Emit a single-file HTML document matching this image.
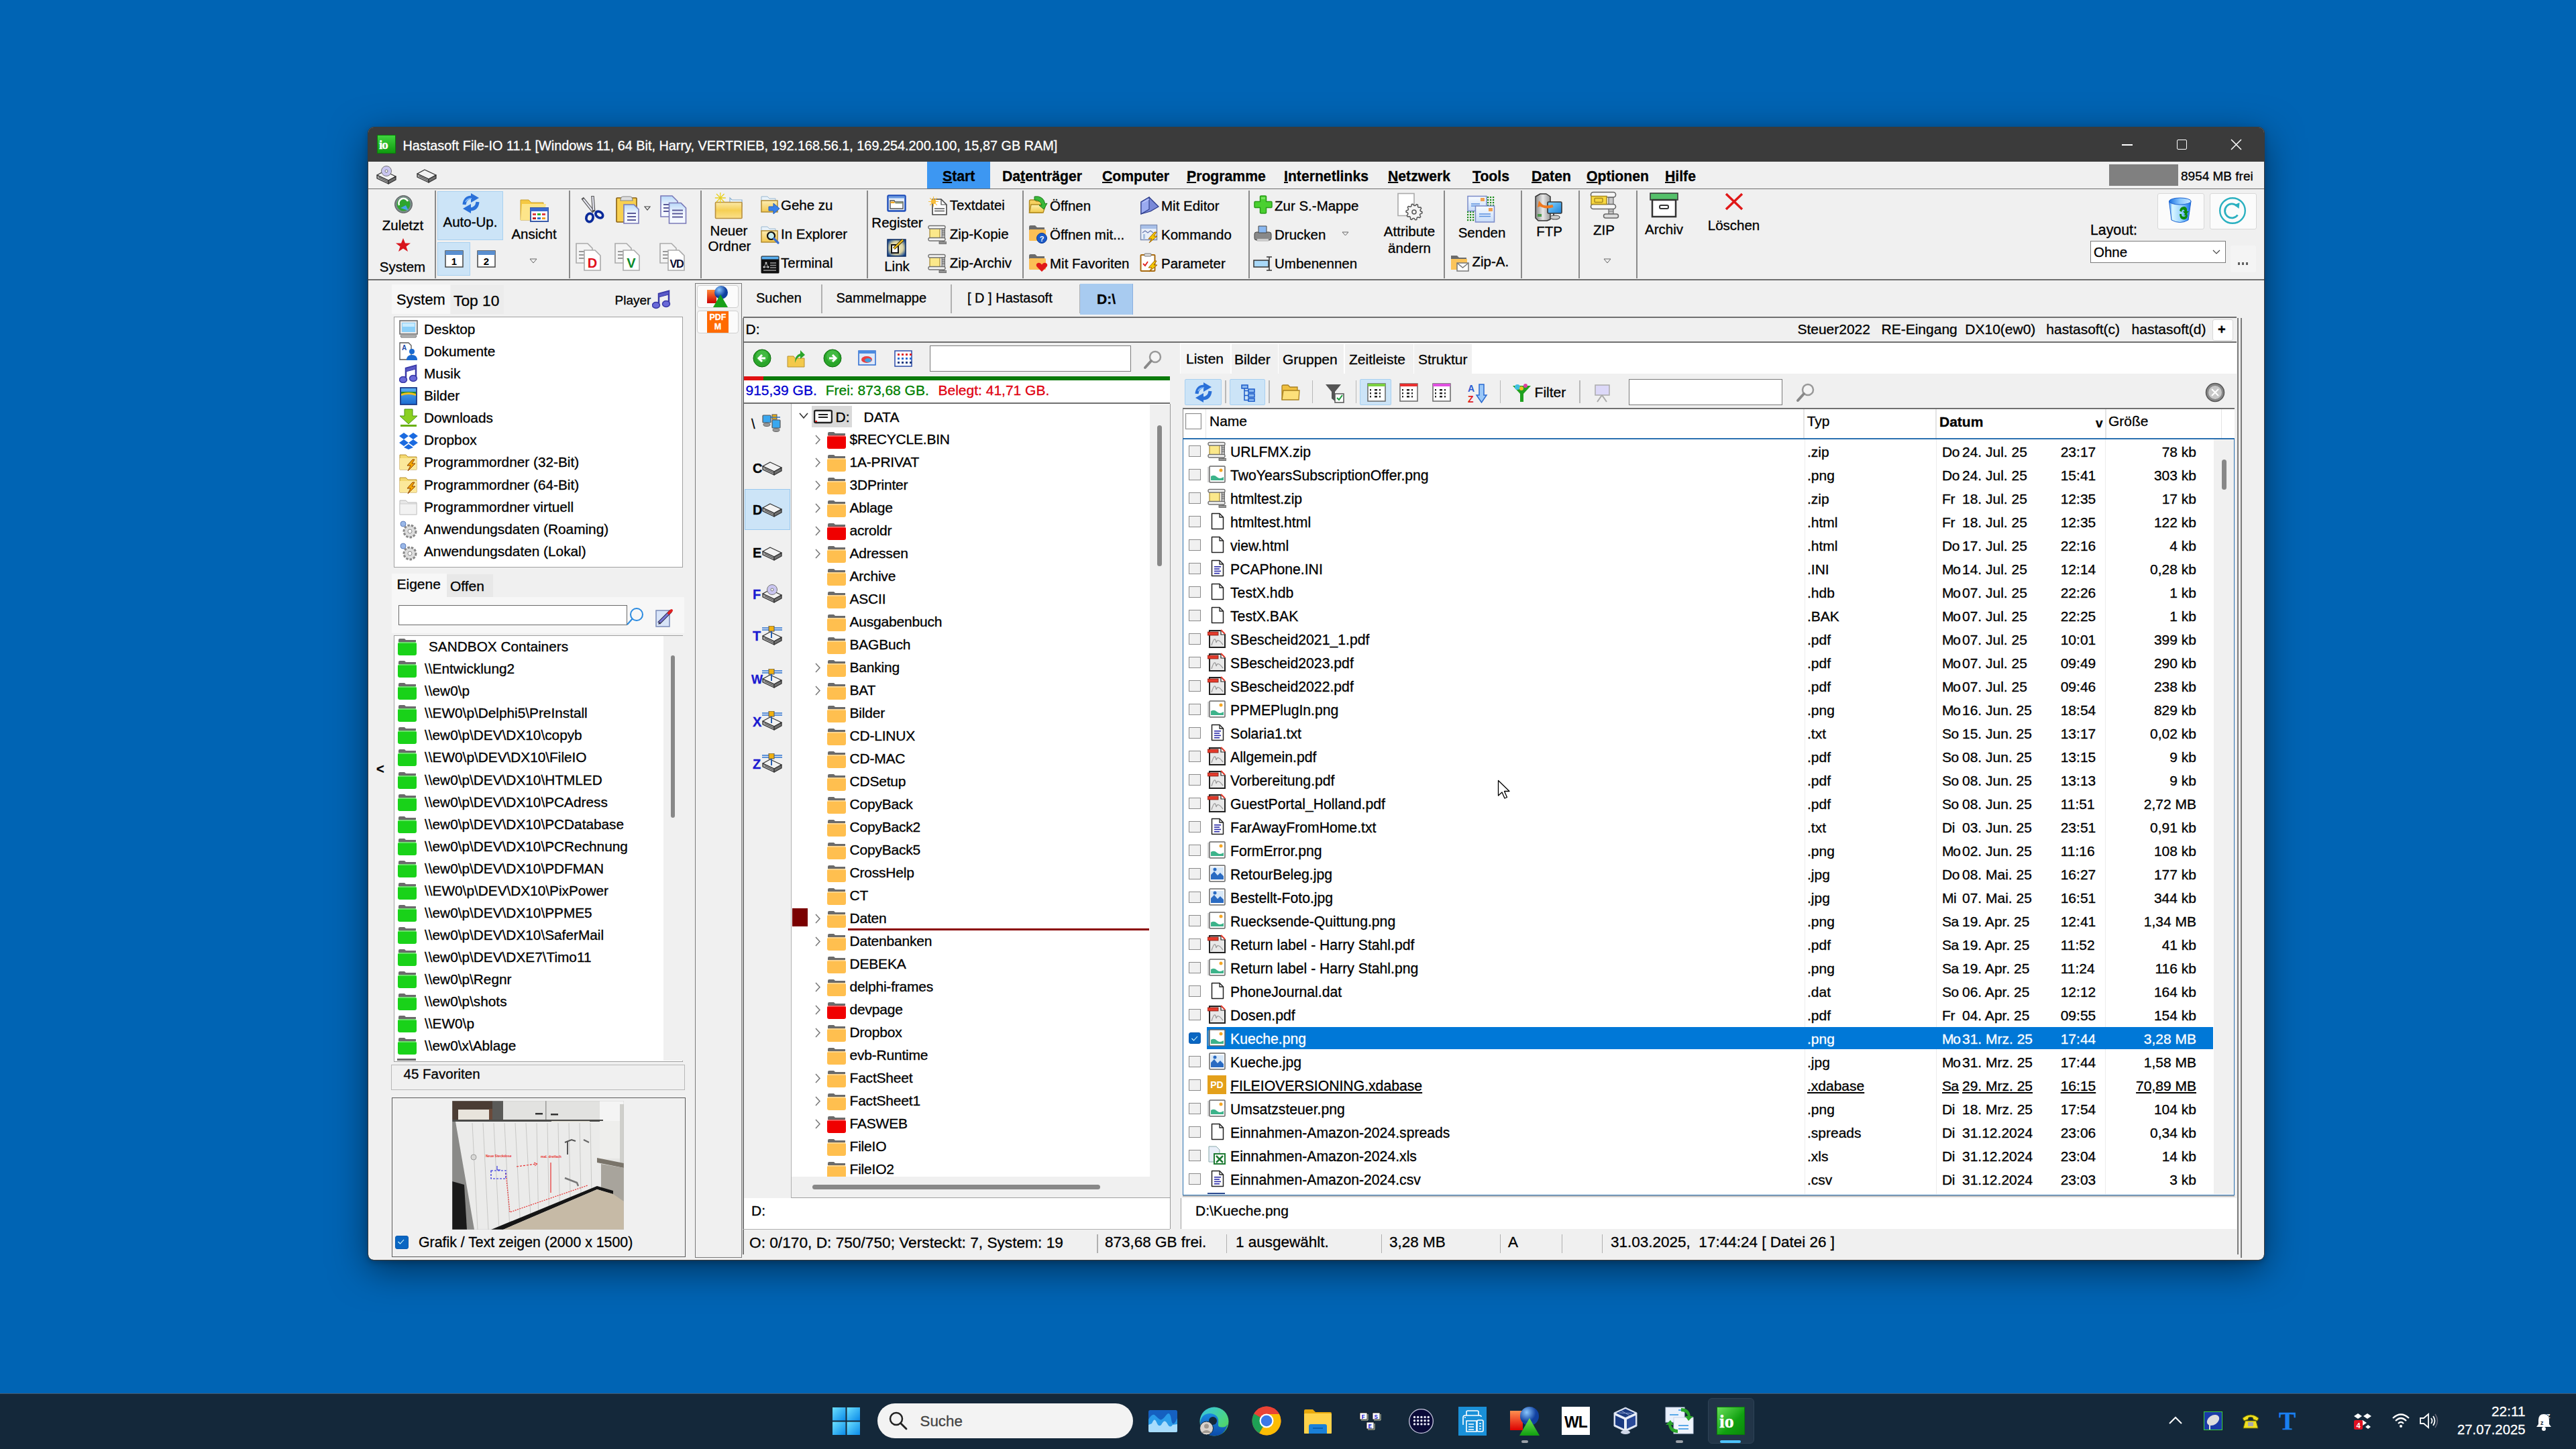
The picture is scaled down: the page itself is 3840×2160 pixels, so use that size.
<!DOCTYPE html><html><head><meta charset="utf-8"><style>
html,body{margin:0;padding:0;width:3840px;height:2160px;overflow:hidden;background:#0064b4}
body div,body svg{position:absolute}
.t{white-space:nowrap;font-family:"Liberation Sans",sans-serif;-webkit-text-stroke:0.3px currentColor}
</style></head><body><div style="left:0.0px;top:0.0px;width:3840.0px;height:2160.0px;background:#0064b4"></div>
<div style="left:549.0px;top:190.0px;width:2826.0px;height:1688.0px;background:#f0f0f0;border-radius:8px;box-shadow:0 14px 55px rgba(0,0,0,.5),0 3px 10px rgba(0,0,0,.25);outline:1px solid #3a3a3a"></div>
<div style="left:549.0px;top:190.0px;width:2826.0px;height:51.0px;background:#3b3b3b;border-radius:8px 8px 0 0"></div>
<div style="left:562.0px;top:201.0px;width:28.0px;height:28.0px;background:linear-gradient(#3fd43f,#0f9a0f);border:1px solid #0a7a0a;box-sizing:border-box"></div>
<div class="t" style="left:565.0px;top:204.0px;line-height:24px;font-size:19px;font-weight:700;color:#fff;font-family:'Liberation Serif';letter-spacing:-1px">io</div>
<div class="t" style="left:600.5px;top:204.5px;line-height:25px;font-size:19.85px;font-weight:400;color:#fff;">Hastasoft File-IO 11.1 [Windows 11, 64 Bit, Harry, VERTRIEB, 192.168.56.1, 169.254.200.100, 15,87 GB RAM]</div>
<div style="left:3163.0px;top:215.0px;width:16.0px;height:1.5px;background:#fff"></div>
<div style="left:3245.0px;top:208.0px;width:15.0px;height:15.0px;border:1.5px solid #fff;border-radius:2px;box-sizing:border-box"></div>
<svg style="left:3325.0px;top:207.0px" width="17.0" height="17.0" viewBox="0 0 17 17"><path d="M1 1 L16 16 M16 1 L1 16" stroke="#fff" stroke-width="1.5"/></svg>
<div style="left:549.0px;top:241.0px;width:2826.0px;height:40.0px;background:#f0f0f0"></div>
<svg style="left:561.0px;top:246.0px" width="30.0" height="30.0" viewBox="0 0 30 30"><g transform="translate(0,6)"><path d="M1 9 L12 3 L29 11 L18 17Z" fill="#f2f2f2" stroke="#333" stroke-width="1.3" stroke-linejoin="round"/><path d="M1 9 V14 L18 22 V17Z" fill="#a8a8a8" stroke="#333" stroke-width="1.3" stroke-linejoin="round"/><path d="M18 17 V22 L29 16 V11Z" fill="#707070" stroke="#333" stroke-width="1.3" stroke-linejoin="round"/><path d="M4 12.5 L17 19" stroke="#555" stroke-width="1.2"/></g><circle cx="15" cy="9" r="7.5" fill="#c9c5f0" stroke="#777" stroke-width="1"/><circle cx="15" cy="9" r="2" fill="#fff" stroke="#777"/></svg>
<svg style="left:621.0px;top:250.0px" width="30.0" height="24.0" viewBox="0 0 30 24"><path d="M1 9 L12 3 L29 11 L18 17Z" fill="#f2f2f2" stroke="#333" stroke-width="1.3" stroke-linejoin="round"/><path d="M1 9 V14 L18 22 V17Z" fill="#a8a8a8" stroke="#333" stroke-width="1.3" stroke-linejoin="round"/><path d="M18 17 V22 L29 16 V11Z" fill="#707070" stroke="#333" stroke-width="1.3" stroke-linejoin="round"/><path d="M4 12.5 L17 19" stroke="#555" stroke-width="1.2"/></svg>
<div style="left:1382.0px;top:241.0px;width:93.5px;height:40.0px;background:#3d97f2"></div>
<div class="t" style="left:1405.0px;top:250.0px;line-height:26px;font-size:21.2px;font-weight:700;color:#000;text-underline-offset:1px;text-decoration-thickness:1.5px"><u>S</u>tart</div>
<div class="t" style="left:1494.0px;top:250.0px;line-height:26px;font-size:21.2px;font-weight:700;color:#000;text-underline-offset:1px;text-decoration-thickness:1.5px">Da<u>t</u>enträger</div>
<div class="t" style="left:1643.0px;top:250.0px;line-height:26px;font-size:21.2px;font-weight:700;color:#000;text-underline-offset:1px;text-decoration-thickness:1.5px"><u>C</u>omputer</div>
<div class="t" style="left:1769.0px;top:250.0px;line-height:26px;font-size:21.2px;font-weight:700;color:#000;text-underline-offset:1px;text-decoration-thickness:1.5px"><u>P</u>rogramme</div>
<div class="t" style="left:1914.0px;top:250.0px;line-height:26px;font-size:21.2px;font-weight:700;color:#000;text-underline-offset:1px;text-decoration-thickness:1.5px"><u>I</u>nternetlinks</div>
<div class="t" style="left:2069.0px;top:250.0px;line-height:26px;font-size:21.2px;font-weight:700;color:#000;text-underline-offset:1px;text-decoration-thickness:1.5px"><u>N</u>etzwerk</div>
<div class="t" style="left:2195.0px;top:250.0px;line-height:26px;font-size:21.2px;font-weight:700;color:#000;text-underline-offset:1px;text-decoration-thickness:1.5px"><u>T</u>ools</div>
<div class="t" style="left:2283.0px;top:250.0px;line-height:26px;font-size:21.2px;font-weight:700;color:#000;text-underline-offset:1px;text-decoration-thickness:1.5px"><u>D</u>aten</div>
<div class="t" style="left:2365.0px;top:250.0px;line-height:26px;font-size:21.2px;font-weight:700;color:#000;text-underline-offset:1px;text-decoration-thickness:1.5px"><u>O</u>ptionen</div>
<div class="t" style="left:2482.0px;top:250.0px;line-height:26px;font-size:21.2px;font-weight:700;color:#000;text-underline-offset:1px;text-decoration-thickness:1.5px"><u>H</u>ilfe</div>
<div style="left:3144.0px;top:245.0px;width:103.0px;height:31.5px;background:#808080"></div>
<div class="t" style="left:3251.0px;top:251.0px;line-height:24px;font-size:19.0px;font-weight:400;color:#000;">8954 MB frei</div>
<div style="left:549.0px;top:280.5px;width:2826.0px;height:1.3px;background:#6e6e6e"></div>
<div style="left:549.0px;top:282.5px;width:2826.0px;height:134.0px;background:#f0f0f0"></div>
<div style="left:549.0px;top:416.0px;width:2826.0px;height:2.0px;background:#6e6e6e"></div>
<div style="left:648.0px;top:284.0px;width:2.0px;height:131.0px;background:#8a8a8a"></div>
<div style="left:848.0px;top:284.0px;width:2.0px;height:131.0px;background:#8a8a8a"></div>
<div style="left:1044.0px;top:284.0px;width:2.0px;height:131.0px;background:#8a8a8a"></div>
<div style="left:1292.0px;top:284.0px;width:2.0px;height:131.0px;background:#8a8a8a"></div>
<div style="left:1524.0px;top:284.0px;width:2.0px;height:131.0px;background:#8a8a8a"></div>
<div style="left:1861.0px;top:284.0px;width:2.0px;height:131.0px;background:#8a8a8a"></div>
<div style="left:2152.0px;top:284.0px;width:2.0px;height:131.0px;background:#8a8a8a"></div>
<div style="left:2267.0px;top:284.0px;width:2.0px;height:131.0px;background:#8a8a8a"></div>
<div style="left:2353.0px;top:284.0px;width:2.0px;height:131.0px;background:#8a8a8a"></div>
<div style="left:2439.0px;top:284.0px;width:2.0px;height:131.0px;background:#8a8a8a"></div>
<svg style="left:587.0px;top:290.0px" width="29.0" height="29.0" viewBox="0 0 29 29"><circle cx="14.5" cy="14.5" r="13" fill="#7a8a8a" stroke="#555" stroke-width="1"/><circle cx="14.5" cy="14.5" r="10" fill="#2ea52e"/><path d="M8 16 A7 7 0 0 1 21 10" stroke="#fff" stroke-width="2.5" fill="none"/><path d="M10 20 L22 24 L18 16Z" fill="#4aa3e8"/></svg>
<div class="t" style="left:500.5px;width:200px;text-align:center;top:323.0px;line-height:26px;font-size:20.5px;font-weight:400;color:#000;">Zuletzt</div>
<svg style="left:589.0px;top:354.0px" width="24.0" height="22.0" viewBox="0 0 24 22"><path d="M12 1 L15 8.5 L23 8.5 L16.5 13.5 L19 21 L12 16.5 L5 21 L7.5 13.5 L1 8.5 L9 8.5Z" fill="#d8141c"/></svg>
<div class="t" style="left:500.0px;width:200px;text-align:center;top:384.5px;line-height:26px;font-size:20.5px;font-weight:400;color:#000;">System</div>
<div style="left:651.5px;top:284.5px;width:98.0px;height:73.0px;background:#cce4f7;border:1px solid #a8d0f0;box-sizing:border-box"></div>
<div style="left:651.5px;top:361.0px;width:49.0px;height:50.0px;background:#cce4f7;border:1px solid #a8d0f0;box-sizing:border-box"></div>
<svg style="left:687.0px;top:288.0px" width="30.0" height="30.0" viewBox="0 0 30 30"><path d="M5 17 Q6 6 17 6" stroke="#2a70d8" stroke-width="5" fill="none"/><path d="M15 0 L27 7 L15 14Z" fill="#2a70d8"/><path d="M25 13 Q24 24 13 24" stroke="#2a70d8" stroke-width="5" fill="none"/><path d="M15 30 L3 23 L15 16Z" fill="#2a70d8"/><path d="M7 13 Q9 8 16 8" stroke="#8ac0ff" stroke-width="1.5" fill="none"/></svg>
<div class="t" style="left:601.0px;width:200px;text-align:center;top:317.5px;line-height:26px;font-size:20.5px;font-weight:400;color:#000;">Auto-Up.</div>
<svg style="left:663.0px;top:373.0px" width="28.0" height="26.0" viewBox="0 0 28 26"><rect x="1" y="1" width="26" height="24" fill="#fff" stroke="#444" stroke-width="1.5"/><rect x="1" y="1" width="26" height="6" fill="#5a8fd0"/><text x="14" y="22" font-family="Liberation Sans" font-size="15" font-weight="700" text-anchor="middle">1</text></svg>
<svg style="left:711.0px;top:373.0px" width="28.0" height="26.0" viewBox="0 0 28 26"><rect x="1" y="1" width="26" height="24" fill="#fff" stroke="#444" stroke-width="1.5"/><rect x="1" y="1" width="26" height="6" fill="#5a8fd0"/><text x="14" y="22" font-family="Liberation Sans" font-size="15" font-weight="700" text-anchor="middle">2</text></svg>
<svg style="left:774.0px;top:290.0px" width="44.0" height="43.0" viewBox="0 0 44 43"><path d="M2 8 H14 L18 12 H36 V38 H2Z" fill="#f5c842" stroke="#c8a030" stroke-width="1"/><path d="M4 14 H40 L36 38 H2Z" fill="#fde58a"/><rect x="17" y="20" width="26" height="20" fill="#fff" stroke="#3a5aa8" stroke-width="2"/><rect x="17" y="20" width="26" height="5" fill="#3a6ad0"/><g fill="#e04040"><rect x="20" y="28" width="5" height="3"/><rect x="20" y="34" width="5" height="3" fill="#c02020"/></g><rect x="27" y="28" width="5" height="3" fill="#2db52d"/><rect x="34" y="28" width="5" height="3" fill="#e04040"/><rect x="27" y="34" width="5" height="3" fill="#2a70d0"/><rect x="34" y="34" width="5" height="3" fill="#f0a020"/></svg>
<div class="t" style="left:696.0px;width:200px;text-align:center;top:336.0px;line-height:26px;font-size:20.5px;font-weight:400;color:#000;">Ansicht</div>
<svg style="left:789.0px;top:385.0px" width="12.0" height="8.0" viewBox="0 0 12 8"><path d="M1 1 H11 L6 7Z" fill="none" stroke="#666" stroke-width="1"/></svg>
<svg style="left:866.0px;top:292.0px" width="36.0" height="42.0" viewBox="0 0 36 42"><path d="M3.6 4.9 L17.5 22.3" stroke="#555" stroke-width="4.5" stroke-linecap="square"/><path d="M3.6 4.9 L17.5 22.3" stroke="#e8e8f4" stroke-width="2.2"/><path d="M17.5 1 L19 21" stroke="#555" stroke-width="4.5" stroke-linecap="square"/><path d="M17.5 1 L19 21" stroke="#e8e8f4" stroke-width="2.2"/><ellipse cx="13" cy="32.5" rx="5" ry="6.2" fill="none" stroke="#0a2a9a" stroke-width="3.8" transform="rotate(15 13 32.5)"/><ellipse cx="27.3" cy="28" rx="5.8" ry="4.2" fill="none" stroke="#0a2a9a" stroke-width="3.8" transform="rotate(35 27.3 28)"/></svg>
<svg style="left:917.0px;top:292.0px" width="40.0" height="43.0" viewBox="0 0 40 43"><defs><linearGradient id="pg" x1="0" y1="0" x2="0" y2="1"><stop offset="0" stop-color="#b8d8f8"/><stop offset=".5" stop-color="#f4f8ff"/></linearGradient></defs><rect x="2" y="3" width="30" height="36" rx="1" fill="#f8d050" stroke="#8a6010" stroke-width="1.6"/><path d="M8 7 Q8 1 12 1 H22 Q26 1 26 7Z" fill="#ddd" stroke="#888" stroke-width="1.2"/><path d="M13 13 H28 L35 20 V41 H13Z" fill="url(#pg)" stroke="#7a7ab8" stroke-width="1.6"/><path d="M18 26 H31 M18 31 H31 M18 36 H31" stroke="#5a5a98" stroke-width="2"/></svg>
<svg style="left:960.0px;top:307.0px" width="10.0" height="7.0" viewBox="0 0 10 7"><path d="M1 1 H9 L5 6Z" fill="none" stroke="#444" stroke-width="1.1"/></svg>
<svg style="left:984.0px;top:291.0px" width="40.0" height="43.0" viewBox="0 0 40 43"><defs><linearGradient id="pg2" x1="0" y1="0" x2="0" y2="1"><stop offset="0" stop-color="#b8d8f8"/><stop offset=".5" stop-color="#f4f8ff"/></linearGradient></defs><path d="M1 1 H18 L26 9 V32 H1Z" fill="url(#pg2)" stroke="#7a7ab8" stroke-width="1.6"/><path d="M5 14 H16 M5 19 H16 M5 24 H16" stroke="#5a5a98" stroke-width="2"/><path d="M13.5 11.5 H31 L38.5 19 V42 H13.5Z" fill="url(#pg2)" stroke="#7a7ab8" stroke-width="1.6"/><path d="M18 22.5 H34 M18 27.5 H34 M18 32.5 H34" stroke="#5a5a98" stroke-width="2"/></svg>
<svg style="left:858.0px;top:362.0px" width="40.0" height="43.0" viewBox="0 0 40 43"><path d="M1 1 H18 L25 8 V30 H1Z" fill="#f4f4f4" stroke="#aaa" stroke-width="1.6"/><path d="M5 13 H16 M5 18 H16 M5 23 H16" stroke="#999" stroke-width="1.8"/><path d="M13 11 H29 L37 19 V41 H13Z" fill="#fff" stroke="#aaa" stroke-width="1.6"/><text x="25" y="36.5" font-family="Liberation Sans" font-size="20" font-weight="700" fill="#e0101a" text-anchor="middle" >D</text></svg>
<svg style="left:916.0px;top:362.0px" width="40.0" height="43.0" viewBox="0 0 40 43"><path d="M1 1 H18 L25 8 V30 H1Z" fill="#f4f4f4" stroke="#aaa" stroke-width="1.6"/><path d="M5 13 H16 M5 18 H16 M5 23 H16" stroke="#999" stroke-width="1.8"/><path d="M13 11 H29 L37 19 V41 H13Z" fill="#fff" stroke="#aaa" stroke-width="1.6"/><text x="25" y="36.5" font-family="Liberation Sans" font-size="20" font-weight="700" fill="#0a8a2a" text-anchor="middle" >V</text></svg>
<svg style="left:983.0px;top:362.0px" width="40.0" height="43.0" viewBox="0 0 40 43"><path d="M1 1 H18 L25 8 V30 H1Z" fill="#f4f4f4" stroke="#aaa" stroke-width="1.6"/><path d="M5 13 H16 M5 18 H16 M5 23 H16" stroke="#999" stroke-width="1.8"/><path d="M13 11 H29 L37 19 V41 H13Z" fill="#fff" stroke="#aaa" stroke-width="1.6"/><text x="25.5" y="36.5" font-family="Liberation Sans" font-size="16" font-weight="700" fill="#0a0a30" text-anchor="middle" letter-spacing='-1'>VD</text></svg>
<svg style="left:1064.0px;top:286.0px" width="44.0" height="41.0" viewBox="0 0 44 41"><defs><linearGradient id="fy" x1="0" y1="0" x2="0" y2="1"><stop offset="0" stop-color="#fbe9a8"/><stop offset=".5" stop-color="#f5cf55"/><stop offset="1" stop-color="#fbe08a"/></linearGradient></defs><path d="M24 9 L27 12 H42 V22 H24Z" fill="#eef6fc" stroke="#8ab0d0" stroke-width="1.2"/><rect x="2.5" y="15.5" width="39.5" height="24" rx="1" fill="url(#fy)" stroke="#b89040" stroke-width="1.6"/><g stroke="#e8d020" stroke-width="1.3"><path d="M9.8 1 V17 M1.8 9 H17.8 M4 3 L15.6 15 M15.6 3 L4 15"/></g></svg>
<div class="t" style="left:986.5px;width:200px;text-align:center;top:330.5px;line-height:26px;font-size:20.5px;font-weight:400;color:#000;">Neuer</div>
<div class="t" style="left:987.5px;width:200px;text-align:center;top:354.0px;line-height:26px;font-size:20.5px;font-weight:400;color:#000;">Ordner</div>
<svg style="left:1134.0px;top:292.0px" width="30.0" height="28.0" viewBox="0 0 30 28"><defs><linearGradient id="fy2" x1="0" y1="0" x2="0" y2="1"><stop offset="0" stop-color="#fcecb0"/><stop offset="1" stop-color="#f2c850"/></linearGradient></defs><path d="M1 1 H10 L13 4 H22 V9 H1Z" fill="#e8f2fa" stroke="#9ab8d0" stroke-width="1"/><rect x="1" y="7" width="24" height="17" fill="url(#fy2)" stroke="#b08a30" stroke-width="1.5"/><path d="M12 16 H19 V11 L28 19 L19 27 V22 H12Z" fill="#3a80e8" stroke="#2060c0" stroke-width="1"/></svg>
<div class="t" style="left:1164.0px;top:292.5px;line-height:26px;font-size:20.5px;font-weight:400;color:#000;">Gehe zu</div>
<svg style="left:1134.0px;top:336.5px" width="30.0" height="28.0" viewBox="0 0 30 28"><defs><linearGradient id="fy2" x1="0" y1="0" x2="0" y2="1"><stop offset="0" stop-color="#fcecb0"/><stop offset="1" stop-color="#f2c850"/></linearGradient></defs><path d="M1 1 H10 L13 4 H22 V9 H1Z" fill="#e8f2fa" stroke="#9ab8d0" stroke-width="1"/><rect x="1" y="7" width="24" height="17" fill="url(#fy2)" stroke="#b08a30" stroke-width="1.5"/><circle cx="15.5" cy="14.5" r="5.5" fill="#c8eef0" stroke="#111" stroke-width="2.2"/><path d="M19.5 18.5 L26 25" stroke="#3a70d0" stroke-width="3.2" stroke-linecap="round"/></svg>
<div class="t" style="left:1164.0px;top:336.0px;line-height:26px;font-size:20.5px;font-weight:400;color:#000;">In Explorer</div>
<svg style="left:1134.0px;top:380.5px" width="28.0" height="27.0" viewBox="0 0 28 27"><rect x="0.5" y="0.5" width="27" height="26" rx="1.5" fill="#101010"/><rect x="1.5" y="1.5" width="25" height="4" fill="#5ab0f0"/><circle cx="8" cy="11" r="1.5" fill="#ddd"/><circle cx="5" cy="17" r="1.5" fill="#ddd"/><circle cx="11" cy="17" r="1.5" fill="#ddd"/><path d="M8 11 L5 17 H11Z" stroke="#aaa" fill="none"/><path d="M14 11 H23 M14 14.5 H23 M14 18 H23 M4 22 H23" stroke="#999" stroke-width="1.3"/></svg>
<div class="t" style="left:1164.0px;top:379.0px;line-height:26px;font-size:20.5px;font-weight:400;color:#000;">Terminal</div>
<svg style="left:1322.0px;top:290.0px" width="30.0" height="27.0" viewBox="0 0 30 27"><rect x="1.5" y="1.5" width="26" height="23" rx="1.5" fill="#e4eefa" stroke="#1a4ab8" stroke-width="2.4"/><rect x="2.5" y="2.5" width="24" height="3" fill="#6a9ae0"/><path d="M5 9 H11 L12 11 H24 V21 H5Z" fill="#fff" stroke="#555" stroke-width="1.4"/><rect x="5.5" y="10.5" width="6" height="2.5" fill="#f0a820"/><rect x="12.5" y="11.5" width="11" height="2" fill="#8a9a7a"/></svg>
<div class="t" style="left:1237.5px;width:200px;text-align:center;top:319.0px;line-height:26px;font-size:20.5px;font-weight:400;color:#000;">Register</div>
<svg style="left:1322.0px;top:356.0px" width="30.0" height="27.0" viewBox="0 0 30 27"><defs><radialGradient id="lkg" cx=".5" cy=".5" r=".6"><stop offset="0" stop-color="#f8f4d8"/><stop offset=".6" stop-color="#d8d0a0"/><stop offset="1" stop-color="#1a4a90"/></radialGradient></defs><rect x="1" y="1" width="27" height="25" fill="url(#lkg)" stroke="#0a2a60" stroke-width="1.5"/><rect x="7" y="9" width="10" height="12" fill="#fff" stroke="#111" stroke-width="2"/><path d="M10.5 14.5 L24 1.5" stroke="#3a2a00" stroke-width="4"/><path d="M10.5 14.5 L24 1.5" stroke="#f0c020" stroke-width="2.4"/></svg>
<div class="t" style="left:1237.0px;width:200px;text-align:center;top:384.0px;line-height:26px;font-size:20.5px;font-weight:400;color:#000;">Link</div>
<svg style="left:1383.0px;top:291.5px" width="30.0" height="29.0" viewBox="0 0 30 29"><path d="M7 5 H20 L28 13 V28 H7Z" fill="#fff" stroke="#444" stroke-width="1.6" stroke-linejoin="round"/><path d="M20 5 V13 H28" fill="none" stroke="#444" stroke-width="1.2"/><path d="M10 19 H25 M10 22.5 H25" stroke="#555" stroke-width="1.3"/><circle cx="8.5" cy="8.5" r="3.5" fill="#f7b020"/><g stroke="#f7c040" stroke-width="1.2"><path d="M8.5 1 V16 M1 8.5 H16 M3.2 3.2 L13.8 13.8 M13.8 3.2 L3.2 13.8"/></g></svg>
<div class="t" style="left:1415.8px;top:292.5px;line-height:26px;font-size:20.5px;font-weight:400;color:#000;">Textdatei</div>
<svg style="left:1383.0px;top:335.0px" width="28.0" height="29.0" viewBox="0 0 28 29"><rect x="3" y="4" width="15" height="17" fill="#fbe88a" stroke="#a88a30" stroke-width="1.2"/><rect x="1" y="1.5" width="25" height="4.5" rx="2" fill="#f4f4f4" stroke="#707070" stroke-width="1.4"/><rect x="1" y="19.5" width="25" height="4.5" rx="2" fill="#f4f4f4" stroke="#707070" stroke-width="1.4"/><rect x="21" y="6" width="4.5" height="13.5" fill="#b8b8b8" stroke="#666" stroke-width="1"/><path d="M21 9 H25.5 M21 12 H25.5 M21 15 H25.5" stroke="#555" stroke-width="0.8"/><rect x="21.5" y="24" width="3.5" height="2" fill="#888"/><rect x="17" y="25.5" width="11" height="3" fill="#999" stroke="#555" stroke-width="0.8"/></svg>
<div class="t" style="left:1415.8px;top:336.0px;line-height:26px;font-size:20.5px;font-weight:400;color:#000;">Zip-Kopie</div>
<svg style="left:1383.0px;top:378.0px" width="28.0" height="29.0" viewBox="0 0 28 29"><rect x="3" y="4" width="15" height="17" fill="#fbe88a" stroke="#a88a30" stroke-width="1.2"/><rect x="1" y="1.5" width="25" height="4.5" rx="2" fill="#f4f4f4" stroke="#707070" stroke-width="1.4"/><rect x="1" y="19.5" width="25" height="4.5" rx="2" fill="#f4f4f4" stroke="#707070" stroke-width="1.4"/><rect x="21" y="6" width="4.5" height="13.5" fill="#b8b8b8" stroke="#666" stroke-width="1"/><path d="M21 9 H25.5 M21 12 H25.5 M21 15 H25.5" stroke="#555" stroke-width="0.8"/><rect x="21.5" y="24" width="3.5" height="2" fill="#888"/><rect x="17" y="25.5" width="11" height="3" fill="#999" stroke="#555" stroke-width="0.8"/></svg>
<div class="t" style="left:1415.8px;top:379.0px;line-height:26px;font-size:20.5px;font-weight:400;color:#000;">Zip-Archiv</div>
<svg style="left:1533.0px;top:290.5px" width="30.0" height="28.0" viewBox="0 0 30 28"><defs><linearGradient id="of" x1="0" y1="0" x2="0" y2="1"><stop offset="0" stop-color="#fdf0b0"/><stop offset="1" stop-color="#f0c848"/></linearGradient></defs><path d="M1.5 9 Q1.5 7 3.5 7 H10 L12 9 H20 V26 H1.5Z" fill="#f5d060" stroke="#b08a20" stroke-width="1.4"/><path d="M4 14 H26 L22 26 H1.5Z" fill="url(#of)" stroke="#b08a20" stroke-width="1.4"/><path d="M9 2 Q22 0 25 13 L28 12 L23 21 L16 15 L20 15 Q18 7 9 7Z" fill="#3ab83a" stroke="#1a7a1a" stroke-width="1"/></svg>
<div class="t" style="left:1565.0px;top:293.5px;line-height:26px;font-size:20.5px;font-weight:400;color:#000;">Öffnen</div>
<svg style="left:1533.0px;top:333.5px" width="29.0" height="29.0" viewBox="0 0 29 29"><path d="M1 4 Q1 2 3 2 H10 L13 5 H24 V9 H1Z" fill="#6b6b6b"/><rect x="1" y="8" width="25" height="17" rx="1.5" fill="#fbbf55"/><circle cx="20" cy="21" r="7.5" fill="#1a5ac8" stroke="#0a3a98" stroke-width="1"/><text x="20" y="25.5" font-size="11" font-family="Liberation Sans" font-weight="700" fill="#fff" text-anchor="middle">?</text></svg>
<div class="t" style="left:1565.0px;top:336.5px;line-height:26px;font-size:20.5px;font-weight:400;color:#000;">Öffnen mit...</div>
<svg style="left:1533.0px;top:376.5px" width="29.0" height="29.0" viewBox="0 0 29 29"><path d="M1 4 Q1 2 3 2 H10 L13 5 H24 V9 H1Z" fill="#6b6b6b"/><rect x="1" y="8" width="25" height="17" rx="1.5" fill="#fbbf55"/><path d="M20 28 L13 21 Q10 17 14 15 Q18 14 20 17.5 Q22 14 26 15 Q30 17 27 21Z" fill="#e01818"/></svg>
<div class="t" style="left:1565.0px;top:379.5px;line-height:26px;font-size:20.5px;font-weight:400;color:#000;">Mit Favoriten</div>
<svg style="left:1699.0px;top:291.5px" width="30.0" height="28.0" viewBox="0 0 30 28"><path d="M2 9 L14 2 L28 16 L16 23 L2 27Z" fill="#7a8ad8" stroke="#2a3a88" stroke-width="1.3" stroke-linejoin="round"/><path d="M2 9 L14 2 L14 20 L2 27Z" fill="#9aaaf0" stroke="#2a3a88" stroke-width="1.1"/><path d="M5 10 L14 5" stroke="#c8d0ff" stroke-width="1"/></svg>
<div class="t" style="left:1731.0px;top:293.5px;line-height:26px;font-size:20.5px;font-weight:400;color:#000;">Mit Editor</div>
<svg style="left:1699.0px;top:333.5px" width="30.0" height="29.0" viewBox="0 0 30 29"><rect x="1.5" y="1.5" width="24" height="22" fill="#e8eef8" stroke="#7a8ab0" stroke-width="1.5"/><rect x="2" y="2" width="23" height="5" fill="#a8c0e8"/><path d="M4 13 L8 10 L12 13 L16 10 L20 13" stroke="#6a7ab0" fill="none" stroke-width="1.2"/><rect x="5" y="15" width="3" height="7" fill="#a8c0e0"/><path d="M22 12 L13 22 H18 L14 28 L26 18 H21 L25 12Z" fill="#f5c800" stroke="#a06000" stroke-width="1"/></svg>
<div class="t" style="left:1731.0px;top:336.5px;line-height:26px;font-size:20.5px;font-weight:400;color:#000;">Kommando</div>
<svg style="left:1699.0px;top:376.5px" width="30.0" height="29.0" viewBox="0 0 30 29"><rect x="1.5" y="3" width="21" height="24" rx="1" fill="#fff" stroke="#a86a10" stroke-width="2"/><rect x="7" y="1" width="10" height="4" rx="1" fill="#ddd" stroke="#777"/><path d="M5 16 L8 19 L12 13" stroke="#e02020" stroke-width="1.8" fill="none"/><path d="M22 12 L13 22 H18 L14 28 L26 18 H21 L25 12Z" fill="#f5c800" stroke="#a06000" stroke-width="1"/></svg>
<div class="t" style="left:1731.0px;top:379.5px;line-height:26px;font-size:20.5px;font-weight:400;color:#000;">Parameter</div>
<svg style="left:1869.0px;top:291.0px" width="28.0" height="28.0" viewBox="0 0 28 28"><path d="M9.5 2 Q9.5 1 11 1 H17 Q18.5 1 18.5 2 V9.5 H26 Q27 9.5 27 11 V17 Q27 18.5 26 18.5 H18.5 V26 Q18.5 27 17 27 H11 Q9.5 27 9.5 26 V18.5 H2 Q1 18.5 1 17 V11 Q1 9.5 2 9.5 H9.5Z" fill="#4ad030" stroke="#2a9a1a" stroke-width="1.5"/><path d="M11 3 H17 V6 H11Z" fill="#9af080" opacity=".6"/></svg>
<div class="t" style="left:1900.0px;top:293.5px;line-height:26px;font-size:20.5px;font-weight:400;color:#000;">Zur S.-Mappe</div>
<svg style="left:1868.0px;top:334.0px" width="28.0" height="28.0" viewBox="0 0 28 28"><rect x="2" y="12" width="25" height="12" rx="3" fill="#888" stroke="#444"/><path d="M8 3 H20 V13 H8Z" fill="#8ab8f0" stroke="#444"/><rect x="6" y="22" width="17" height="4" fill="#ccc"/></svg>
<div class="t" style="left:1900.0px;top:336.5px;line-height:26px;font-size:20.5px;font-weight:400;color:#000;">Drucken</div>
<svg style="left:2000.0px;top:345.0px" width="11.0" height="8.0" viewBox="0 0 11 8"><path d="M1 1 H10 L5.5 6Z" fill="none" stroke="#666" stroke-width="1"/></svg>
<svg style="left:1868.0px;top:381.0px" width="30.0" height="24.0" viewBox="0 0 30 24"><rect x="1" y="7" width="22" height="10" fill="#a8d8f8" stroke="#333" stroke-width="1.5"/><path d="M24 2 V22 M20 2 H28 M20 22 H28" stroke="#333" stroke-width="1.5"/></svg>
<div class="t" style="left:1900.0px;top:380.0px;line-height:26px;font-size:20.5px;font-weight:400;color:#000;">Umbenennen</div>
<svg style="left:2083.0px;top:287.0px" width="42.0" height="42.0" viewBox="0 0 42 42"><rect x="1" y="1.5" width="24" height="33" fill="#fff" stroke="#aaa" stroke-width="1.6"/><path d="M37.00 29.00 L36.85 30.88 L34.04 31.94 L33.46 33.31 L34.71 36.05 L33.49 37.49 L30.58 36.69 L29.31 37.46 L28.71 40.41 L26.88 40.85 L25.00 38.50 L23.51 38.38 L21.29 40.41 L19.55 39.69 L19.42 36.69 L18.28 35.72 L15.29 36.05 L14.31 34.45 L15.96 31.94 L15.62 30.49 L13.00 29.00 L13.15 27.12 L15.96 26.06 L16.54 24.69 L15.29 21.95 L16.51 20.51 L19.42 21.31 L20.69 20.54 L21.29 17.59 L23.12 17.15 L25.00 19.50 L26.49 19.62 L28.71 17.59 L30.45 18.31 L30.58 21.31 L31.72 22.28 L34.71 21.95 L35.69 23.55 L34.04 26.06 L34.38 27.51Z" fill="#f4f4f4" stroke="#555" stroke-width="1.5" stroke-linejoin="round"/><circle cx="25" cy="29" r="3" fill="none" stroke="#555" stroke-width="1.5"/></svg>
<div class="t" style="left:2001.0px;width:200px;text-align:center;top:332.0px;line-height:26px;font-size:20.5px;font-weight:400;color:#000;">Attribute</div>
<div class="t" style="left:2001.0px;width:200px;text-align:center;top:357.0px;line-height:26px;font-size:20.5px;font-weight:400;color:#000;">ändern</div>
<svg style="left:2186.0px;top:291.0px" width="44.0" height="41.0" viewBox="0 0 44 41"><defs><linearGradient id="env" x1="0" y1="0" x2="0" y2="1"><stop offset="0" stop-color="#f8fbff"/><stop offset="1" stop-color="#c8dcf8"/></linearGradient></defs><rect x="31" y="2" width="2.2" height="2.2" fill="#1a8a1a"/><rect x="35" y="2" width="2.2" height="2.2" fill="#1a8a1a"/><rect x="39" y="2" width="2.2" height="2.2" fill="#1a8a1a"/><rect x="31" y="6" width="2.2" height="2.2" fill="#1a8a1a"/><rect x="35" y="6" width="2.2" height="2.2" fill="#1a8a1a"/><rect x="39" y="6" width="2.2" height="2.2" fill="#1a8a1a"/><rect x="31" y="10" width="2.2" height="2.2" fill="#1a8a1a"/><rect x="35" y="10" width="2.2" height="2.2" fill="#1a8a1a"/><rect x="39" y="10" width="2.2" height="2.2" fill="#1a8a1a"/><rect x="31" y="14" width="2.2" height="2.2" fill="#1a8a1a"/><rect x="35" y="14" width="2.2" height="2.2" fill="#1a8a1a"/><rect x="39" y="14" width="2.2" height="2.2" fill="#1a8a1a"/><rect x="1" y="24" width="2.2" height="2.2" fill="#1a8a1a"/><rect x="5" y="24" width="2.2" height="2.2" fill="#1a8a1a"/><rect x="9" y="24" width="2.2" height="2.2" fill="#1a8a1a"/><rect x="1" y="28" width="2.2" height="2.2" fill="#1a8a1a"/><rect x="5" y="28" width="2.2" height="2.2" fill="#1a8a1a"/><rect x="9" y="28" width="2.2" height="2.2" fill="#1a8a1a"/><rect x="1" y="32" width="2.2" height="2.2" fill="#1a8a1a"/><rect x="5" y="32" width="2.2" height="2.2" fill="#1a8a1a"/><rect x="9" y="32" width="2.2" height="2.2" fill="#1a8a1a"/><rect x="1" y="36" width="2.2" height="2.2" fill="#1a8a1a"/><rect x="5" y="36" width="2.2" height="2.2" fill="#1a8a1a"/><rect x="9" y="36" width="2.2" height="2.2" fill="#1a8a1a"/><rect x="2" y="1.5" width="28" height="22" fill="url(#env)" stroke="#7a8ac8" stroke-width="1.5"/><rect x="21" y="4" width="6" height="5" fill="#f0a050"/><path d="M7 13 H20 M7 16 H20" stroke="#5a90e0" stroke-width="1.6"/><rect x="13.5" y="16" width="28" height="24" fill="url(#env)" stroke="#7a8ac8" stroke-width="1.5"/><rect x="33" y="19" width="6" height="5" fill="#f0a050"/><path d="M19 28 H36 M19 31.5 H36" stroke="#5a90e0" stroke-width="1.6"/></svg>
<div class="t" style="left:2109.0px;width:200px;text-align:center;top:334.0px;line-height:26px;font-size:20.5px;font-weight:400;color:#000;">Senden</div>
<svg style="left:2162.0px;top:379.0px" width="28.0" height="26.0" viewBox="0 0 28 26"><path d="M1 2 H10 L13 5 H24 V22 H1Z" fill="#6b6b6b"/><rect x="1" y="7" width="24" height="16" fill="#fbc45a"/><rect x="10" y="13" width="17" height="12" fill="#fff" stroke="#777" stroke-width="1.5"/><path d="M10 13 L18.5 20 L27 13" stroke="#777" stroke-width="1.5" fill="none"/></svg>
<div class="t" style="left:2194.5px;top:377.0px;line-height:26px;font-size:20.5px;font-weight:400;color:#000;">Zip-A.</div>
<svg style="left:2287.0px;top:287.0px" width="44.0" height="43.0" viewBox="0 0 44 43"><defs><linearGradient id="srv" x1="0" y1="0" x2="1" y2="0"><stop offset="0" stop-color="#888"/><stop offset=".5" stop-color="#e8e8e8"/><stop offset="1" stop-color="#999"/></linearGradient><linearGradient id="mon" x1="0" y1="0" x2="1" y2="1"><stop offset="0" stop-color="#8ad8ff"/><stop offset="1" stop-color="#1a80d8"/></linearGradient></defs><path d="M2 6 L9 2 H18 L24 6 V40 L19 42 H6 L2 38Z" fill="url(#srv)" stroke="#333" stroke-width="1.5" stroke-linejoin="round"/><rect x="5" y="32" width="6" height="4" fill="#4a9a4a"/><rect x="20" y="14" width="21" height="17" rx="1.5" fill="url(#mon)" stroke="#333" stroke-width="1.6"/><ellipse cx="31" cy="37" rx="7" ry="3" fill="#ccc" stroke="#444" stroke-width="1.2"/><path d="M29 31 V34" stroke="#444" stroke-width="2"/><path d="M8 17 Q14 24 28 20" stroke="#f07a20" stroke-width="4" fill="none"/><path d="M7 12 L5 22 L13 19Z" fill="#f07a20"/></svg>
<div class="t" style="left:2209.5px;width:200px;text-align:center;top:332.0px;line-height:26px;font-size:20.5px;font-weight:400;color:#000;">FTP</div>
<svg style="left:2370.0px;top:285.0px" width="45.0" height="41.0" viewBox="0 0 45 41"><rect x="28" y="9" width="7" height="28" fill="#c8c8c8" stroke="#666" stroke-width="1.2"/><path d="M28 30 H35" stroke="#777" stroke-width="1"/><rect x="1.5" y="1.5" width="37" height="7.5" rx="3.5" fill="#f6f6f6" stroke="#666" stroke-width="1.6"/><rect x="1.5" y="19.5" width="37" height="7" rx="3.5" fill="#f6f6f6" stroke="#666" stroke-width="1.6"/><rect x="2" y="7.5" width="23" height="12" fill="#f8d840" stroke="#a88a20" stroke-width="1.5"/><rect x="7" y="10.5" width="12" height="6" rx="1" fill="none" stroke="#a88a20" stroke-width="1.5"/><rect x="20.5" y="34" width="22" height="6" rx="3" fill="#ddd" stroke="#666" stroke-width="1.5"/></svg>
<div class="t" style="left:2291.0px;width:200px;text-align:center;top:330.0px;line-height:26px;font-size:20.5px;font-weight:400;color:#000;">ZIP</div>
<svg style="left:2390.0px;top:385.0px" width="12.0" height="8.0" viewBox="0 0 12 8"><path d="M1 1 H11 L6 7Z" fill="none" stroke="#666" stroke-width="1"/></svg>
<svg style="left:2459.0px;top:287.0px" width="43.0" height="38.0" viewBox="0 0 43 38"><rect x="1" y="1" width="41" height="10" fill="#55c06a" stroke="#333" stroke-width="1.5"/><rect x="4" y="11" width="35" height="25" fill="#fff" stroke="#333" stroke-width="2.5"/><rect x="15" y="19" width="13" height="5" rx="2" fill="none" stroke="#333" stroke-width="2"/></svg>
<div class="t" style="left:2380.5px;width:200px;text-align:center;top:328.5px;line-height:26px;font-size:20.5px;font-weight:400;color:#000;">Archiv</div>
<svg style="left:2571.0px;top:287.0px" width="28.0" height="27.0" viewBox="0 0 28 27"><path d="M2 2 L26 25 M26 2 L2 25" stroke="#e01818" stroke-width="3.5"/></svg>
<div class="t" style="left:2484.5px;width:200px;text-align:center;top:323.0px;line-height:26px;font-size:20.5px;font-weight:400;color:#000;">Löschen</div>
<div style="left:3215.5px;top:287.5px;width:70.0px;height:54.0px;background:#fbfbfb;border:1px solid #d8d8d8;border-radius:3px;box-sizing:border-box"></div>
<div style="left:3294.0px;top:287.5px;width:69.5px;height:54.0px;background:#fbfbfb;border:1px solid #d8d8d8;border-radius:3px;box-sizing:border-box"></div>
<svg style="left:3232.0px;top:293.0px" width="36.0" height="42.0" viewBox="0 0 36 42"><defs><linearGradient id="rb" x1="0" y1="0" x2="1" y2="0"><stop offset="0" stop-color="#3a90f0"/><stop offset=".15" stop-color="#d8f6ff"/><stop offset=".55" stop-color="#9ad4ff"/><stop offset="1" stop-color="#1070e8"/></linearGradient><linearGradient id="rt" x1="0" y1="0" x2="1" y2="0"><stop offset="0" stop-color="#1a70e0"/><stop offset=".5" stop-color="#8ac8ff"/><stop offset="1" stop-color="#c8e8ff"/></linearGradient></defs><path d="M1.5 7 L5 35 Q18 42 30 35 L34 7Z" fill="url(#rb)" stroke="#1a60d0" stroke-width="1"/><ellipse cx="17.8" cy="7" rx="16.3" ry="5" fill="url(#rt)" stroke="#1a60d0" stroke-width="1"/><path d="M17 21 Q18 15 24 15 Q29 16 28 22 L31 22 L26 27 L22 22 L24.5 22 Q24.5 19 22 19.5 Q20 20 20 23Z" fill="#0a8a0a"/><path d="M17 26 L20 26 Q20 30 23 30 Q26 30 26 28 L23 28 L28 24 L29 29 Q28 35 22 34 Q17 33 17 26Z" fill="#0a8a0a"/></svg>
<svg style="left:3307.0px;top:294.0px" width="42.0" height="42.0" viewBox="0 0 42 42"><circle cx="21" cy="20" r="18.8" fill="none" stroke="#2ab0c0" stroke-width="2.4"/><path d="M28.6 26.5 A10.5 10.5 0 1 1 27.5 13" fill="none" stroke="#2ab0c0" stroke-width="2.8"/><path d="M23.5 11.5 L31.5 8 L30.5 17Z" fill="#2ab0c0"/></svg>
<div class="t" style="left:3116.0px;top:329.5px;line-height:27px;font-size:21.3px;font-weight:400;color:#000;">Layout:</div>
<div style="left:3116.0px;top:359.0px;width:202.0px;height:33.0px;background:#fff;border:1px solid #7a7a7a;box-sizing:border-box"></div>
<div class="t" style="left:3121.0px;top:362.5px;line-height:26px;font-size:20.5px;font-weight:400;color:#000;">Ohne</div>
<svg style="left:3298.0px;top:372.0px" width="12.0" height="8.0" viewBox="0 0 12 8"><path d="M1 1 L6 6 L11 1" stroke="#444" stroke-width="1.2" fill="none"/></svg>
<div style="left:3325.0px;top:366.0px;width:38.0px;height:40.0px;background:#f4f4f4;border-radius:3px"></div>
<div style="left:3335.5px;top:391.0px;width:3.5px;height:3.5px;background:#606060"></div>
<div style="left:3341.5px;top:391.0px;width:3.5px;height:3.5px;background:#606060"></div>
<div style="left:3347.5px;top:391.0px;width:3.5px;height:3.5px;background:#606060"></div>
<div style="left:584.0px;top:424.0px;width:87.0px;height:44.0px;background:#f7f7f7"></div>
<div style="left:671.5px;top:425.0px;width:79.0px;height:43.0px;background:#ececec"></div>
<div class="t" style="left:591.0px;top:433.0px;line-height:27px;font-size:21.8px;font-weight:400;color:#000;">System</div>
<div class="t" style="left:676.0px;top:434.0px;line-height:28px;font-size:22.8px;font-weight:400;color:#000;">Top 10</div>
<div class="t" style="left:916.5px;top:436.0px;line-height:24px;font-size:19px;font-weight:400;color:#000;">Player</div>
<svg style="left:972.0px;top:432.0px" width="28.0" height="30.0" viewBox="0 0 28 30"><path d="M10 23 V6 L25 2 V20" stroke="#3a3aa8" stroke-width="2.5" fill="none"/><path d="M10 6 L25 2 V7 L10 11Z" fill="#5a5ac8" stroke="#3a3aa8" stroke-width="1"/><ellipse cx="6" cy="23" rx="5.5" ry="4.5" fill="#6a6ad8" stroke="#3a3aa8" stroke-width="1.5"/><ellipse cx="21" cy="21" rx="5.5" ry="4.5" fill="#6a6ad8" stroke="#3a3aa8" stroke-width="1.5"/></svg>
<div style="left:587.0px;top:472.0px;width:431.0px;height:374.0px;background:#fff;border:1px solid #a0a0a0;box-sizing:border-box"></div>
<svg style="left:595.0px;top:476.8px" width="28.0" height="28.0" viewBox="0 0 28 28"><rect x="1" y="1" width="26" height="20" fill="#e8e8e8" stroke="#666" stroke-width="1.5"/><rect x="4" y="4" width="20" height="14" fill="#8acff8"/><rect x="5" y="5" width="18" height="5" fill="#c8ecff"/><path d="M2 23 H26 L25 26 H3Z" fill="#bbb" stroke="#777" stroke-width="1"/></svg>
<div class="t" style="left:632.0px;top:477.8px;line-height:26px;font-size:20.8px;font-weight:400;color:#000;font-family:'Liberation Sans'">Desktop</div>
<svg style="left:595.0px;top:509.9px" width="28.0" height="28.0" viewBox="0 0 28 28"><path d="M1 1 H14 L18 5 V26 H1Z" fill="#fff" stroke="#555" stroke-width="1.3"/><text x="4" y="12" font-size="10" font-family="Liberation Sans" font-weight="700" fill="#1a4aa8">A</text><circle cx="19" cy="14" r="4" fill="#1a6ad0"/><path d="M11 27 Q11 19 19 19 Q27 19 27 27Z" fill="#1a6ad0"/></svg>
<div class="t" style="left:632.0px;top:510.9px;line-height:26px;font-size:20.8px;font-weight:400;color:#000;font-family:'Liberation Sans'">Dokumente</div>
<svg style="left:595.0px;top:543.0px" width="28.0" height="28.0" viewBox="0 0 28 28"><path d="M10 23 V6 L25 2 V20" stroke="#3a3aa8" stroke-width="2.5" fill="none"/><path d="M10 6 L25 2 V7 L10 11Z" fill="#5a5ac8" stroke="#3a3aa8" stroke-width="1"/><ellipse cx="6" cy="23" rx="5.5" ry="4.5" fill="#6a6ad8" stroke="#3a3aa8" stroke-width="1.5"/><ellipse cx="21" cy="21" rx="5.5" ry="4.5" fill="#6a6ad8" stroke="#3a3aa8" stroke-width="1.5"/></svg>
<div class="t" style="left:632.0px;top:544.0px;line-height:26px;font-size:20.8px;font-weight:400;color:#000;font-family:'Liberation Sans'">Musik</div>
<svg style="left:595.0px;top:576.1px" width="28.0" height="28.0" viewBox="0 0 28 28"><defs><linearGradient id="bl" x1="0" y1="0" x2="0" y2="1"><stop offset="0" stop-color="#5ab0f0"/><stop offset="1" stop-color="#1a6ad0"/></linearGradient></defs><rect x="2" y="2" width="24" height="25" fill="url(#bl)" stroke="#1a3a88" stroke-width="1.8"/><path d="M3 8 H25 V13 Q14 9 3 13Z" fill="#2a8a2a"/><path d="M3 11 Q14 7 25 11 V14 Q14 10 3 14Z" fill="#f0c020"/></svg>
<div class="t" style="left:632.0px;top:577.1px;line-height:26px;font-size:20.8px;font-weight:400;color:#000;font-family:'Liberation Sans'">Bilder</div>
<svg style="left:595.0px;top:609.2px" width="28.0" height="28.0" viewBox="0 0 28 28"><path d="M8 1 H20 V11 H27 L14 23 L1 11 H8Z" fill="#8ad020" stroke="#4a9010" stroke-width="1"/><rect x="2" y="24" width="24" height="3" fill="#6ab010"/></svg>
<div class="t" style="left:632.0px;top:610.2px;line-height:26px;font-size:20.8px;font-weight:400;color:#000;font-family:'Liberation Sans'">Downloads</div>
<svg style="left:595.0px;top:642.3px" width="28.0" height="28.0" viewBox="0 0 28 28"><path d="M7 3 L14 8 L7 13 L0 8Z M21 3 L28 8 L21 13 L14 8Z M7 13 L14 18 L7 23 L0 18Z M21 13 L28 18 L21 23 L14 18Z M14 20 L21 25 L14 28 L7 25Z" fill="#1a6ae0"/></svg>
<div class="t" style="left:632.0px;top:643.3px;line-height:26px;font-size:20.8px;font-weight:400;color:#000;font-family:'Liberation Sans'">Dropbox</div>
<svg style="left:595.0px;top:675.4px" width="28.0" height="28.0" viewBox="0 0 28 28"><path d="M1 3 H10 L13 6 H26 V25 H1Z" fill="#f3d870" stroke="#b89030" stroke-width="1"/><rect x="1" y="8" width="25" height="17" fill="#fbe89a"/><path d="M20 10 L12 19 H17 L13 27 L24 16 H19 L23 10Z" fill="#f5a800" stroke="#904000" stroke-width="1"/></svg>
<div class="t" style="left:632.0px;top:676.4px;line-height:26px;font-size:20.8px;font-weight:400;color:#000;font-family:'Liberation Sans'">Programmordner (32-Bit)</div>
<svg style="left:595.0px;top:708.5px" width="28.0" height="28.0" viewBox="0 0 28 28"><path d="M1 3 H10 L13 6 H26 V25 H1Z" fill="#f3d870" stroke="#b89030" stroke-width="1"/><rect x="1" y="8" width="25" height="17" fill="#fbe89a"/><path d="M20 10 L12 19 H17 L13 27 L24 16 H19 L23 10Z" fill="#f5a800" stroke="#904000" stroke-width="1"/></svg>
<div class="t" style="left:632.0px;top:709.5px;line-height:26px;font-size:20.8px;font-weight:400;color:#000;font-family:'Liberation Sans'">Programmordner (64-Bit)</div>
<svg style="left:595.0px;top:741.6px" width="28.0" height="28.0" viewBox="0 0 28 28"><path d="M1 4 H10 L13 7 H26 V25 H1Z" fill="#e8e8e8" stroke="#bbb" stroke-width="1"/><rect x="1" y="9" width="25" height="16" fill="#f2f2f2" stroke="#ccc"/></svg>
<div class="t" style="left:632.0px;top:742.6px;line-height:26px;font-size:20.8px;font-weight:400;color:#000;font-family:'Liberation Sans'">Programmordner virtuell</div>
<svg style="left:595.0px;top:774.7px" width="28.0" height="28.0" viewBox="0 0 28 28"><circle cx="16" cy="17" r="9" fill="#ddd" stroke="#888" stroke-width="3" stroke-dasharray="3.5 2"/><circle cx="16" cy="17" r="3" fill="#fff" stroke="#888"/><circle cx="6" cy="6" r="4" fill="#9ab8e8" stroke="#5a7ab8"/></svg>
<div class="t" style="left:632.0px;top:775.7px;line-height:26px;font-size:20.8px;font-weight:400;color:#000;font-family:'Liberation Sans'">Anwendungsdaten (Roaming)</div>
<svg style="left:595.0px;top:807.8px" width="28.0" height="28.0" viewBox="0 0 28 28"><circle cx="16" cy="17" r="9" fill="#ddd" stroke="#888" stroke-width="3" stroke-dasharray="3.5 2"/><circle cx="16" cy="17" r="3" fill="#fff" stroke="#888"/><circle cx="6" cy="6" r="4" fill="#9ab8e8" stroke="#5a7ab8"/></svg>
<div class="t" style="left:632.0px;top:808.8px;line-height:26px;font-size:20.8px;font-weight:400;color:#000;font-family:'Liberation Sans'">Anwendungsdaten (Lokal)</div>
<div style="left:584.0px;top:852.0px;width:436.0px;height:4.0px;background:#f0f0f0"></div>
<div style="left:584.0px;top:855.0px;width:82.0px;height:35.0px;background:#f7f7f7"></div>
<div style="left:666.0px;top:856.0px;width:68.5px;height:34.0px;background:#e8e8e8"></div>
<div class="t" style="left:591.5px;top:858.0px;line-height:26px;font-size:21px;font-weight:400;color:#000;">Eigene</div>
<div class="t" style="left:671.0px;top:860.5px;line-height:26px;font-size:21px;font-weight:400;color:#000;">Offen</div>
<div style="left:584.0px;top:890.0px;width:436.0px;height:54.0px;background:#f7f7f7"></div>
<div style="left:594.0px;top:902.0px;width:341.0px;height:29.5px;background:#fff;border:1px solid #6a6a6a;box-sizing:border-box"></div>
<svg style="left:932.0px;top:904.0px" width="30.0" height="30.0" viewBox="0 0 30 30"><circle cx="17" cy="12" r="9" fill="none" stroke="#2a8ae0" stroke-width="2"/><path d="M11 18 L3 27" stroke="#2a8ae0" stroke-width="2"/></svg>
<svg style="left:977.0px;top:906.0px" width="30.0" height="29.0" viewBox="0 0 30 29"><rect x="1" y="4" width="20" height="24" fill="#d8e4f8" stroke="#7a8ab8" stroke-width="1.5"/><path d="M5 23 L23 5" stroke="#2a2a4a" stroke-width="5"/><path d="M5 23 L23 5" stroke="#7a7ad8" stroke-width="3"/><path d="M20 8 L24 4" stroke="#e02020" stroke-width="4" stroke-linecap="round"/><path d="M4 25 L6 21 L8 23Z" fill="#333"/></svg>
<div style="left:587.0px;top:946.5px;width:431.0px;height:636.0px;background:#fff;border:1px solid #a0a0a0;box-sizing:border-box"></div>
<div style="left:988.5px;top:948.0px;width:29.0px;height:633.0px;background:#f0f0f0"></div>
<div style="left:999.5px;top:976.7px;width:6.5px;height:242.0px;background:#888;border-radius:3px"></div>
<svg style="left:592.5px;top:952.0px" width="28.0" height="25.0" viewBox="0 0 28 25"><path d="M1 2 Q1 0 3 0 H10 L12 2 H27 V5 H1Z" fill="#6b6b6b"/><rect x="0" y="5" width="28" height="20" rx="3" fill="#19d219"/><rect x="0" y="5" width="28" height="2" fill="#fff" opacity=".35"/></svg>
<div class="t" style="left:639.0px;top:951.0px;line-height:26px;font-size:20.8px;font-weight:400;color:#000;">SANDBOX Containers</div>
<svg style="left:592.5px;top:985.1px" width="28.0" height="25.0" viewBox="0 0 28 25"><path d="M1 2 Q1 0 3 0 H10 L12 2 H27 V5 H1Z" fill="#6b6b6b"/><rect x="0" y="5" width="28" height="20" rx="3" fill="#19d219"/><rect x="0" y="5" width="28" height="2" fill="#fff" opacity=".35"/></svg>
<div class="t" style="left:633.0px;top:984.1px;line-height:26px;font-size:20.8px;font-weight:400;color:#000;">\\Entwicklung2</div>
<svg style="left:592.5px;top:1018.2px" width="28.0" height="25.0" viewBox="0 0 28 25"><path d="M1 2 Q1 0 3 0 H10 L12 2 H27 V5 H1Z" fill="#6b6b6b"/><rect x="0" y="5" width="28" height="20" rx="3" fill="#19d219"/><rect x="0" y="5" width="28" height="2" fill="#fff" opacity=".35"/></svg>
<div class="t" style="left:633.0px;top:1017.2px;line-height:26px;font-size:20.8px;font-weight:400;color:#000;">\\ew0\p</div>
<svg style="left:592.5px;top:1051.2px" width="28.0" height="25.0" viewBox="0 0 28 25"><path d="M1 2 Q1 0 3 0 H10 L12 2 H27 V5 H1Z" fill="#6b6b6b"/><rect x="0" y="5" width="28" height="20" rx="3" fill="#19d219"/><rect x="0" y="5" width="28" height="2" fill="#fff" opacity=".35"/></svg>
<div class="t" style="left:633.0px;top:1050.2px;line-height:26px;font-size:20.8px;font-weight:400;color:#000;">\\EW0\p\Delphi5\PreInstall</div>
<svg style="left:592.5px;top:1084.3px" width="28.0" height="25.0" viewBox="0 0 28 25"><path d="M1 2 Q1 0 3 0 H10 L12 2 H27 V5 H1Z" fill="#6b6b6b"/><rect x="0" y="5" width="28" height="20" rx="3" fill="#19d219"/><rect x="0" y="5" width="28" height="2" fill="#fff" opacity=".35"/></svg>
<div class="t" style="left:633.0px;top:1083.3px;line-height:26px;font-size:20.8px;font-weight:400;color:#000;">\\ew0\p\DEV\DX10\copyb</div>
<svg style="left:592.5px;top:1117.4px" width="28.0" height="25.0" viewBox="0 0 28 25"><path d="M1 2 Q1 0 3 0 H10 L12 2 H27 V5 H1Z" fill="#6b6b6b"/><rect x="0" y="5" width="28" height="20" rx="3" fill="#19d219"/><rect x="0" y="5" width="28" height="2" fill="#fff" opacity=".35"/></svg>
<div class="t" style="left:633.0px;top:1116.4px;line-height:26px;font-size:20.8px;font-weight:400;color:#000;">\\EW0\p\DEV\DX10\FileIO</div>
<svg style="left:592.5px;top:1150.5px" width="28.0" height="25.0" viewBox="0 0 28 25"><path d="M1 2 Q1 0 3 0 H10 L12 2 H27 V5 H1Z" fill="#6b6b6b"/><rect x="0" y="5" width="28" height="20" rx="3" fill="#19d219"/><rect x="0" y="5" width="28" height="2" fill="#fff" opacity=".35"/></svg>
<div class="t" style="left:633.0px;top:1149.5px;line-height:26px;font-size:20.8px;font-weight:400;color:#000;">\\ew0\p\DEV\DX10\HTMLED</div>
<svg style="left:592.5px;top:1183.6px" width="28.0" height="25.0" viewBox="0 0 28 25"><path d="M1 2 Q1 0 3 0 H10 L12 2 H27 V5 H1Z" fill="#6b6b6b"/><rect x="0" y="5" width="28" height="20" rx="3" fill="#19d219"/><rect x="0" y="5" width="28" height="2" fill="#fff" opacity=".35"/></svg>
<div class="t" style="left:633.0px;top:1182.6px;line-height:26px;font-size:20.8px;font-weight:400;color:#000;">\\ew0\p\DEV\DX10\PCAdress</div>
<svg style="left:592.5px;top:1216.6px" width="28.0" height="25.0" viewBox="0 0 28 25"><path d="M1 2 Q1 0 3 0 H10 L12 2 H27 V5 H1Z" fill="#6b6b6b"/><rect x="0" y="5" width="28" height="20" rx="3" fill="#19d219"/><rect x="0" y="5" width="28" height="2" fill="#fff" opacity=".35"/></svg>
<div class="t" style="left:633.0px;top:1215.6px;line-height:26px;font-size:20.8px;font-weight:400;color:#000;">\\ew0\p\DEV\DX10\PCDatabase</div>
<svg style="left:592.5px;top:1249.7px" width="28.0" height="25.0" viewBox="0 0 28 25"><path d="M1 2 Q1 0 3 0 H10 L12 2 H27 V5 H1Z" fill="#6b6b6b"/><rect x="0" y="5" width="28" height="20" rx="3" fill="#19d219"/><rect x="0" y="5" width="28" height="2" fill="#fff" opacity=".35"/></svg>
<div class="t" style="left:633.0px;top:1248.7px;line-height:26px;font-size:20.8px;font-weight:400;color:#000;">\\ew0\p\DEV\DX10\PCRechnung</div>
<svg style="left:592.5px;top:1282.8px" width="28.0" height="25.0" viewBox="0 0 28 25"><path d="M1 2 Q1 0 3 0 H10 L12 2 H27 V5 H1Z" fill="#6b6b6b"/><rect x="0" y="5" width="28" height="20" rx="3" fill="#19d219"/><rect x="0" y="5" width="28" height="2" fill="#fff" opacity=".35"/></svg>
<div class="t" style="left:633.0px;top:1281.8px;line-height:26px;font-size:20.8px;font-weight:400;color:#000;">\\ew0\p\DEV\DX10\PDFMAN</div>
<svg style="left:592.5px;top:1315.9px" width="28.0" height="25.0" viewBox="0 0 28 25"><path d="M1 2 Q1 0 3 0 H10 L12 2 H27 V5 H1Z" fill="#6b6b6b"/><rect x="0" y="5" width="28" height="20" rx="3" fill="#19d219"/><rect x="0" y="5" width="28" height="2" fill="#fff" opacity=".35"/></svg>
<div class="t" style="left:633.0px;top:1314.9px;line-height:26px;font-size:20.8px;font-weight:400;color:#000;">\\EW0\p\DEV\DX10\PixPower</div>
<svg style="left:592.5px;top:1349.0px" width="28.0" height="25.0" viewBox="0 0 28 25"><path d="M1 2 Q1 0 3 0 H10 L12 2 H27 V5 H1Z" fill="#6b6b6b"/><rect x="0" y="5" width="28" height="20" rx="3" fill="#19d219"/><rect x="0" y="5" width="28" height="2" fill="#fff" opacity=".35"/></svg>
<div class="t" style="left:633.0px;top:1348.0px;line-height:26px;font-size:20.8px;font-weight:400;color:#000;">\\ew0\p\DEV\DX10\PPME5</div>
<svg style="left:592.5px;top:1382.0px" width="28.0" height="25.0" viewBox="0 0 28 25"><path d="M1 2 Q1 0 3 0 H10 L12 2 H27 V5 H1Z" fill="#6b6b6b"/><rect x="0" y="5" width="28" height="20" rx="3" fill="#19d219"/><rect x="0" y="5" width="28" height="2" fill="#fff" opacity=".35"/></svg>
<div class="t" style="left:633.0px;top:1381.0px;line-height:26px;font-size:20.8px;font-weight:400;color:#000;">\\ew0\p\DEV\DX10\SaferMail</div>
<svg style="left:592.5px;top:1415.1px" width="28.0" height="25.0" viewBox="0 0 28 25"><path d="M1 2 Q1 0 3 0 H10 L12 2 H27 V5 H1Z" fill="#6b6b6b"/><rect x="0" y="5" width="28" height="20" rx="3" fill="#19d219"/><rect x="0" y="5" width="28" height="2" fill="#fff" opacity=".35"/></svg>
<div class="t" style="left:633.0px;top:1414.1px;line-height:26px;font-size:20.8px;font-weight:400;color:#000;">\\ew0\p\DEV\DXE7\Timo11</div>
<svg style="left:592.5px;top:1448.2px" width="28.0" height="25.0" viewBox="0 0 28 25"><path d="M1 2 Q1 0 3 0 H10 L12 2 H27 V5 H1Z" fill="#6b6b6b"/><rect x="0" y="5" width="28" height="20" rx="3" fill="#19d219"/><rect x="0" y="5" width="28" height="2" fill="#fff" opacity=".35"/></svg>
<div class="t" style="left:633.0px;top:1447.2px;line-height:26px;font-size:20.8px;font-weight:400;color:#000;">\\ew0\p\Regnr</div>
<svg style="left:592.5px;top:1481.3px" width="28.0" height="25.0" viewBox="0 0 28 25"><path d="M1 2 Q1 0 3 0 H10 L12 2 H27 V5 H1Z" fill="#6b6b6b"/><rect x="0" y="5" width="28" height="20" rx="3" fill="#19d219"/><rect x="0" y="5" width="28" height="2" fill="#fff" opacity=".35"/></svg>
<div class="t" style="left:633.0px;top:1480.3px;line-height:26px;font-size:20.8px;font-weight:400;color:#000;">\\ew0\p\shots</div>
<svg style="left:592.5px;top:1514.4px" width="28.0" height="25.0" viewBox="0 0 28 25"><path d="M1 2 Q1 0 3 0 H10 L12 2 H27 V5 H1Z" fill="#6b6b6b"/><rect x="0" y="5" width="28" height="20" rx="3" fill="#19d219"/><rect x="0" y="5" width="28" height="2" fill="#fff" opacity=".35"/></svg>
<div class="t" style="left:633.0px;top:1513.4px;line-height:26px;font-size:20.8px;font-weight:400;color:#000;">\\EW0\p</div>
<svg style="left:592.5px;top:1547.4px" width="28.0" height="25.0" viewBox="0 0 28 25"><path d="M1 2 Q1 0 3 0 H10 L12 2 H27 V5 H1Z" fill="#6b6b6b"/><rect x="0" y="5" width="28" height="20" rx="3" fill="#19d219"/><rect x="0" y="5" width="28" height="2" fill="#fff" opacity=".35"/></svg>
<div class="t" style="left:633.0px;top:1546.4px;line-height:26px;font-size:20.8px;font-weight:400;color:#000;">\\ew0\x\Ablage</div>
<div style="left:590px;top:1578px;width:40px;height:3px;overflow:hidden"><div style="left:2px;top:0;width:28px;height:3px;background:#6b6b6b"></div></div>
<div style="left:583.0px;top:1587.0px;width:438.0px;height:38.0px;background:#f0f0f0;border:1px solid #b8b8b8;box-sizing:border-box"></div>
<div class="t" style="left:601.6px;top:1588.0px;line-height:26px;font-size:20.5px;font-weight:400;color:#000;">45 Favoriten</div>
<div style="left:583.5px;top:1636.0px;width:438.0px;height:238.0px;background:#f0f0f0;border:1.5px solid #5a5a5a;box-sizing:border-box"></div>
<svg style="left:674.0px;top:1641.0px" width="256.0" height="192.0" viewBox="0 0 256 192"><rect width="256" height="192" fill="#e6e6e4"/><rect x="0" y="0" width="76" height="30" fill="#4a3c34"/><rect x="9" y="13" width="46" height="17" fill="#e8e4dc"/><rect x="55" y="12" width="8" height="18" fill="#6a4a3a"/><rect x="60" y="0" width="16" height="30" fill="#5a5a58"/><rect x="76" y="0" width="144" height="28" fill="#e2e2e0"/><rect x="139" y="0" width="1.5" height="28" fill="#9a9a98"/><rect x="124" y="18" width="11" height="2.5" fill="#333"/><rect x="147" y="19" width="11" height="2.5" fill="#333"/><rect x="220" y="0" width="36" height="30" fill="#f4f4f4"/><rect x="0" y="28" width="225" height="3" fill="#4a4a48"/><rect x="148" y="30" width="57" height="7" fill="#d8d4c4"/><path d="M5 31 H222 V125 L60 192 H33Z" fill="#ebebea"/><g stroke="#c8c8c6" stroke-width="1"><path d="M30 33 L38 192"/><path d="M46 33 L54 192"/><path d="M62 33 L70 192"/><path d="M78 33 L86 192"/><path d="M94 33 L102 192"/><path d="M110 33 L118 192"/><path d="M126 33 L129 192"/><path d="M142 33 L145 192"/><path d="M158 33 L161 192"/><path d="M174 33 L177 192"/><path d="M190 33 L193 192"/><path d="M206 33 L209 192"/></g><path d="M0 31 H5 L33 192 H0Z" fill="#8a8a88"/><path d="M0 120 L18 125 L22 192 H0Z" fill="#1a1a1a"/><path d="M220 30 H250 V86 H220Z" fill="#eeeeec"/><rect x="250" y="5" width="6" height="110" fill="#cfcfcb"/><path d="M216 85 L256 93 V100 L216 92Z" fill="#7a746a"/><path d="M222 94 L256 100 V150 L222 140Z" fill="#a8a49c"/><path d="M58 192 L216 127 L240 134 L240 139 L216 132 L76 192Z" fill="#151515"/><path d="M76 192 L216 132 L240 139 L256 150 V192Z" fill="#c6baa6"/><circle cx="32" cy="84" r="4" fill="#d8d8d6" stroke="#999" stroke-width="1"/><g fill="#e83030" font-family="Liberation Sans" font-size="5" font-weight="700"><text x="50" y="84">Neue Steckdose</text><text x="132" y="85">mal. dreifach</text></g><path d="M96 98 L126 94" stroke="#e83030" stroke-width="1.2" stroke-dasharray="3 2"/><path d="M122 92 L127 94 L123 97" stroke="#e83030" fill="none" stroke-width="1"/><path d="M147 92 V137" stroke="#e83030" stroke-width="1.2"/><path d="M80 108 L86 166 L202 126" stroke="#e83030" stroke-width="1.2" stroke-dasharray="2 1.5" fill="none"/><rect x="58" y="104" width="22" height="12" fill="none" stroke="#2020e0" stroke-width="1.2" stroke-dasharray="3 2"/><path d="M67 97 V103 H72" stroke="#2020e0" fill="none" stroke-width="1"/><path d="M168 62 L178 58 L184 60 M172 60 V80" stroke="#555" stroke-width="2" fill="none"/><path d="M196 58 L204 62" stroke="#666" stroke-width="2"/><path d="M168 115 L186 122 L188 127" stroke="#777" stroke-width="2.5" fill="none"/><path d="M0 0 H256 V192 H0Z" fill="none" stroke="#bbb" stroke-width="0.5"/></svg>
<div style="left:589.0px;top:1842.0px;width:20.0px;height:20.0px;background:#0a66c2;border:1px solid #0a5bb0;border-radius:3px;box-sizing:border-box"></div>
<svg style="left:589.0px;top:1842.0px" width="20.0" height="20.0" viewBox="0 0 20 20"><path d="M4.5 9 L7.5 12 L13 6" stroke="#dff" stroke-width="1.1" fill="none"/></svg>
<div class="t" style="left:624.0px;top:1839.0px;line-height:27px;font-size:21.3px;font-weight:400;color:#000;">Grafik / Text zeigen (2000 x 1500)</div>
<div class="t" style="left:561.0px;top:1133.5px;line-height:25px;font-size:20px;font-weight:700;color:#000;">&lt;</div>
<div style="left:1036.0px;top:422.0px;width:70.0px;height:1452.5px;background:#f0f0f0;border:1.5px solid #7a7a7a;box-sizing:border-box"></div>
<div style="left:1039.0px;top:425.0px;width:62.0px;height:34.0px;background:#fbfbfb;border:1px solid #cfcfcf;border-radius:4px;box-sizing:border-box"></div>
<div style="left:1039.0px;top:463.0px;width:62.0px;height:34.0px;background:#fbfbfb;border:1px solid #cfcfcf;border-radius:4px;box-sizing:border-box"></div>
<svg style="left:1054.0px;top:426.0px" width="32.0" height="32.0" viewBox="0 0 32 32"><defs><linearGradient id="rg" x1="0" y1="0" x2="0" y2="1"><stop offset="0" stop-color="#ff8a3a"/><stop offset="1" stop-color="#c00"/></linearGradient><radialGradient id="bg1" cx=".35" cy=".3"><stop offset="0" stop-color="#8ac8ff"/><stop offset="1" stop-color="#1040a0"/></radialGradient></defs><rect x="0" y="6" width="14" height="20" fill="url(#rg)"/><circle cx="21" cy="10" r="10" fill="url(#bg1)"/><path d="M20 13 L31 32 H9Z" fill="#18a018"/></svg>
<div style="left:1054.0px;top:464.0px;width:32.0px;height:32.0px;background:#ff6a00"></div>
<div class="t" style="left:1040.0px;width:60px;text-align:center;top:465.0px;line-height:16px;font-size:12.5px;font-weight:700;color:#fff;">PDF</div>
<div class="t" style="left:1040.0px;width:60px;text-align:center;top:479.0px;line-height:16px;font-size:12.5px;font-weight:700;color:#fff;">M</div>
<div style="left:1106.4px;top:424.0px;width:117.9px;height:44.0px;background:#f0f0f0"></div>
<div style="left:1224.3px;top:424.0px;width:1.5px;height:43.0px;background:#b0b0b0"></div>
<div class="t" style="left:1127.0px;top:432.0px;line-height:25px;font-size:20px;font-weight:400;color:#000;">Suchen</div>
<div style="left:1225.5px;top:424.0px;width:191.5px;height:44.0px;background:#f0f0f0"></div>
<div style="left:1417.0px;top:424.0px;width:1.5px;height:43.0px;background:#b0b0b0"></div>
<div class="t" style="left:1246.5px;top:432.0px;line-height:25px;font-size:20px;font-weight:400;color:#000;">Sammelmappe</div>
<div style="left:1418.5px;top:424.0px;width:190.1px;height:44.0px;background:#f0f0f0"></div>
<div style="left:1608.6px;top:424.0px;width:1.5px;height:43.0px;background:#b0b0b0"></div>
<div class="t" style="left:1442.0px;top:432.0px;line-height:25px;font-size:20px;font-weight:400;color:#000;">[ D ] Hastasoft</div>
<div style="left:1610.0px;top:423.0px;width:79.0px;height:46.0px;background:#a8cbf0;border-right:1px solid #8ab0e0;box-sizing:border-box"></div>
<div class="t" style="left:1635.0px;top:432.5px;line-height:26px;font-size:21px;font-weight:700;color:#000;">D:\</div>
<div style="left:1108.0px;top:472.0px;width:2226.0px;height:2.0px;background:#707070"></div>
<div style="left:1108.0px;top:474.0px;width:2226.0px;height:35.0px;background:#f0f0f0"></div>
<div style="left:1107.0px;top:474.0px;width:2.0px;height:1396.0px;background:#7a7a7a"></div>
<div class="t" style="left:1111.5px;top:478.0px;line-height:26px;font-size:21px;font-weight:400;color:#000;">D:</div>
<div class="t" style="left:2679.4px;top:478.0px;line-height:26px;font-size:21px;font-weight:400;color:#000;">Steuer2022</div>
<div class="t" style="left:2804.5px;top:478.0px;line-height:26px;font-size:21px;font-weight:400;color:#000;">RE-Eingang</div>
<div class="t" style="left:2929.3px;top:478.0px;line-height:26px;font-size:21px;font-weight:400;color:#000;">DX10(ew0)</div>
<div class="t" style="left:3050.3px;top:478.0px;line-height:26px;font-size:21px;font-weight:400;color:#000;">hastasoft(c)</div>
<div class="t" style="left:3177.6px;top:478.0px;line-height:26px;font-size:21px;font-weight:400;color:#000;">hastasoft(d)</div>
<div style="left:3298.0px;top:476.0px;width:31.0px;height:32.0px;background:#fff;border:1px solid #d8d8d8;border-radius:3px;box-sizing:border-box"></div>
<div class="t" style="left:3306.0px;top:478.5px;line-height:25px;font-size:20px;font-weight:700;color:#000;">+</div>
<div style="left:1108.0px;top:509.0px;width:2226.0px;height:2.0px;background:#707070"></div>
<div style="left:3334.5px;top:474.0px;width:2.0px;height:1396.0px;background:#7c7c7c"></div>
<div style="left:3339.5px;top:474.0px;width:2.0px;height:1401.0px;background:#7c7c7c"></div>
<div style="left:1109.0px;top:511.0px;width:635.0px;height:50.0px;background:#f0f0f0"></div>
<svg style="left:1121.5px;top:520.0px" width="29.0" height="29.0" viewBox="0 0 29 29"><circle cx="14" cy="14" r="13" fill="#2aa52a" stroke="#0a6a0a" stroke-width="1"/><circle cx="14" cy="11" r="9" fill="#5ad05a" opacity=".5"/><path d="M19 14 H10 M14 9 L9 14 L14 19" stroke="#fff" stroke-width="3" fill="none"/></svg>
<svg style="left:1226.5px;top:520.0px" width="29.0" height="29.0" viewBox="0 0 29 29"><circle cx="14" cy="14" r="13" fill="#2aa52a" stroke="#0a6a0a" stroke-width="1"/><circle cx="14" cy="11" r="9" fill="#5ad05a" opacity=".5"/><path d="M9 14 H18 M14 9 L19 14 L14 19" stroke="#fff" stroke-width="3" fill="none"/></svg>
<svg style="left:1173.0px;top:519.0px" width="28.0" height="29.0" viewBox="0 0 28 29"><path d="M1 12 H10 L12 15 H26 V28 H1Z" fill="#f3c94b" stroke="#b89030" stroke-width="1"/><path d="M12 22 Q12 10 20 8 V3 L27 10 L20 16 V12 Q15 13 12 22Z" fill="#2aa52a"/></svg>
<svg style="left:1279.0px;top:522.0px" width="27.0" height="23.0" viewBox="0 0 27 23"><rect x="1" y="1" width="25" height="21" fill="#dfe9f8" stroke="#2a6ad0" stroke-width="1.5"/><rect x="1" y="1" width="25" height="4" fill="#4a8ae0"/><ellipse cx="13" cy="14" rx="8" ry="5" fill="#e84040"/><ellipse cx="15" cy="15" rx="5" ry="3" fill="#40a0e0"/></svg>
<svg style="left:1333.0px;top:522.0px" width="27.0" height="25.0" viewBox="0 0 27 25"><rect x="1" y="1" width="25" height="23" fill="#fff" stroke="#2a4aa8" stroke-width="1.5"/><rect x="5" y="5" width="3" height="3" fill="#e02020"/><rect x="11" y="5" width="3" height="3" fill="#e02020"/><rect x="17" y="5" width="3" height="3" fill="#e02020"/><rect x="23" y="5" width="3" height="3" fill="#e02020"/><rect x="5" y="11" width="3" height="3" fill="#2a6ad0"/><rect x="11" y="11" width="3" height="3" fill="#2a6ad0"/><rect x="17" y="11" width="3" height="3" fill="#2a6ad0"/><rect x="23" y="11" width="3" height="3" fill="#2a6ad0"/><rect x="5" y="17" width="3" height="3" fill="#1a3a80"/><rect x="11" y="17" width="3" height="3" fill="#1a3a80"/><rect x="17" y="17" width="3" height="3" fill="#1a3a80"/><rect x="23" y="17" width="3" height="3" fill="#1a3a80"/></svg>
<div style="left:1386.0px;top:515.0px;width:299.5px;height:38.5px;background:#fff;border:1px solid #7a7a7a;box-sizing:border-box"></div>
<svg style="left:1704.0px;top:521.0px" width="30.0" height="30.0" viewBox="0 0 30 30"><circle cx="18" cy="11" r="8" fill="#f4f4f4" stroke="#999" stroke-width="2.5"/><path d="M12 17 L3 27" stroke="#888" stroke-width="4" stroke-linecap="round"/></svg>
<div style="left:1109.0px;top:561.0px;width:635.0px;height:6.0px;background:#0a7a0a"></div>
<div style="left:1109.0px;top:561.0px;width:29.0px;height:6.0px;background:#e01010"></div>
<div style="left:1109.0px;top:567.0px;width:635.0px;height:33.0px;background:#fff"></div>
<div class="t" style="left:1111.5px;top:568.5px;line-height:26px;font-size:21px;font-weight:400;color:#0000d0;">915,39 GB.</div>
<div class="t" style="left:1230.7px;top:568.5px;line-height:26px;font-size:21px;font-weight:400;color:#008000;">Frei: 873,68 GB.</div>
<div class="t" style="left:1398.5px;top:568.5px;line-height:26px;font-size:21px;font-weight:400;color:#e00010;">Belegt: 41,71 GB.</div>
<div style="left:1109.0px;top:600.0px;width:635.0px;height:2.0px;background:#707070"></div>
<div style="left:1109.0px;top:602.0px;width:70.0px;height:1183.0px;background:#f0f0f0"></div>
<div style="left:1110.0px;top:729.0px;width:67.5px;height:60.5px;background:#cce4f7;border:1px solid #99c9ef;box-sizing:border-box"></div>
<div class="t" style="left:1120.0px;top:619.5px;line-height:25px;font-size:20px;font-weight:400;color:#000;">\</div>
<svg style="left:1136.0px;top:616.0px" width="30.0" height="30.0" viewBox="0 0 30 30"><rect x="1" y="3" width="12" height="11" rx="1" fill="#3aa8f0" stroke="#555" stroke-width="1.2"/><ellipse cx="7" cy="17" rx="5" ry="2.5" fill="#999" stroke="#666"/><rect x="15" y="2" width="7" height="7" fill="#f0b010" stroke="#555"/><path d="M13 6 H27" stroke="#2a70c0" stroke-width="1.5"/><rect x="15" y="10" width="12" height="12" rx="1" fill="#3aa8f0" stroke="#555" stroke-width="1.2"/><ellipse cx="21" cy="25" rx="5" ry="2.5" fill="#999" stroke="#666"/></svg>
<div class="t" style="left:1122.0px;top:685.8px;line-height:25px;font-size:20px;font-weight:700;color:#000;">C</div>
<svg style="left:1136.0px;top:686.3px" width="30.0" height="24.0" viewBox="0 0 30 24"><path d="M1 9 L12 3 L29 11 L18 17Z" fill="#f2f2f2" stroke="#333" stroke-width="1.3" stroke-linejoin="round"/><path d="M1 9 V14 L18 22 V17Z" fill="#a8a8a8" stroke="#333" stroke-width="1.3" stroke-linejoin="round"/><path d="M18 17 V22 L29 16 V11Z" fill="#707070" stroke="#333" stroke-width="1.3" stroke-linejoin="round"/><path d="M4 12.5 L17 19" stroke="#555" stroke-width="1.2"/></svg>
<div class="t" style="left:1122.0px;top:747.9px;line-height:25px;font-size:20px;font-weight:700;color:#000;">D</div>
<svg style="left:1136.0px;top:748.4px" width="30.0" height="24.0" viewBox="0 0 30 24"><path d="M1 9 L12 3 L29 11 L18 17Z" fill="#f2f2f2" stroke="#333" stroke-width="1.3" stroke-linejoin="round"/><path d="M1 9 V14 L18 22 V17Z" fill="#a8a8a8" stroke="#333" stroke-width="1.3" stroke-linejoin="round"/><path d="M18 17 V22 L29 16 V11Z" fill="#707070" stroke="#333" stroke-width="1.3" stroke-linejoin="round"/><path d="M4 12.5 L17 19" stroke="#555" stroke-width="1.2"/></svg>
<div class="t" style="left:1122.0px;top:812.1px;line-height:25px;font-size:20px;font-weight:700;color:#000;">E</div>
<svg style="left:1136.0px;top:812.6px" width="30.0" height="24.0" viewBox="0 0 30 24"><path d="M1 9 L12 3 L29 11 L18 17Z" fill="#f2f2f2" stroke="#333" stroke-width="1.3" stroke-linejoin="round"/><path d="M1 9 V14 L18 22 V17Z" fill="#a8a8a8" stroke="#333" stroke-width="1.3" stroke-linejoin="round"/><path d="M18 17 V22 L29 16 V11Z" fill="#707070" stroke="#333" stroke-width="1.3" stroke-linejoin="round"/><path d="M4 12.5 L17 19" stroke="#555" stroke-width="1.2"/></svg>
<div class="t" style="left:1122.0px;top:874.2px;line-height:25px;font-size:20px;font-weight:700;color:#1a1ad0;">F</div>
<svg style="left:1136.0px;top:869.7px" width="30.0" height="30.0" viewBox="0 0 30 30"><g transform="translate(0,6)"><path d="M1 9 L12 3 L29 11 L18 17Z" fill="#f2f2f2" stroke="#333" stroke-width="1.3" stroke-linejoin="round"/><path d="M1 9 V14 L18 22 V17Z" fill="#a8a8a8" stroke="#333" stroke-width="1.3" stroke-linejoin="round"/><path d="M18 17 V22 L29 16 V11Z" fill="#707070" stroke="#333" stroke-width="1.3" stroke-linejoin="round"/><path d="M4 12.5 L17 19" stroke="#555" stroke-width="1.2"/></g><circle cx="15" cy="9" r="7.5" fill="#c9c5f0" stroke="#777" stroke-width="1"/><circle cx="15" cy="9" r="2" fill="#fff" stroke="#777"/></svg>
<div class="t" style="left:1122.0px;top:936.3px;line-height:25px;font-size:20px;font-weight:700;color:#1a1ad0;">T</div>
<svg style="left:1136.0px;top:932.8px" width="30.0" height="30.0" viewBox="0 0 30 30"><g transform="translate(0,6)"><path d="M1 9 L12 3 L29 11 L18 17Z" fill="#f2f2f2" stroke="#333" stroke-width="1.3" stroke-linejoin="round"/><path d="M1 9 V14 L18 22 V17Z" fill="#a8a8a8" stroke="#333" stroke-width="1.3" stroke-linejoin="round"/><path d="M18 17 V22 L29 16 V11Z" fill="#707070" stroke="#333" stroke-width="1.3" stroke-linejoin="round"/><path d="M4 12.5 L17 19" stroke="#555" stroke-width="1.2"/></g><path d="M0 3 H30 M0 6 H30" stroke="#2a70d0" stroke-width="1.6"/><rect x="10" y="0" width="8" height="8" fill="#f0b010" stroke="#555"/><path d="M14 8 V18" stroke="#2a60b0" stroke-width="2"/></svg>
<div class="t" style="left:1120.0px;top:1002.0px;line-height:22px;font-size:18px;font-weight:700;color:#1a1ad0;">W</div>
<svg style="left:1136.0px;top:997.0px" width="30.0" height="30.0" viewBox="0 0 30 30"><g transform="translate(0,6)"><path d="M1 9 L12 3 L29 11 L18 17Z" fill="#f2f2f2" stroke="#333" stroke-width="1.3" stroke-linejoin="round"/><path d="M1 9 V14 L18 22 V17Z" fill="#a8a8a8" stroke="#333" stroke-width="1.3" stroke-linejoin="round"/><path d="M18 17 V22 L29 16 V11Z" fill="#707070" stroke="#333" stroke-width="1.3" stroke-linejoin="round"/><path d="M4 12.5 L17 19" stroke="#555" stroke-width="1.2"/></g><path d="M0 3 H30 M0 6 H30" stroke="#2a70d0" stroke-width="1.6"/><rect x="10" y="0" width="8" height="8" fill="#f0b010" stroke="#555"/><path d="M14 8 V18" stroke="#2a60b0" stroke-width="2"/></svg>
<div class="t" style="left:1122.0px;top:1063.9px;line-height:25px;font-size:20px;font-weight:700;color:#1a1ad0;">X</div>
<svg style="left:1136.0px;top:1060.4px" width="30.0" height="30.0" viewBox="0 0 30 30"><g transform="translate(0,6)"><path d="M1 9 L12 3 L29 11 L18 17Z" fill="#f2f2f2" stroke="#333" stroke-width="1.3" stroke-linejoin="round"/><path d="M1 9 V14 L18 22 V17Z" fill="#a8a8a8" stroke="#333" stroke-width="1.3" stroke-linejoin="round"/><path d="M18 17 V22 L29 16 V11Z" fill="#707070" stroke="#333" stroke-width="1.3" stroke-linejoin="round"/><path d="M4 12.5 L17 19" stroke="#555" stroke-width="1.2"/></g><path d="M0 3 H30 M0 6 H30" stroke="#2a70d0" stroke-width="1.6"/><rect x="10" y="0" width="8" height="8" fill="#f0b010" stroke="#555"/><path d="M14 8 V18" stroke="#2a60b0" stroke-width="2"/></svg>
<div class="t" style="left:1122.0px;top:1126.5px;line-height:25px;font-size:20px;font-weight:700;color:#1a1ad0;">Z</div>
<svg style="left:1136.0px;top:1123.0px" width="30.0" height="30.0" viewBox="0 0 30 30"><g transform="translate(0,6)"><path d="M1 9 L12 3 L29 11 L18 17Z" fill="#f2f2f2" stroke="#333" stroke-width="1.3" stroke-linejoin="round"/><path d="M1 9 V14 L18 22 V17Z" fill="#a8a8a8" stroke="#333" stroke-width="1.3" stroke-linejoin="round"/><path d="M18 17 V22 L29 16 V11Z" fill="#707070" stroke="#333" stroke-width="1.3" stroke-linejoin="round"/><path d="M4 12.5 L17 19" stroke="#555" stroke-width="1.2"/></g><path d="M0 3 H30 M0 6 H30" stroke="#2a70d0" stroke-width="1.6"/><rect x="10" y="0" width="8" height="8" fill="#f0b010" stroke="#555"/><path d="M14 8 V18" stroke="#2a60b0" stroke-width="2"/></svg>
<div style="left:1179.5px;top:602.0px;width:564.5px;height:1152.0px;background:#fff"></div>
<div style="left:1714.0px;top:603.0px;width:30.0px;height:1151.0px;background:#f0f0f0"></div>
<div style="left:1725.0px;top:634.0px;width:7.0px;height:210.0px;background:#888;border-radius:3.5px"></div>
<div style="left:1743.5px;top:602.0px;width:1.5px;height:1230.0px;background:#9a9a9a"></div>
<div style="left:1210.0px;top:605.0px;width:60.0px;height:32.0px;background:#d9d9d9"></div>
<svg style="left:1190.0px;top:614.0px" width="16.0" height="12.0" viewBox="0 0 16 12"><path d="M2 2 L8 9 L14 2" stroke="#333" stroke-width="1.6" fill="none"/></svg>
<svg style="left:1213.0px;top:609.0px" width="28.0" height="24.0" viewBox="0 0 28 24"><rect x="1" y="3" width="26" height="18" rx="2" fill="#fff" stroke="#222" stroke-width="2.5"/><path d="M7 9 H21 M7 13 H21" stroke="#222" stroke-width="2"/><rect x="2" y="18" width="3" height="2" fill="#e02020"/></svg>
<div class="t" style="left:1245.5px;top:608.5px;line-height:26px;font-size:21px;font-weight:400;color:#000;">D:</div>
<div class="t" style="left:1287.5px;top:608.5px;line-height:26px;font-size:21px;font-weight:400;color:#000;">DATA</div>
<div style="left:1179.5px;top:637px;width:534px;height:1117px;overflow:hidden">
<svg style="left:33.5px;top:9.5px" width="12.0" height="17.0" viewBox="0 0 12 17"><path d="M3 2 L9 8.5 L3 15" stroke="#777" stroke-width="1.5" fill="none"/></svg>
<svg style="left:53.5px;top:7.0px" width="28.0" height="25.0" viewBox="0 0 28 25"><path d="M1 2 Q1 0 3 0 H10 L12 2 H27 V5 H1Z" fill="#6b6b6b"/><rect x="0" y="5" width="28" height="20" rx="3" fill="#f00000"/><rect x="0" y="5" width="28" height="2" fill="#fff" opacity=".35"/></svg>
<div class="t" style="left:87.0px;top:4.5px;line-height:26px;font-size:21px;font-weight:400;color:#000;letter-spacing:-0.2px">$RECYCLE.BIN</div>
<svg style="left:33.5px;top:43.5px" width="12.0" height="17.0" viewBox="0 0 12 17"><path d="M3 2 L9 8.5 L3 15" stroke="#777" stroke-width="1.5" fill="none"/></svg>
<svg style="left:53.5px;top:41.0px" width="28.0" height="25.0" viewBox="0 0 28 25"><path d="M1 2 Q1 0 3 0 H10 L12 2 H27 V5 H1Z" fill="#6b6b6b"/><rect x="0" y="5" width="28" height="20" rx="3" fill="#ffbf4f"/><rect x="0" y="5" width="28" height="2" fill="#fff" opacity=".35"/></svg>
<div class="t" style="left:87.0px;top:38.5px;line-height:26px;font-size:21px;font-weight:400;color:#000;letter-spacing:-0.2px">1A-PRIVAT</div>
<svg style="left:33.5px;top:77.5px" width="12.0" height="17.0" viewBox="0 0 12 17"><path d="M3 2 L9 8.5 L3 15" stroke="#777" stroke-width="1.5" fill="none"/></svg>
<svg style="left:53.5px;top:75.0px" width="28.0" height="25.0" viewBox="0 0 28 25"><path d="M1 2 Q1 0 3 0 H10 L12 2 H27 V5 H1Z" fill="#6b6b6b"/><rect x="0" y="5" width="28" height="20" rx="3" fill="#ffbf4f"/><rect x="0" y="5" width="28" height="2" fill="#fff" opacity=".35"/></svg>
<div class="t" style="left:87.0px;top:72.5px;line-height:26px;font-size:21px;font-weight:400;color:#000;letter-spacing:-0.2px">3DPrinter</div>
<svg style="left:33.5px;top:111.5px" width="12.0" height="17.0" viewBox="0 0 12 17"><path d="M3 2 L9 8.5 L3 15" stroke="#777" stroke-width="1.5" fill="none"/></svg>
<svg style="left:53.5px;top:109.0px" width="28.0" height="25.0" viewBox="0 0 28 25"><path d="M1 2 Q1 0 3 0 H10 L12 2 H27 V5 H1Z" fill="#6b6b6b"/><rect x="0" y="5" width="28" height="20" rx="3" fill="#ffbf4f"/><rect x="0" y="5" width="28" height="2" fill="#fff" opacity=".35"/></svg>
<div class="t" style="left:87.0px;top:106.5px;line-height:26px;font-size:21px;font-weight:400;color:#000;letter-spacing:-0.2px">Ablage</div>
<svg style="left:33.5px;top:145.5px" width="12.0" height="17.0" viewBox="0 0 12 17"><path d="M3 2 L9 8.5 L3 15" stroke="#777" stroke-width="1.5" fill="none"/></svg>
<svg style="left:53.5px;top:143.0px" width="28.0" height="25.0" viewBox="0 0 28 25"><path d="M1 2 Q1 0 3 0 H10 L12 2 H27 V5 H1Z" fill="#6b6b6b"/><rect x="0" y="5" width="28" height="20" rx="3" fill="#f00000"/><rect x="0" y="5" width="28" height="2" fill="#fff" opacity=".35"/></svg>
<div class="t" style="left:87.0px;top:140.5px;line-height:26px;font-size:21px;font-weight:400;color:#000;letter-spacing:-0.2px">acroldr</div>
<svg style="left:33.5px;top:179.5px" width="12.0" height="17.0" viewBox="0 0 12 17"><path d="M3 2 L9 8.5 L3 15" stroke="#777" stroke-width="1.5" fill="none"/></svg>
<svg style="left:53.5px;top:177.0px" width="28.0" height="25.0" viewBox="0 0 28 25"><path d="M1 2 Q1 0 3 0 H10 L12 2 H27 V5 H1Z" fill="#6b6b6b"/><rect x="0" y="5" width="28" height="20" rx="3" fill="#ffbf4f"/><rect x="0" y="5" width="28" height="2" fill="#fff" opacity=".35"/></svg>
<div class="t" style="left:87.0px;top:174.5px;line-height:26px;font-size:21px;font-weight:400;color:#000;letter-spacing:-0.2px">Adressen</div>
<svg style="left:53.5px;top:211.0px" width="28.0" height="25.0" viewBox="0 0 28 25"><path d="M1 2 Q1 0 3 0 H10 L12 2 H27 V5 H1Z" fill="#6b6b6b"/><rect x="0" y="5" width="28" height="20" rx="3" fill="#ffbf4f"/><rect x="0" y="5" width="28" height="2" fill="#fff" opacity=".35"/></svg>
<div class="t" style="left:87.0px;top:208.5px;line-height:26px;font-size:21px;font-weight:400;color:#000;letter-spacing:-0.2px">Archive</div>
<svg style="left:53.5px;top:245.0px" width="28.0" height="25.0" viewBox="0 0 28 25"><path d="M1 2 Q1 0 3 0 H10 L12 2 H27 V5 H1Z" fill="#6b6b6b"/><rect x="0" y="5" width="28" height="20" rx="3" fill="#ffbf4f"/><rect x="0" y="5" width="28" height="2" fill="#fff" opacity=".35"/></svg>
<div class="t" style="left:87.0px;top:242.5px;line-height:26px;font-size:21px;font-weight:400;color:#000;letter-spacing:-0.2px">ASCII</div>
<svg style="left:53.5px;top:279.0px" width="28.0" height="25.0" viewBox="0 0 28 25"><path d="M1 2 Q1 0 3 0 H10 L12 2 H27 V5 H1Z" fill="#6b6b6b"/><rect x="0" y="5" width="28" height="20" rx="3" fill="#ffbf4f"/><rect x="0" y="5" width="28" height="2" fill="#fff" opacity=".35"/></svg>
<div class="t" style="left:87.0px;top:276.5px;line-height:26px;font-size:21px;font-weight:400;color:#000;letter-spacing:-0.2px">Ausgabenbuch</div>
<svg style="left:53.5px;top:313.0px" width="28.0" height="25.0" viewBox="0 0 28 25"><path d="M1 2 Q1 0 3 0 H10 L12 2 H27 V5 H1Z" fill="#6b6b6b"/><rect x="0" y="5" width="28" height="20" rx="3" fill="#ffbf4f"/><rect x="0" y="5" width="28" height="2" fill="#fff" opacity=".35"/></svg>
<div class="t" style="left:87.0px;top:310.5px;line-height:26px;font-size:21px;font-weight:400;color:#000;letter-spacing:-0.2px">BAGBuch</div>
<svg style="left:33.5px;top:349.5px" width="12.0" height="17.0" viewBox="0 0 12 17"><path d="M3 2 L9 8.5 L3 15" stroke="#777" stroke-width="1.5" fill="none"/></svg>
<svg style="left:53.5px;top:347.0px" width="28.0" height="25.0" viewBox="0 0 28 25"><path d="M1 2 Q1 0 3 0 H10 L12 2 H27 V5 H1Z" fill="#6b6b6b"/><rect x="0" y="5" width="28" height="20" rx="3" fill="#ffbf4f"/><rect x="0" y="5" width="28" height="2" fill="#fff" opacity=".35"/></svg>
<div class="t" style="left:87.0px;top:344.5px;line-height:26px;font-size:21px;font-weight:400;color:#000;letter-spacing:-0.2px">Banking</div>
<svg style="left:33.5px;top:383.5px" width="12.0" height="17.0" viewBox="0 0 12 17"><path d="M3 2 L9 8.5 L3 15" stroke="#777" stroke-width="1.5" fill="none"/></svg>
<svg style="left:53.5px;top:381.0px" width="28.0" height="25.0" viewBox="0 0 28 25"><path d="M1 2 Q1 0 3 0 H10 L12 2 H27 V5 H1Z" fill="#6b6b6b"/><rect x="0" y="5" width="28" height="20" rx="3" fill="#ffbf4f"/><rect x="0" y="5" width="28" height="2" fill="#fff" opacity=".35"/></svg>
<div class="t" style="left:87.0px;top:378.5px;line-height:26px;font-size:21px;font-weight:400;color:#000;letter-spacing:-0.2px">BAT</div>
<svg style="left:53.5px;top:415.0px" width="28.0" height="25.0" viewBox="0 0 28 25"><path d="M1 2 Q1 0 3 0 H10 L12 2 H27 V5 H1Z" fill="#6b6b6b"/><rect x="0" y="5" width="28" height="20" rx="3" fill="#ffbf4f"/><rect x="0" y="5" width="28" height="2" fill="#fff" opacity=".35"/></svg>
<div class="t" style="left:87.0px;top:412.5px;line-height:26px;font-size:21px;font-weight:400;color:#000;letter-spacing:-0.2px">Bilder</div>
<svg style="left:53.5px;top:449.0px" width="28.0" height="25.0" viewBox="0 0 28 25"><path d="M1 2 Q1 0 3 0 H10 L12 2 H27 V5 H1Z" fill="#6b6b6b"/><rect x="0" y="5" width="28" height="20" rx="3" fill="#ffbf4f"/><rect x="0" y="5" width="28" height="2" fill="#fff" opacity=".35"/></svg>
<div class="t" style="left:87.0px;top:446.5px;line-height:26px;font-size:21px;font-weight:400;color:#000;letter-spacing:-0.2px">CD-LINUX</div>
<svg style="left:53.5px;top:483.0px" width="28.0" height="25.0" viewBox="0 0 28 25"><path d="M1 2 Q1 0 3 0 H10 L12 2 H27 V5 H1Z" fill="#6b6b6b"/><rect x="0" y="5" width="28" height="20" rx="3" fill="#ffbf4f"/><rect x="0" y="5" width="28" height="2" fill="#fff" opacity=".35"/></svg>
<div class="t" style="left:87.0px;top:480.5px;line-height:26px;font-size:21px;font-weight:400;color:#000;letter-spacing:-0.2px">CD-MAC</div>
<svg style="left:53.5px;top:517.0px" width="28.0" height="25.0" viewBox="0 0 28 25"><path d="M1 2 Q1 0 3 0 H10 L12 2 H27 V5 H1Z" fill="#6b6b6b"/><rect x="0" y="5" width="28" height="20" rx="3" fill="#ffbf4f"/><rect x="0" y="5" width="28" height="2" fill="#fff" opacity=".35"/></svg>
<div class="t" style="left:87.0px;top:514.5px;line-height:26px;font-size:21px;font-weight:400;color:#000;letter-spacing:-0.2px">CDSetup</div>
<svg style="left:53.5px;top:551.0px" width="28.0" height="25.0" viewBox="0 0 28 25"><path d="M1 2 Q1 0 3 0 H10 L12 2 H27 V5 H1Z" fill="#6b6b6b"/><rect x="0" y="5" width="28" height="20" rx="3" fill="#ffbf4f"/><rect x="0" y="5" width="28" height="2" fill="#fff" opacity=".35"/></svg>
<div class="t" style="left:87.0px;top:548.5px;line-height:26px;font-size:21px;font-weight:400;color:#000;letter-spacing:-0.2px">CopyBack</div>
<svg style="left:53.5px;top:585.0px" width="28.0" height="25.0" viewBox="0 0 28 25"><path d="M1 2 Q1 0 3 0 H10 L12 2 H27 V5 H1Z" fill="#6b6b6b"/><rect x="0" y="5" width="28" height="20" rx="3" fill="#ffbf4f"/><rect x="0" y="5" width="28" height="2" fill="#fff" opacity=".35"/></svg>
<div class="t" style="left:87.0px;top:582.5px;line-height:26px;font-size:21px;font-weight:400;color:#000;letter-spacing:-0.2px">CopyBack2</div>
<svg style="left:53.5px;top:619.0px" width="28.0" height="25.0" viewBox="0 0 28 25"><path d="M1 2 Q1 0 3 0 H10 L12 2 H27 V5 H1Z" fill="#6b6b6b"/><rect x="0" y="5" width="28" height="20" rx="3" fill="#ffbf4f"/><rect x="0" y="5" width="28" height="2" fill="#fff" opacity=".35"/></svg>
<div class="t" style="left:87.0px;top:616.5px;line-height:26px;font-size:21px;font-weight:400;color:#000;letter-spacing:-0.2px">CopyBack5</div>
<svg style="left:53.5px;top:653.0px" width="28.0" height="25.0" viewBox="0 0 28 25"><path d="M1 2 Q1 0 3 0 H10 L12 2 H27 V5 H1Z" fill="#6b6b6b"/><rect x="0" y="5" width="28" height="20" rx="3" fill="#ffbf4f"/><rect x="0" y="5" width="28" height="2" fill="#fff" opacity=".35"/></svg>
<div class="t" style="left:87.0px;top:650.5px;line-height:26px;font-size:21px;font-weight:400;color:#000;letter-spacing:-0.2px">CrossHelp</div>
<svg style="left:53.5px;top:687.0px" width="28.0" height="25.0" viewBox="0 0 28 25"><path d="M1 2 Q1 0 3 0 H10 L12 2 H27 V5 H1Z" fill="#6b6b6b"/><rect x="0" y="5" width="28" height="20" rx="3" fill="#ffbf4f"/><rect x="0" y="5" width="28" height="2" fill="#fff" opacity=".35"/></svg>
<div class="t" style="left:87.0px;top:684.5px;line-height:26px;font-size:21px;font-weight:400;color:#000;letter-spacing:-0.2px">CT</div>
<svg style="left:33.5px;top:723.5px" width="12.0" height="17.0" viewBox="0 0 12 17"><path d="M3 2 L9 8.5 L3 15" stroke="#777" stroke-width="1.5" fill="none"/></svg>
<svg style="left:53.5px;top:721.0px" width="28.0" height="25.0" viewBox="0 0 28 25"><path d="M1 2 Q1 0 3 0 H10 L12 2 H27 V5 H1Z" fill="#6b6b6b"/><rect x="0" y="5" width="28" height="20" rx="3" fill="#ffbf4f"/><rect x="0" y="5" width="28" height="2" fill="#fff" opacity=".35"/></svg>
<div class="t" style="left:87.0px;top:718.5px;line-height:26px;font-size:21px;font-weight:400;color:#000;letter-spacing:-0.2px">Daten</div>
<svg style="left:33.5px;top:757.5px" width="12.0" height="17.0" viewBox="0 0 12 17"><path d="M3 2 L9 8.5 L3 15" stroke="#777" stroke-width="1.5" fill="none"/></svg>
<svg style="left:53.5px;top:755.0px" width="28.0" height="25.0" viewBox="0 0 28 25"><path d="M1 2 Q1 0 3 0 H10 L12 2 H27 V5 H1Z" fill="#6b6b6b"/><rect x="0" y="5" width="28" height="20" rx="3" fill="#ffbf4f"/><rect x="0" y="5" width="28" height="2" fill="#fff" opacity=".35"/></svg>
<div class="t" style="left:87.0px;top:752.5px;line-height:26px;font-size:21px;font-weight:400;color:#000;letter-spacing:-0.2px">Datenbanken</div>
<svg style="left:53.5px;top:789.0px" width="28.0" height="25.0" viewBox="0 0 28 25"><path d="M1 2 Q1 0 3 0 H10 L12 2 H27 V5 H1Z" fill="#6b6b6b"/><rect x="0" y="5" width="28" height="20" rx="3" fill="#ffbf4f"/><rect x="0" y="5" width="28" height="2" fill="#fff" opacity=".35"/></svg>
<div class="t" style="left:87.0px;top:786.5px;line-height:26px;font-size:21px;font-weight:400;color:#000;letter-spacing:-0.2px">DEBEKA</div>
<svg style="left:33.5px;top:825.5px" width="12.0" height="17.0" viewBox="0 0 12 17"><path d="M3 2 L9 8.5 L3 15" stroke="#777" stroke-width="1.5" fill="none"/></svg>
<svg style="left:53.5px;top:823.0px" width="28.0" height="25.0" viewBox="0 0 28 25"><path d="M1 2 Q1 0 3 0 H10 L12 2 H27 V5 H1Z" fill="#6b6b6b"/><rect x="0" y="5" width="28" height="20" rx="3" fill="#ffbf4f"/><rect x="0" y="5" width="28" height="2" fill="#fff" opacity=".35"/></svg>
<div class="t" style="left:87.0px;top:820.5px;line-height:26px;font-size:21px;font-weight:400;color:#000;letter-spacing:-0.2px">delphi-frames</div>
<svg style="left:33.5px;top:859.5px" width="12.0" height="17.0" viewBox="0 0 12 17"><path d="M3 2 L9 8.5 L3 15" stroke="#777" stroke-width="1.5" fill="none"/></svg>
<svg style="left:53.5px;top:857.0px" width="28.0" height="25.0" viewBox="0 0 28 25"><path d="M1 2 Q1 0 3 0 H10 L12 2 H27 V5 H1Z" fill="#6b6b6b"/><rect x="0" y="5" width="28" height="20" rx="3" fill="#f00000"/><rect x="0" y="5" width="28" height="2" fill="#fff" opacity=".35"/></svg>
<div class="t" style="left:87.0px;top:854.5px;line-height:26px;font-size:21px;font-weight:400;color:#000;letter-spacing:-0.2px">devpage</div>
<svg style="left:33.5px;top:893.5px" width="12.0" height="17.0" viewBox="0 0 12 17"><path d="M3 2 L9 8.5 L3 15" stroke="#777" stroke-width="1.5" fill="none"/></svg>
<svg style="left:53.5px;top:891.0px" width="28.0" height="25.0" viewBox="0 0 28 25"><path d="M1 2 Q1 0 3 0 H10 L12 2 H27 V5 H1Z" fill="#6b6b6b"/><rect x="0" y="5" width="28" height="20" rx="3" fill="#ffbf4f"/><rect x="0" y="5" width="28" height="2" fill="#fff" opacity=".35"/></svg>
<div class="t" style="left:87.0px;top:888.5px;line-height:26px;font-size:21px;font-weight:400;color:#000;letter-spacing:-0.2px">Dropbox</div>
<svg style="left:53.5px;top:925.0px" width="28.0" height="25.0" viewBox="0 0 28 25"><path d="M1 2 Q1 0 3 0 H10 L12 2 H27 V5 H1Z" fill="#6b6b6b"/><rect x="0" y="5" width="28" height="20" rx="3" fill="#ffbf4f"/><rect x="0" y="5" width="28" height="2" fill="#fff" opacity=".35"/></svg>
<div class="t" style="left:87.0px;top:922.5px;line-height:26px;font-size:21px;font-weight:400;color:#000;letter-spacing:-0.2px">evb-Runtime</div>
<svg style="left:33.5px;top:961.5px" width="12.0" height="17.0" viewBox="0 0 12 17"><path d="M3 2 L9 8.5 L3 15" stroke="#777" stroke-width="1.5" fill="none"/></svg>
<svg style="left:53.5px;top:959.0px" width="28.0" height="25.0" viewBox="0 0 28 25"><path d="M1 2 Q1 0 3 0 H10 L12 2 H27 V5 H1Z" fill="#6b6b6b"/><rect x="0" y="5" width="28" height="20" rx="3" fill="#ffbf4f"/><rect x="0" y="5" width="28" height="2" fill="#fff" opacity=".35"/></svg>
<div class="t" style="left:87.0px;top:956.5px;line-height:26px;font-size:21px;font-weight:400;color:#000;letter-spacing:-0.2px">FactSheet</div>
<svg style="left:33.5px;top:995.5px" width="12.0" height="17.0" viewBox="0 0 12 17"><path d="M3 2 L9 8.5 L3 15" stroke="#777" stroke-width="1.5" fill="none"/></svg>
<svg style="left:53.5px;top:993.0px" width="28.0" height="25.0" viewBox="0 0 28 25"><path d="M1 2 Q1 0 3 0 H10 L12 2 H27 V5 H1Z" fill="#6b6b6b"/><rect x="0" y="5" width="28" height="20" rx="3" fill="#ffbf4f"/><rect x="0" y="5" width="28" height="2" fill="#fff" opacity=".35"/></svg>
<div class="t" style="left:87.0px;top:990.5px;line-height:26px;font-size:21px;font-weight:400;color:#000;letter-spacing:-0.2px">FactSheet1</div>
<svg style="left:33.5px;top:1029.5px" width="12.0" height="17.0" viewBox="0 0 12 17"><path d="M3 2 L9 8.5 L3 15" stroke="#777" stroke-width="1.5" fill="none"/></svg>
<svg style="left:53.5px;top:1027.0px" width="28.0" height="25.0" viewBox="0 0 28 25"><path d="M1 2 Q1 0 3 0 H10 L12 2 H27 V5 H1Z" fill="#6b6b6b"/><rect x="0" y="5" width="28" height="20" rx="3" fill="#f00000"/><rect x="0" y="5" width="28" height="2" fill="#fff" opacity=".35"/></svg>
<div class="t" style="left:87.0px;top:1024.5px;line-height:26px;font-size:21px;font-weight:400;color:#000;letter-spacing:-0.2px">FASWEB</div>
<svg style="left:53.5px;top:1061.0px" width="28.0" height="25.0" viewBox="0 0 28 25"><path d="M1 2 Q1 0 3 0 H10 L12 2 H27 V5 H1Z" fill="#6b6b6b"/><rect x="0" y="5" width="28" height="20" rx="3" fill="#ffbf4f"/><rect x="0" y="5" width="28" height="2" fill="#fff" opacity=".35"/></svg>
<div class="t" style="left:87.0px;top:1058.5px;line-height:26px;font-size:21px;font-weight:400;color:#000;letter-spacing:-0.2px">FileIO</div>
<svg style="left:53.5px;top:1095.0px" width="28.0" height="25.0" viewBox="0 0 28 25"><path d="M1 2 Q1 0 3 0 H10 L12 2 H27 V5 H1Z" fill="#6b6b6b"/><rect x="0" y="5" width="28" height="20" rx="3" fill="#ffbf4f"/><rect x="0" y="5" width="28" height="2" fill="#fff" opacity=".35"/></svg>
<div class="t" style="left:87.0px;top:1092.5px;line-height:26px;font-size:21px;font-weight:400;color:#000;letter-spacing:-0.2px">FileIO2</div>
</div>
<div style="left:1181.0px;top:1354.0px;width:23.0px;height:27.0px;background:#7a0000"></div>
<div style="left:1264.0px;top:1384.0px;width:449.0px;height:2.5px;background:#8a0000"></div>
<div style="left:1179.5px;top:1754.0px;width:564.0px;height:31.0px;background:#f0f0f0"></div>
<div style="left:1211.0px;top:1766.0px;width:429.0px;height:7.0px;background:#888;border-radius:3.5px"></div>
<div style="left:1179.0px;top:1785.0px;width:565.0px;height:1.0px;background:#a0a0a0"></div>
<div style="left:1179.0px;top:602.0px;width:1.0px;height:1184.0px;background:#b0b0b0"></div>
<div style="left:1109.0px;top:1786.0px;width:635.0px;height:46.0px;background:#fff"></div>
<div class="t" style="left:1120.0px;top:1791.5px;line-height:26px;font-size:21px;font-weight:400;color:#000;">D:</div>
<div style="left:1107.0px;top:1832.0px;width:637.0px;height:1.0px;background:#b0b0b0"></div>
<div style="left:1109.0px;top:1833.0px;width:2225.0px;height:44.0px;background:#f0f0f0"></div>
<div class="t" style="left:1117.0px;top:1837.5px;line-height:28px;font-size:22.7px;font-weight:400;color:#000;">O: 0/170, D: 750/750; Versteckt: 7, System: 19</div>
<div style="left:1635.0px;top:1840.0px;width:1.5px;height:28.0px;background:#b0b0b0"></div>
<div class="t" style="left:1647.0px;top:1837.5px;line-height:28px;font-size:22.5px;font-weight:400;color:#000;">873,68 GB frei.</div>
<div style="left:1827.7px;top:1840.0px;width:1.5px;height:28.0px;background:#b0b0b0"></div>
<div style="left:2058.8px;top:1840.0px;width:1.5px;height:28.0px;background:#b0b0b0"></div>
<div style="left:2235.6px;top:1840.0px;width:1.5px;height:28.0px;background:#b0b0b0"></div>
<div style="left:2327.8px;top:1840.0px;width:1.5px;height:28.0px;background:#b0b0b0"></div>
<div style="left:2387.5px;top:1840.0px;width:1.5px;height:28.0px;background:#b0b0b0"></div>
<div class="t" style="left:1842.0px;top:1837.5px;line-height:28px;font-size:22.5px;font-weight:400;color:#000;">1 ausgewählt.</div>
<div class="t" style="left:2071.0px;top:1837.5px;line-height:28px;font-size:22.5px;font-weight:400;color:#000;">3,28 MB</div>
<div class="t" style="left:2248.0px;top:1837.5px;line-height:28px;font-size:22.5px;font-weight:400;color:#000;">A</div>
<div class="t" style="left:2401.0px;top:1837.5px;line-height:28px;font-size:22.5px;font-weight:400;color:#000;">31.03.2025,&nbsp; 17:44:24 [ Datei 26 ]</div>
<div style="left:1745.0px;top:511.0px;width:14.0px;height:1275.0px;background:#f0f0f0"></div>
<div style="left:1759.0px;top:511.0px;width:1575.0px;height:46.0px;background:#fff"></div>
<div style="left:1759.7px;top:512.5px;width:74.3px;height:45.0px;background:#f5f5f5"></div>
<div class="t" style="left:1768.0px;top:521.5px;line-height:26px;font-size:21px;font-weight:400;color:#000;">Listen</div>
<div style="left:1835.5px;top:512.5px;width:69.0px;height:45.0px;background:#f0f0f0"></div>
<div class="t" style="left:1840.0px;top:523.0px;line-height:26px;font-size:21px;font-weight:400;color:#000;">Bilder</div>
<div style="left:1906.0px;top:512.5px;width:97.0px;height:45.0px;background:#f0f0f0"></div>
<div class="t" style="left:1912.0px;top:523.0px;line-height:26px;font-size:21px;font-weight:400;color:#000;">Gruppen</div>
<div style="left:2005.0px;top:512.5px;width:101.7px;height:45.0px;background:#f0f0f0"></div>
<div class="t" style="left:2011.0px;top:523.0px;line-height:26px;font-size:21px;font-weight:400;color:#000;">Zeitleiste</div>
<div style="left:2108.0px;top:512.5px;width:86.0px;height:45.0px;background:#f0f0f0"></div>
<div class="t" style="left:2114.0px;top:523.0px;line-height:26px;font-size:21px;font-weight:400;color:#000;">Struktur</div>
<div style="left:1759.0px;top:557.0px;width:1575.0px;height:50.0px;background:#f0f0f0"></div>
<div style="left:1765.5px;top:565.0px;width:55.0px;height:39.0px;background:#cce4f7;border:1px solid #a8d0f0;border-radius:2px;box-sizing:border-box"></div>
<div style="left:1833.0px;top:565.0px;width:52.5px;height:39.0px;background:#cce4f7;border:1px solid #a8d0f0;border-radius:2px;box-sizing:border-box"></div>
<div style="left:2026.5px;top:565.0px;width:47.5px;height:39.0px;background:#cce4f7;border:1px solid #a8d0f0;border-radius:2px;box-sizing:border-box"></div>
<div style="left:1826.0px;top:567.0px;width:1.5px;height:34.0px;background:#b8b8b8"></div>
<div style="left:1891.0px;top:567.0px;width:1.5px;height:34.0px;background:#b8b8b8"></div>
<div style="left:1955.5px;top:567.0px;width:1.5px;height:34.0px;background:#b8b8b8"></div>
<div style="left:2020.5px;top:567.0px;width:1.5px;height:34.0px;background:#b8b8b8"></div>
<div style="left:2235.5px;top:567.0px;width:1.5px;height:34.0px;background:#b8b8b8"></div>
<div style="left:2354.0px;top:567.0px;width:1.5px;height:34.0px;background:#b8b8b8"></div>
<svg style="left:1779.0px;top:570.0px" width="30.0" height="30.0" viewBox="0 0 30 30"><path d="M5 17 Q6 6 17 6" stroke="#2a70d8" stroke-width="5" fill="none"/><path d="M15 0 L27 7 L15 14Z" fill="#2a70d8"/><path d="M25 13 Q24 24 13 24" stroke="#2a70d8" stroke-width="5" fill="none"/><path d="M15 30 L3 23 L15 16Z" fill="#2a70d8"/><path d="M7 13 Q9 8 16 8" stroke="#8ac0ff" stroke-width="1.5" fill="none"/></svg>
<svg style="left:1850.0px;top:573.0px" width="22.0" height="26.0" viewBox="0 0 22 26"><rect x="1" y="1" width="9" height="5" fill="#8ab8f0" stroke="#1a5ac8" stroke-width="1.5"/><rect x="11" y="7" width="9" height="5" fill="#8ab8f0" stroke="#1a5ac8" stroke-width="1.5"/><rect x="11" y="14" width="9" height="5" fill="#8ab8f0" stroke="#1a5ac8" stroke-width="1.5"/><rect x="11" y="21" width="9" height="4.5" fill="#8ab8f0" stroke="#1a5ac8" stroke-width="1.5"/><path d="M5 6 V23.5 H11 M5 9.5 H11 M5 16.5 H11" stroke="#1a5ac8" stroke-width="1.5" fill="none"/></svg>
<svg style="left:1910.0px;top:573.0px" width="28.0" height="24.0" viewBox="0 0 28 24"><path d="M1 3 Q1 1 3 1 H10 L13 4 H24 V22 H1Z" fill="#f0c040" stroke="#a88020" stroke-width="1.3"/><path d="M3 9 H27 L26 23 H1Z" fill="#fde07a" stroke="#a88020" stroke-width="1.3"/></svg>
<svg style="left:1975.0px;top:572.0px" width="30.0" height="30.0" viewBox="0 0 30 30"><path d="M1 1 H24 L15 12 V26 L10 22 V12Z" fill="#555"/><rect x="15" y="15" width="13" height="13" fill="#fff" stroke="#555" stroke-width="1.5"/><path d="M18 21 L21 24 L26 17" stroke="#1a9a3a" stroke-width="2" fill="none"/></svg>
<svg style="left:2038.0px;top:571.0px" width="28.0" height="28.0" viewBox="0 0 28 28"><rect x="1" y="1" width="26" height="26" fill="#fff" stroke="#666" stroke-width="1.5"/><rect x="1" y="1" width="26" height="4" fill="#7ad040"/><rect x="4" y="9" width="2" height="2.5" fill="#222"/><rect x="11" y="9" width="4" height="2.5" fill="#222"/><rect x="18" y="9" width="2" height="2.5" fill="#222"/><rect x="4" y="14" width="2" height="2.5" fill="#222"/><rect x="11" y="14" width="4" height="2.5" fill="#222"/><rect x="18" y="14" width="2" height="2.5" fill="#222"/><rect x="4" y="19" width="2" height="2.5" fill="#222"/><rect x="11" y="19" width="4" height="2.5" fill="#222"/><rect x="18" y="19" width="2" height="2.5" fill="#222"/></svg>
<svg style="left:2086.0px;top:571.0px" width="28.0" height="28.0" viewBox="0 0 28 28"><rect x="1" y="1" width="26" height="26" fill="#fff" stroke="#666" stroke-width="1.5"/><rect x="1" y="1" width="26" height="4" fill="#e83030"/><rect x="4" y="9" width="2" height="2.5" fill="#222"/><rect x="11" y="9" width="4" height="2.5" fill="#222"/><rect x="18" y="9" width="2" height="2.5" fill="#222"/><rect x="4" y="14" width="2" height="2.5" fill="#222"/><rect x="11" y="14" width="4" height="2.5" fill="#222"/><rect x="18" y="14" width="2" height="2.5" fill="#222"/><rect x="4" y="19" width="2" height="2.5" fill="#222"/><rect x="11" y="19" width="4" height="2.5" fill="#222"/><rect x="18" y="19" width="2" height="2.5" fill="#222"/></svg>
<svg style="left:2134.8px;top:571.0px" width="28.0" height="28.0" viewBox="0 0 28 28"><rect x="1" y="1" width="26" height="26" fill="#fff" stroke="#666" stroke-width="1.5"/><rect x="1" y="1" width="26" height="4" fill="#e050e0"/><rect x="4" y="9" width="2" height="2.5" fill="#222"/><rect x="11" y="9" width="4" height="2.5" fill="#222"/><rect x="18" y="9" width="2" height="2.5" fill="#222"/><rect x="4" y="14" width="2" height="2.5" fill="#222"/><rect x="11" y="14" width="4" height="2.5" fill="#222"/><rect x="18" y="14" width="2" height="2.5" fill="#222"/><rect x="4" y="19" width="2" height="2.5" fill="#222"/><rect x="11" y="19" width="4" height="2.5" fill="#222"/><rect x="18" y="19" width="2" height="2.5" fill="#222"/></svg>
<svg style="left:2188.0px;top:571.0px" width="30.0" height="30.0" viewBox="0 0 30 30"><text x="0" y="13" font-family="Liberation Sans" font-size="14" font-weight="700" fill="#2a5ad0">A</text><text x="0" y="29" font-family="Liberation Sans" font-size="14" font-weight="700" fill="#e02020">Z</text><path d="M17 2 H24 V18 H28 L20.5 29 L13 18 H17Z" fill="#9ac8f8" stroke="#2a6ad0" stroke-width="1.5"/></svg>
<svg style="left:2254.0px;top:571.0px" width="30.0" height="30.0" viewBox="0 0 30 30"><path d="M1 4 H28 L17 16 V28 H12 V16Z" fill="#1fa01f"/><circle cx="8" cy="6" r="4" fill="#40c0e0"/><circle cx="20" cy="4" r="3" fill="#e040a0"/><circle cx="14" cy="8" r="3" fill="#f0c020"/></svg>
<div class="t" style="left:2287.6px;top:572.0px;line-height:26px;font-size:21px;font-weight:400;color:#000;">Filter</div>
<svg style="left:2376.0px;top:571.0px" width="25.0" height="29.0" viewBox="0 0 25 29"><rect x="2" y="3" width="21" height="15" fill="#dcd8f8" stroke="#aaa" stroke-width="1.5"/><path d="M12 18 L5 28 M12 18 L19 28" stroke="#aaa" stroke-width="2"/></svg>
<div style="left:2427.7px;top:565.0px;width:229.3px;height:39.0px;background:#fff;border:1px solid #7a7a7a;box-sizing:border-box"></div>
<svg style="left:2677.0px;top:570.0px" width="30.0" height="30.0" viewBox="0 0 30 30"><circle cx="18" cy="11" r="8" fill="#f4f4f4" stroke="#999" stroke-width="2.5"/><path d="M12 17 L3 27" stroke="#888" stroke-width="4" stroke-linecap="round"/></svg>
<svg style="left:3287.0px;top:570.0px" width="30.0" height="30.0" viewBox="0 0 30 30"><circle cx="15" cy="15" r="13.5" fill="#888" stroke="#555" stroke-width="1.5"/><circle cx="15" cy="15" r="10" fill="#c8c8c8"/><path d="M10 10 L20 20 M20 10 L10 20" stroke="#fff" stroke-width="2"/></svg>
<div style="left:1763.0px;top:608.0px;width:1568.0px;height:47.0px;background:#fff;border-top:2px solid #707070;border-left:1px solid #8a8a8a;box-sizing:border-box"></div>
<div style="left:1767.0px;top:616.0px;width:24.0px;height:24.0px;background:#f0f0f0;border:1px solid #8a8a8a;box-sizing:border-box"></div>
<div style="left:1769.0px;top:618.0px;width:20.0px;height:20.0px;background:#fff"></div>
<div style="left:1796.7px;top:610.0px;width:1.5px;height:43.0px;background:#e4e4e4"></div>
<div style="left:2688.0px;top:610.0px;width:1.5px;height:43.0px;background:#e4e4e4"></div>
<div style="left:2885.4px;top:610.0px;width:1.5px;height:43.0px;background:#e4e4e4"></div>
<div style="left:3138.0px;top:610.0px;width:1.5px;height:43.0px;background:#e4e4e4"></div>
<div style="left:3310.7px;top:610.0px;width:1.5px;height:43.0px;background:#e4e4e4"></div>
<div class="t" style="left:1803.0px;top:615.0px;line-height:26px;font-size:21px;font-weight:400;color:#000;">Name</div>
<div class="t" style="left:2693.7px;top:615.0px;line-height:26px;font-size:21px;font-weight:400;color:#000;">Typ</div>
<div class="t" style="left:2891.0px;top:616.0px;line-height:26px;font-size:21px;font-weight:700;color:#000;">Datum</div>
<div class="t" style="left:3124.0px;top:619.0px;line-height:24px;font-size:19px;font-weight:700;color:#000;">v</div>
<div class="t" style="left:3143.0px;top:615.0px;line-height:26px;font-size:21px;font-weight:400;color:#000;">Größe</div>
<div style="left:1763.0px;top:653.0px;width:1568.0px;height:1.5px;background:#2a70b0"></div>
<div style="left:1763.0px;top:654.5px;width:1568.0px;height:1127.0px;background:#fff;border-left:1.5px solid #2a70b0;border-right:1.5px solid #2a70b0;border-bottom:1.5px solid #2a70b0;box-sizing:border-box"></div>
<div style="left:2690.0px;top:655.0px;width:1.0px;height:1125.0px;background:#ececec"></div>
<div style="left:2885.5px;top:655.0px;width:1.0px;height:1125.0px;background:#ececec"></div>
<div style="left:3137.7px;top:655.0px;width:1.0px;height:1125.0px;background:#ececec"></div>
<div style="left:3300.0px;top:655.0px;width:30.0px;height:1125.0px;background:#f0f0f0"></div>
<div style="left:3312.0px;top:685.0px;width:7.0px;height:45.0px;background:#888;border-radius:3.5px"></div>
<div style="left:1772.0px;top:663.5px;width:17.5px;height:17.5px;background:#f0f0f0;border:1px solid #8a8a8a;box-sizing:border-box"></div>
<svg style="left:1800.0px;top:657.5px" width="28.0" height="29.0" viewBox="0 0 28 29"><rect x="3" y="4" width="15" height="17" fill="#fbe88a" stroke="#a88a30" stroke-width="1.2"/><rect x="1" y="1.5" width="25" height="4.5" rx="2" fill="#f4f4f4" stroke="#707070" stroke-width="1.4"/><rect x="1" y="19.5" width="25" height="4.5" rx="2" fill="#f4f4f4" stroke="#707070" stroke-width="1.4"/><rect x="21" y="6" width="4.5" height="13.5" fill="#b8b8b8" stroke="#666" stroke-width="1"/><path d="M21 9 H25.5 M21 12 H25.5 M21 15 H25.5" stroke="#555" stroke-width="0.8"/><rect x="21.5" y="24" width="3.5" height="2" fill="#888"/><rect x="17" y="25.5" width="11" height="3" fill="#999" stroke="#555" stroke-width="0.8"/></svg>
<div class="t" style="left:1834.0px;top:661.0px;line-height:26px;font-size:21.2px;font-weight:400;color:#000;">URLFMX.zip</div>
<div class="t" style="left:2694.0px;top:661.0px;line-height:26px;font-size:21px;font-weight:400;color:#000;">.zip</div>
<div class="t" style="left:2895.0px;top:661.0px;line-height:26px;font-size:21px;font-weight:400;color:#000;letter-spacing:-0.4px">Do</div>
<div class="t" style="left:2925.0px;top:661.0px;line-height:26px;font-size:21px;font-weight:400;color:#000;">24. Jul. 25</div>
<div class="t" style="left:3071.7px;top:661.0px;line-height:26px;font-size:21px;font-weight:400;color:#000;">23:17</div>
<div class="t" style="right:566.0px;top:661.0px;line-height:26px;font-size:21px;font-weight:400;color:#000;">78 kb</div>
<div style="left:1772.0px;top:698.5px;width:17.5px;height:17.5px;background:#f0f0f0;border:1px solid #8a8a8a;box-sizing:border-box"></div>
<svg style="left:1800.0px;top:692.5px" width="28.0" height="28.0" viewBox="0 0 28 28"><path d="M1 3 V26" stroke="#aaa" stroke-width="1"/><rect x="3" y="2" width="23" height="24" rx="1" fill="#fff" stroke="#666" stroke-width="1.5"/><path d="M5 23 V17 Q10 14 14 18 T24 18 V23Z" fill="#3cb38a"/><circle cx="20" cy="8" r="2.5" fill="#f5a623"/></svg>
<div class="t" style="left:1834.0px;top:696.0px;line-height:26px;font-size:21.2px;font-weight:400;color:#000;">TwoYearsSubscriptionOffer.png</div>
<div class="t" style="left:2694.0px;top:696.0px;line-height:26px;font-size:21px;font-weight:400;color:#000;">.png</div>
<div class="t" style="left:2895.0px;top:696.0px;line-height:26px;font-size:21px;font-weight:400;color:#000;letter-spacing:-0.4px">Do</div>
<div class="t" style="left:2925.0px;top:696.0px;line-height:26px;font-size:21px;font-weight:400;color:#000;">24. Jul. 25</div>
<div class="t" style="left:3071.7px;top:696.0px;line-height:26px;font-size:21px;font-weight:400;color:#000;">15:41</div>
<div class="t" style="right:566.0px;top:696.0px;line-height:26px;font-size:21px;font-weight:400;color:#000;">303 kb</div>
<div style="left:1772.0px;top:733.5px;width:17.5px;height:17.5px;background:#f0f0f0;border:1px solid #8a8a8a;box-sizing:border-box"></div>
<svg style="left:1800.0px;top:727.5px" width="28.0" height="29.0" viewBox="0 0 28 29"><rect x="3" y="4" width="15" height="17" fill="#fbe88a" stroke="#a88a30" stroke-width="1.2"/><rect x="1" y="1.5" width="25" height="4.5" rx="2" fill="#f4f4f4" stroke="#707070" stroke-width="1.4"/><rect x="1" y="19.5" width="25" height="4.5" rx="2" fill="#f4f4f4" stroke="#707070" stroke-width="1.4"/><rect x="21" y="6" width="4.5" height="13.5" fill="#b8b8b8" stroke="#666" stroke-width="1"/><path d="M21 9 H25.5 M21 12 H25.5 M21 15 H25.5" stroke="#555" stroke-width="0.8"/><rect x="21.5" y="24" width="3.5" height="2" fill="#888"/><rect x="17" y="25.5" width="11" height="3" fill="#999" stroke="#555" stroke-width="0.8"/></svg>
<div class="t" style="left:1834.0px;top:731.0px;line-height:26px;font-size:21.2px;font-weight:400;color:#000;">htmltest.zip</div>
<div class="t" style="left:2694.0px;top:731.0px;line-height:26px;font-size:21px;font-weight:400;color:#000;">.zip</div>
<div class="t" style="left:2895.0px;top:731.0px;line-height:26px;font-size:21px;font-weight:400;color:#000;letter-spacing:-0.4px">Fr</div>
<div class="t" style="left:2925.0px;top:731.0px;line-height:26px;font-size:21px;font-weight:400;color:#000;">18. Jul. 25</div>
<div class="t" style="left:3071.7px;top:731.0px;line-height:26px;font-size:21px;font-weight:400;color:#000;">12:35</div>
<div class="t" style="right:566.0px;top:731.0px;line-height:26px;font-size:21px;font-weight:400;color:#000;">17 kb</div>
<div style="left:1772.0px;top:768.5px;width:17.5px;height:17.5px;background:#f0f0f0;border:1px solid #8a8a8a;box-sizing:border-box"></div>
<svg style="left:1803.0px;top:763.5px" width="24.0" height="26.0" viewBox="0 0 24 26"><path d="M3.5 1.5 H15 L20.5 7 V24.5 H3.5Z" fill="#fff" stroke="#222" stroke-width="1.5" stroke-linejoin="round"/><path d="M15 1.5 V7 H20.5" fill="none" stroke="#222" stroke-width="1.3"/></svg>
<div class="t" style="left:1834.0px;top:766.0px;line-height:26px;font-size:21.2px;font-weight:400;color:#000;">htmltest.html</div>
<div class="t" style="left:2694.0px;top:766.0px;line-height:26px;font-size:21px;font-weight:400;color:#000;">.html</div>
<div class="t" style="left:2895.0px;top:766.0px;line-height:26px;font-size:21px;font-weight:400;color:#000;letter-spacing:-0.4px">Fr</div>
<div class="t" style="left:2925.0px;top:766.0px;line-height:26px;font-size:21px;font-weight:400;color:#000;">18. Jul. 25</div>
<div class="t" style="left:3071.7px;top:766.0px;line-height:26px;font-size:21px;font-weight:400;color:#000;">12:35</div>
<div class="t" style="right:566.0px;top:766.0px;line-height:26px;font-size:21px;font-weight:400;color:#000;">122 kb</div>
<div style="left:1772.0px;top:803.5px;width:17.5px;height:17.5px;background:#f0f0f0;border:1px solid #8a8a8a;box-sizing:border-box"></div>
<svg style="left:1803.0px;top:798.5px" width="24.0" height="26.0" viewBox="0 0 24 26"><path d="M3.5 1.5 H15 L20.5 7 V24.5 H3.5Z" fill="#fff" stroke="#222" stroke-width="1.5" stroke-linejoin="round"/><path d="M15 1.5 V7 H20.5" fill="none" stroke="#222" stroke-width="1.3"/></svg>
<div class="t" style="left:1834.0px;top:801.0px;line-height:26px;font-size:21.2px;font-weight:400;color:#000;">view.html</div>
<div class="t" style="left:2694.0px;top:801.0px;line-height:26px;font-size:21px;font-weight:400;color:#000;">.html</div>
<div class="t" style="left:2895.0px;top:801.0px;line-height:26px;font-size:21px;font-weight:400;color:#000;letter-spacing:-0.4px">Do</div>
<div class="t" style="left:2925.0px;top:801.0px;line-height:26px;font-size:21px;font-weight:400;color:#000;">17. Jul. 25</div>
<div class="t" style="left:3071.7px;top:801.0px;line-height:26px;font-size:21px;font-weight:400;color:#000;">22:16</div>
<div class="t" style="right:566.0px;top:801.0px;line-height:26px;font-size:21px;font-weight:400;color:#000;">4 kb</div>
<div style="left:1772.0px;top:838.5px;width:17.5px;height:17.5px;background:#f0f0f0;border:1px solid #8a8a8a;box-sizing:border-box"></div>
<svg style="left:1803.0px;top:833.5px" width="24.0" height="26.0" viewBox="0 0 24 26"><path d="M3.5 1.5 H15 L20.5 7 V24.5 H3.5Z" fill="#fff" stroke="#222" stroke-width="1.5" stroke-linejoin="round"/><path d="M15 1.5 V7 H20.5" fill="none" stroke="#222" stroke-width="1.3"/><rect x="7" y="10.0" width="10" height="1.6" fill="#2a2aa8"/><rect x="7" y="13.3" width="8" height="1.6" fill="#2a2aa8"/><rect x="7" y="16.6" width="10" height="1.6" fill="#2a2aa8"/><rect x="7" y="19.9" width="8" height="1.6" fill="#2a2aa8"/></svg>
<div class="t" style="left:1834.0px;top:836.0px;line-height:26px;font-size:21.2px;font-weight:400;color:#000;">PCAPhone.INI</div>
<div class="t" style="left:2694.0px;top:836.0px;line-height:26px;font-size:21px;font-weight:400;color:#000;">.INI</div>
<div class="t" style="left:2895.0px;top:836.0px;line-height:26px;font-size:21px;font-weight:400;color:#000;letter-spacing:-1.3px">Mo</div>
<div class="t" style="left:2925.0px;top:836.0px;line-height:26px;font-size:21px;font-weight:400;color:#000;">14. Jul. 25</div>
<div class="t" style="left:3071.7px;top:836.0px;line-height:26px;font-size:21px;font-weight:400;color:#000;">12:14</div>
<div class="t" style="right:566.0px;top:836.0px;line-height:26px;font-size:21px;font-weight:400;color:#000;">0,28 kb</div>
<div style="left:1772.0px;top:873.5px;width:17.5px;height:17.5px;background:#f0f0f0;border:1px solid #8a8a8a;box-sizing:border-box"></div>
<svg style="left:1803.0px;top:868.5px" width="24.0" height="26.0" viewBox="0 0 24 26"><path d="M3.5 1.5 H15 L20.5 7 V24.5 H3.5Z" fill="#fff" stroke="#222" stroke-width="1.5" stroke-linejoin="round"/><path d="M15 1.5 V7 H20.5" fill="none" stroke="#222" stroke-width="1.3"/></svg>
<div class="t" style="left:1834.0px;top:871.0px;line-height:26px;font-size:21.2px;font-weight:400;color:#000;">TestX.hdb</div>
<div class="t" style="left:2694.0px;top:871.0px;line-height:26px;font-size:21px;font-weight:400;color:#000;">.hdb</div>
<div class="t" style="left:2895.0px;top:871.0px;line-height:26px;font-size:21px;font-weight:400;color:#000;letter-spacing:-1.3px">Mo</div>
<div class="t" style="left:2925.0px;top:871.0px;line-height:26px;font-size:21px;font-weight:400;color:#000;">07. Jul. 25</div>
<div class="t" style="left:3071.7px;top:871.0px;line-height:26px;font-size:21px;font-weight:400;color:#000;">22:26</div>
<div class="t" style="right:566.0px;top:871.0px;line-height:26px;font-size:21px;font-weight:400;color:#000;">1 kb</div>
<div style="left:1772.0px;top:908.5px;width:17.5px;height:17.5px;background:#f0f0f0;border:1px solid #8a8a8a;box-sizing:border-box"></div>
<svg style="left:1803.0px;top:903.5px" width="24.0" height="26.0" viewBox="0 0 24 26"><path d="M3.5 1.5 H15 L20.5 7 V24.5 H3.5Z" fill="#fff" stroke="#222" stroke-width="1.5" stroke-linejoin="round"/><path d="M15 1.5 V7 H20.5" fill="none" stroke="#222" stroke-width="1.3"/></svg>
<div class="t" style="left:1834.0px;top:906.0px;line-height:26px;font-size:21.2px;font-weight:400;color:#000;">TestX.BAK</div>
<div class="t" style="left:2694.0px;top:906.0px;line-height:26px;font-size:21px;font-weight:400;color:#000;">.BAK</div>
<div class="t" style="left:2895.0px;top:906.0px;line-height:26px;font-size:21px;font-weight:400;color:#000;letter-spacing:-1.3px">Mo</div>
<div class="t" style="left:2925.0px;top:906.0px;line-height:26px;font-size:21px;font-weight:400;color:#000;">07. Jul. 25</div>
<div class="t" style="left:3071.7px;top:906.0px;line-height:26px;font-size:21px;font-weight:400;color:#000;">22:25</div>
<div class="t" style="right:566.0px;top:906.0px;line-height:26px;font-size:21px;font-weight:400;color:#000;">1 kb</div>
<div style="left:1772.0px;top:943.5px;width:17.5px;height:17.5px;background:#f0f0f0;border:1px solid #8a8a8a;box-sizing:border-box"></div>
<svg style="left:1800.0px;top:937.5px" width="28.0" height="28.0" viewBox="0 0 28 28"><path d="M3 2 H20 L26 8 V27 H3Z" fill="#e8e8e8" stroke="#222" stroke-width="2"/><path d="M20 2 V8 H26" fill="#fff" stroke="#222" stroke-width="1.2"/><rect x="0" y="4" width="16" height="5" fill="#e53b2c" stroke="#7a1a10" stroke-width="0.8"/><path d="M20 1 L26 7" stroke="#e53b2c" stroke-width="2"/><path d="M6 24 Q11 8 13 20 Q15 12 23 23" stroke="#999" fill="none" stroke-width="1.3"/></svg>
<div class="t" style="left:1834.0px;top:941.0px;line-height:26px;font-size:21.2px;font-weight:400;color:#000;">SBescheid2021_1.pdf</div>
<div class="t" style="left:2694.0px;top:941.0px;line-height:26px;font-size:21px;font-weight:400;color:#000;">.pdf</div>
<div class="t" style="left:2895.0px;top:941.0px;line-height:26px;font-size:21px;font-weight:400;color:#000;letter-spacing:-1.3px">Mo</div>
<div class="t" style="left:2925.0px;top:941.0px;line-height:26px;font-size:21px;font-weight:400;color:#000;">07. Jul. 25</div>
<div class="t" style="left:3071.7px;top:941.0px;line-height:26px;font-size:21px;font-weight:400;color:#000;">10:01</div>
<div class="t" style="right:566.0px;top:941.0px;line-height:26px;font-size:21px;font-weight:400;color:#000;">399 kb</div>
<div style="left:1772.0px;top:978.5px;width:17.5px;height:17.5px;background:#f0f0f0;border:1px solid #8a8a8a;box-sizing:border-box"></div>
<svg style="left:1800.0px;top:972.5px" width="28.0" height="28.0" viewBox="0 0 28 28"><path d="M3 2 H20 L26 8 V27 H3Z" fill="#e8e8e8" stroke="#222" stroke-width="2"/><path d="M20 2 V8 H26" fill="#fff" stroke="#222" stroke-width="1.2"/><rect x="0" y="4" width="16" height="5" fill="#e53b2c" stroke="#7a1a10" stroke-width="0.8"/><path d="M20 1 L26 7" stroke="#e53b2c" stroke-width="2"/><path d="M6 24 Q11 8 13 20 Q15 12 23 23" stroke="#999" fill="none" stroke-width="1.3"/></svg>
<div class="t" style="left:1834.0px;top:976.0px;line-height:26px;font-size:21.2px;font-weight:400;color:#000;">SBescheid2023.pdf</div>
<div class="t" style="left:2694.0px;top:976.0px;line-height:26px;font-size:21px;font-weight:400;color:#000;">.pdf</div>
<div class="t" style="left:2895.0px;top:976.0px;line-height:26px;font-size:21px;font-weight:400;color:#000;letter-spacing:-1.3px">Mo</div>
<div class="t" style="left:2925.0px;top:976.0px;line-height:26px;font-size:21px;font-weight:400;color:#000;">07. Jul. 25</div>
<div class="t" style="left:3071.7px;top:976.0px;line-height:26px;font-size:21px;font-weight:400;color:#000;">09:49</div>
<div class="t" style="right:566.0px;top:976.0px;line-height:26px;font-size:21px;font-weight:400;color:#000;">290 kb</div>
<div style="left:1772.0px;top:1013.5px;width:17.5px;height:17.5px;background:#f0f0f0;border:1px solid #8a8a8a;box-sizing:border-box"></div>
<svg style="left:1800.0px;top:1007.5px" width="28.0" height="28.0" viewBox="0 0 28 28"><path d="M3 2 H20 L26 8 V27 H3Z" fill="#e8e8e8" stroke="#222" stroke-width="2"/><path d="M20 2 V8 H26" fill="#fff" stroke="#222" stroke-width="1.2"/><rect x="0" y="4" width="16" height="5" fill="#e53b2c" stroke="#7a1a10" stroke-width="0.8"/><path d="M20 1 L26 7" stroke="#e53b2c" stroke-width="2"/><path d="M6 24 Q11 8 13 20 Q15 12 23 23" stroke="#999" fill="none" stroke-width="1.3"/></svg>
<div class="t" style="left:1834.0px;top:1011.0px;line-height:26px;font-size:21.2px;font-weight:400;color:#000;">SBescheid2022.pdf</div>
<div class="t" style="left:2694.0px;top:1011.0px;line-height:26px;font-size:21px;font-weight:400;color:#000;">.pdf</div>
<div class="t" style="left:2895.0px;top:1011.0px;line-height:26px;font-size:21px;font-weight:400;color:#000;letter-spacing:-1.3px">Mo</div>
<div class="t" style="left:2925.0px;top:1011.0px;line-height:26px;font-size:21px;font-weight:400;color:#000;">07. Jul. 25</div>
<div class="t" style="left:3071.7px;top:1011.0px;line-height:26px;font-size:21px;font-weight:400;color:#000;">09:46</div>
<div class="t" style="right:566.0px;top:1011.0px;line-height:26px;font-size:21px;font-weight:400;color:#000;">238 kb</div>
<div style="left:1772.0px;top:1048.5px;width:17.5px;height:17.5px;background:#f0f0f0;border:1px solid #8a8a8a;box-sizing:border-box"></div>
<svg style="left:1800.0px;top:1042.5px" width="28.0" height="28.0" viewBox="0 0 28 28"><path d="M1 3 V26" stroke="#aaa" stroke-width="1"/><rect x="3" y="2" width="23" height="24" rx="1" fill="#fff" stroke="#666" stroke-width="1.5"/><path d="M5 23 V17 Q10 14 14 18 T24 18 V23Z" fill="#3cb38a"/><circle cx="20" cy="8" r="2.5" fill="#f5a623"/></svg>
<div class="t" style="left:1834.0px;top:1046.0px;line-height:26px;font-size:21.2px;font-weight:400;color:#000;">PPMEPlugIn.png</div>
<div class="t" style="left:2694.0px;top:1046.0px;line-height:26px;font-size:21px;font-weight:400;color:#000;">.png</div>
<div class="t" style="left:2895.0px;top:1046.0px;line-height:26px;font-size:21px;font-weight:400;color:#000;letter-spacing:-1.3px">Mo</div>
<div class="t" style="left:2925.0px;top:1046.0px;line-height:26px;font-size:21px;font-weight:400;color:#000;">16. Jun. 25</div>
<div class="t" style="left:3071.7px;top:1046.0px;line-height:26px;font-size:21px;font-weight:400;color:#000;">18:54</div>
<div class="t" style="right:566.0px;top:1046.0px;line-height:26px;font-size:21px;font-weight:400;color:#000;">829 kb</div>
<div style="left:1772.0px;top:1083.5px;width:17.5px;height:17.5px;background:#f0f0f0;border:1px solid #8a8a8a;box-sizing:border-box"></div>
<svg style="left:1803.0px;top:1078.5px" width="24.0" height="26.0" viewBox="0 0 24 26"><path d="M3.5 1.5 H15 L20.5 7 V24.5 H3.5Z" fill="#fff" stroke="#222" stroke-width="1.5" stroke-linejoin="round"/><path d="M15 1.5 V7 H20.5" fill="none" stroke="#222" stroke-width="1.3"/><rect x="7" y="10.0" width="10" height="1.6" fill="#2a2aa8"/><rect x="7" y="13.3" width="8" height="1.6" fill="#2a2aa8"/><rect x="7" y="16.6" width="10" height="1.6" fill="#2a2aa8"/><rect x="7" y="19.9" width="8" height="1.6" fill="#2a2aa8"/></svg>
<div class="t" style="left:1834.0px;top:1081.0px;line-height:26px;font-size:21.2px;font-weight:400;color:#000;">Solaria1.txt</div>
<div class="t" style="left:2694.0px;top:1081.0px;line-height:26px;font-size:21px;font-weight:400;color:#000;">.txt</div>
<div class="t" style="left:2895.0px;top:1081.0px;line-height:26px;font-size:21px;font-weight:400;color:#000;letter-spacing:-0.4px">So</div>
<div class="t" style="left:2925.0px;top:1081.0px;line-height:26px;font-size:21px;font-weight:400;color:#000;">15. Jun. 25</div>
<div class="t" style="left:3071.7px;top:1081.0px;line-height:26px;font-size:21px;font-weight:400;color:#000;">13:17</div>
<div class="t" style="right:566.0px;top:1081.0px;line-height:26px;font-size:21px;font-weight:400;color:#000;">0,02 kb</div>
<div style="left:1772.0px;top:1118.5px;width:17.5px;height:17.5px;background:#f0f0f0;border:1px solid #8a8a8a;box-sizing:border-box"></div>
<svg style="left:1800.0px;top:1112.5px" width="28.0" height="28.0" viewBox="0 0 28 28"><path d="M3 2 H20 L26 8 V27 H3Z" fill="#e8e8e8" stroke="#222" stroke-width="2"/><path d="M20 2 V8 H26" fill="#fff" stroke="#222" stroke-width="1.2"/><rect x="0" y="4" width="16" height="5" fill="#e53b2c" stroke="#7a1a10" stroke-width="0.8"/><path d="M20 1 L26 7" stroke="#e53b2c" stroke-width="2"/><path d="M6 24 Q11 8 13 20 Q15 12 23 23" stroke="#999" fill="none" stroke-width="1.3"/></svg>
<div class="t" style="left:1834.0px;top:1116.0px;line-height:26px;font-size:21.2px;font-weight:400;color:#000;">Allgemein.pdf</div>
<div class="t" style="left:2694.0px;top:1116.0px;line-height:26px;font-size:21px;font-weight:400;color:#000;">.pdf</div>
<div class="t" style="left:2895.0px;top:1116.0px;line-height:26px;font-size:21px;font-weight:400;color:#000;letter-spacing:-0.4px">So</div>
<div class="t" style="left:2925.0px;top:1116.0px;line-height:26px;font-size:21px;font-weight:400;color:#000;">08. Jun. 25</div>
<div class="t" style="left:3071.7px;top:1116.0px;line-height:26px;font-size:21px;font-weight:400;color:#000;">13:15</div>
<div class="t" style="right:566.0px;top:1116.0px;line-height:26px;font-size:21px;font-weight:400;color:#000;">9 kb</div>
<div style="left:1772.0px;top:1153.5px;width:17.5px;height:17.5px;background:#f0f0f0;border:1px solid #8a8a8a;box-sizing:border-box"></div>
<svg style="left:1800.0px;top:1147.5px" width="28.0" height="28.0" viewBox="0 0 28 28"><path d="M3 2 H20 L26 8 V27 H3Z" fill="#e8e8e8" stroke="#222" stroke-width="2"/><path d="M20 2 V8 H26" fill="#fff" stroke="#222" stroke-width="1.2"/><rect x="0" y="4" width="16" height="5" fill="#e53b2c" stroke="#7a1a10" stroke-width="0.8"/><path d="M20 1 L26 7" stroke="#e53b2c" stroke-width="2"/><path d="M6 24 Q11 8 13 20 Q15 12 23 23" stroke="#999" fill="none" stroke-width="1.3"/></svg>
<div class="t" style="left:1834.0px;top:1151.0px;line-height:26px;font-size:21.2px;font-weight:400;color:#000;">Vorbereitung.pdf</div>
<div class="t" style="left:2694.0px;top:1151.0px;line-height:26px;font-size:21px;font-weight:400;color:#000;">.pdf</div>
<div class="t" style="left:2895.0px;top:1151.0px;line-height:26px;font-size:21px;font-weight:400;color:#000;letter-spacing:-0.4px">So</div>
<div class="t" style="left:2925.0px;top:1151.0px;line-height:26px;font-size:21px;font-weight:400;color:#000;">08. Jun. 25</div>
<div class="t" style="left:3071.7px;top:1151.0px;line-height:26px;font-size:21px;font-weight:400;color:#000;">13:13</div>
<div class="t" style="right:566.0px;top:1151.0px;line-height:26px;font-size:21px;font-weight:400;color:#000;">9 kb</div>
<div style="left:1772.0px;top:1188.5px;width:17.5px;height:17.5px;background:#f0f0f0;border:1px solid #8a8a8a;box-sizing:border-box"></div>
<svg style="left:1800.0px;top:1182.5px" width="28.0" height="28.0" viewBox="0 0 28 28"><path d="M3 2 H20 L26 8 V27 H3Z" fill="#e8e8e8" stroke="#222" stroke-width="2"/><path d="M20 2 V8 H26" fill="#fff" stroke="#222" stroke-width="1.2"/><rect x="0" y="4" width="16" height="5" fill="#e53b2c" stroke="#7a1a10" stroke-width="0.8"/><path d="M20 1 L26 7" stroke="#e53b2c" stroke-width="2"/><path d="M6 24 Q11 8 13 20 Q15 12 23 23" stroke="#999" fill="none" stroke-width="1.3"/></svg>
<div class="t" style="left:1834.0px;top:1186.0px;line-height:26px;font-size:21.2px;font-weight:400;color:#000;">GuestPortal_Holland.pdf</div>
<div class="t" style="left:2694.0px;top:1186.0px;line-height:26px;font-size:21px;font-weight:400;color:#000;">.pdf</div>
<div class="t" style="left:2895.0px;top:1186.0px;line-height:26px;font-size:21px;font-weight:400;color:#000;letter-spacing:-0.4px">So</div>
<div class="t" style="left:2925.0px;top:1186.0px;line-height:26px;font-size:21px;font-weight:400;color:#000;">08. Jun. 25</div>
<div class="t" style="left:3071.7px;top:1186.0px;line-height:26px;font-size:21px;font-weight:400;color:#000;">11:51</div>
<div class="t" style="right:566.0px;top:1186.0px;line-height:26px;font-size:21px;font-weight:400;color:#000;">2,72 MB</div>
<div style="left:1772.0px;top:1223.5px;width:17.5px;height:17.5px;background:#f0f0f0;border:1px solid #8a8a8a;box-sizing:border-box"></div>
<svg style="left:1803.0px;top:1218.5px" width="24.0" height="26.0" viewBox="0 0 24 26"><path d="M3.5 1.5 H15 L20.5 7 V24.5 H3.5Z" fill="#fff" stroke="#222" stroke-width="1.5" stroke-linejoin="round"/><path d="M15 1.5 V7 H20.5" fill="none" stroke="#222" stroke-width="1.3"/><rect x="7" y="10.0" width="10" height="1.6" fill="#2a2aa8"/><rect x="7" y="13.3" width="8" height="1.6" fill="#2a2aa8"/><rect x="7" y="16.6" width="10" height="1.6" fill="#2a2aa8"/><rect x="7" y="19.9" width="8" height="1.6" fill="#2a2aa8"/></svg>
<div class="t" style="left:1834.0px;top:1221.0px;line-height:26px;font-size:21.2px;font-weight:400;color:#000;">FarAwayFromHome.txt</div>
<div class="t" style="left:2694.0px;top:1221.0px;line-height:26px;font-size:21px;font-weight:400;color:#000;">.txt</div>
<div class="t" style="left:2895.0px;top:1221.0px;line-height:26px;font-size:21px;font-weight:400;color:#000;letter-spacing:-0.4px">Di</div>
<div class="t" style="left:2925.0px;top:1221.0px;line-height:26px;font-size:21px;font-weight:400;color:#000;">03. Jun. 25</div>
<div class="t" style="left:3071.7px;top:1221.0px;line-height:26px;font-size:21px;font-weight:400;color:#000;">23:51</div>
<div class="t" style="right:566.0px;top:1221.0px;line-height:26px;font-size:21px;font-weight:400;color:#000;">0,91 kb</div>
<div style="left:1772.0px;top:1258.5px;width:17.5px;height:17.5px;background:#f0f0f0;border:1px solid #8a8a8a;box-sizing:border-box"></div>
<svg style="left:1800.0px;top:1252.5px" width="28.0" height="28.0" viewBox="0 0 28 28"><path d="M1 3 V26" stroke="#aaa" stroke-width="1"/><rect x="3" y="2" width="23" height="24" rx="1" fill="#fff" stroke="#666" stroke-width="1.5"/><path d="M5 23 V17 Q10 14 14 18 T24 18 V23Z" fill="#3cb38a"/><circle cx="20" cy="8" r="2.5" fill="#f5a623"/></svg>
<div class="t" style="left:1834.0px;top:1256.0px;line-height:26px;font-size:21.2px;font-weight:400;color:#000;">FormError.png</div>
<div class="t" style="left:2694.0px;top:1256.0px;line-height:26px;font-size:21px;font-weight:400;color:#000;">.png</div>
<div class="t" style="left:2895.0px;top:1256.0px;line-height:26px;font-size:21px;font-weight:400;color:#000;letter-spacing:-1.3px">Mo</div>
<div class="t" style="left:2925.0px;top:1256.0px;line-height:26px;font-size:21px;font-weight:400;color:#000;">02. Jun. 25</div>
<div class="t" style="left:3071.7px;top:1256.0px;line-height:26px;font-size:21px;font-weight:400;color:#000;">11:16</div>
<div class="t" style="right:566.0px;top:1256.0px;line-height:26px;font-size:21px;font-weight:400;color:#000;">108 kb</div>
<div style="left:1772.0px;top:1293.5px;width:17.5px;height:17.5px;background:#f0f0f0;border:1px solid #8a8a8a;box-sizing:border-box"></div>
<svg style="left:1800.0px;top:1287.5px" width="28.0" height="28.0" viewBox="0 0 28 28"><rect x="3" y="2" width="23" height="24" rx="1" fill="#fff" stroke="#666" stroke-width="1.5"/><rect x="5" y="5" width="19" height="18" fill="#d8e8f8"/><path d="M5 23 V16 L10 11 L15 17 L19 13 L24 18 V23Z" fill="#2a6bc2"/><circle cx="11" cy="8" r="2.5" fill="#2a6bc2"/></svg>
<div class="t" style="left:1834.0px;top:1291.0px;line-height:26px;font-size:21.2px;font-weight:400;color:#000;">RetourBeleg.jpg</div>
<div class="t" style="left:2694.0px;top:1291.0px;line-height:26px;font-size:21px;font-weight:400;color:#000;">.jpg</div>
<div class="t" style="left:2895.0px;top:1291.0px;line-height:26px;font-size:21px;font-weight:400;color:#000;letter-spacing:-0.4px">Do</div>
<div class="t" style="left:2925.0px;top:1291.0px;line-height:26px;font-size:21px;font-weight:400;color:#000;">08. Mai. 25</div>
<div class="t" style="left:3071.7px;top:1291.0px;line-height:26px;font-size:21px;font-weight:400;color:#000;">16:27</div>
<div class="t" style="right:566.0px;top:1291.0px;line-height:26px;font-size:21px;font-weight:400;color:#000;">177 kb</div>
<div style="left:1772.0px;top:1328.5px;width:17.5px;height:17.5px;background:#f0f0f0;border:1px solid #8a8a8a;box-sizing:border-box"></div>
<svg style="left:1800.0px;top:1322.5px" width="28.0" height="28.0" viewBox="0 0 28 28"><rect x="3" y="2" width="23" height="24" rx="1" fill="#fff" stroke="#666" stroke-width="1.5"/><rect x="5" y="5" width="19" height="18" fill="#d8e8f8"/><path d="M5 23 V16 L10 11 L15 17 L19 13 L24 18 V23Z" fill="#2a6bc2"/><circle cx="11" cy="8" r="2.5" fill="#2a6bc2"/></svg>
<div class="t" style="left:1834.0px;top:1326.0px;line-height:26px;font-size:21.2px;font-weight:400;color:#000;">Bestellt-Foto.jpg</div>
<div class="t" style="left:2694.0px;top:1326.0px;line-height:26px;font-size:21px;font-weight:400;color:#000;">.jpg</div>
<div class="t" style="left:2895.0px;top:1326.0px;line-height:26px;font-size:21px;font-weight:400;color:#000;letter-spacing:-0.4px">Mi</div>
<div class="t" style="left:2925.0px;top:1326.0px;line-height:26px;font-size:21px;font-weight:400;color:#000;">07. Mai. 25</div>
<div class="t" style="left:3071.7px;top:1326.0px;line-height:26px;font-size:21px;font-weight:400;color:#000;">16:51</div>
<div class="t" style="right:566.0px;top:1326.0px;line-height:26px;font-size:21px;font-weight:400;color:#000;">344 kb</div>
<div style="left:1772.0px;top:1363.5px;width:17.5px;height:17.5px;background:#f0f0f0;border:1px solid #8a8a8a;box-sizing:border-box"></div>
<svg style="left:1800.0px;top:1357.5px" width="28.0" height="28.0" viewBox="0 0 28 28"><path d="M1 3 V26" stroke="#aaa" stroke-width="1"/><rect x="3" y="2" width="23" height="24" rx="1" fill="#fff" stroke="#666" stroke-width="1.5"/><path d="M5 23 V17 Q10 14 14 18 T24 18 V23Z" fill="#3cb38a"/><circle cx="20" cy="8" r="2.5" fill="#f5a623"/></svg>
<div class="t" style="left:1834.0px;top:1361.0px;line-height:26px;font-size:21.2px;font-weight:400;color:#000;">Ruecksende-Quittung.png</div>
<div class="t" style="left:2694.0px;top:1361.0px;line-height:26px;font-size:21px;font-weight:400;color:#000;">.png</div>
<div class="t" style="left:2895.0px;top:1361.0px;line-height:26px;font-size:21px;font-weight:400;color:#000;letter-spacing:-0.4px">Sa</div>
<div class="t" style="left:2925.0px;top:1361.0px;line-height:26px;font-size:21px;font-weight:400;color:#000;">19. Apr. 25</div>
<div class="t" style="left:3071.7px;top:1361.0px;line-height:26px;font-size:21px;font-weight:400;color:#000;">12:41</div>
<div class="t" style="right:566.0px;top:1361.0px;line-height:26px;font-size:21px;font-weight:400;color:#000;">1,34 MB</div>
<div style="left:1772.0px;top:1398.5px;width:17.5px;height:17.5px;background:#f0f0f0;border:1px solid #8a8a8a;box-sizing:border-box"></div>
<svg style="left:1800.0px;top:1392.5px" width="28.0" height="28.0" viewBox="0 0 28 28"><path d="M3 2 H20 L26 8 V27 H3Z" fill="#e8e8e8" stroke="#222" stroke-width="2"/><path d="M20 2 V8 H26" fill="#fff" stroke="#222" stroke-width="1.2"/><rect x="0" y="4" width="16" height="5" fill="#e53b2c" stroke="#7a1a10" stroke-width="0.8"/><path d="M20 1 L26 7" stroke="#e53b2c" stroke-width="2"/><path d="M6 24 Q11 8 13 20 Q15 12 23 23" stroke="#999" fill="none" stroke-width="1.3"/></svg>
<div class="t" style="left:1834.0px;top:1396.0px;line-height:26px;font-size:21.2px;font-weight:400;color:#000;">Return label - Harry Stahl.pdf</div>
<div class="t" style="left:2694.0px;top:1396.0px;line-height:26px;font-size:21px;font-weight:400;color:#000;">.pdf</div>
<div class="t" style="left:2895.0px;top:1396.0px;line-height:26px;font-size:21px;font-weight:400;color:#000;letter-spacing:-0.4px">Sa</div>
<div class="t" style="left:2925.0px;top:1396.0px;line-height:26px;font-size:21px;font-weight:400;color:#000;">19. Apr. 25</div>
<div class="t" style="left:3071.7px;top:1396.0px;line-height:26px;font-size:21px;font-weight:400;color:#000;">11:52</div>
<div class="t" style="right:566.0px;top:1396.0px;line-height:26px;font-size:21px;font-weight:400;color:#000;">41 kb</div>
<div style="left:1772.0px;top:1433.5px;width:17.5px;height:17.5px;background:#f0f0f0;border:1px solid #8a8a8a;box-sizing:border-box"></div>
<svg style="left:1800.0px;top:1427.5px" width="28.0" height="28.0" viewBox="0 0 28 28"><path d="M1 3 V26" stroke="#aaa" stroke-width="1"/><rect x="3" y="2" width="23" height="24" rx="1" fill="#fff" stroke="#666" stroke-width="1.5"/><path d="M5 23 V17 Q10 14 14 18 T24 18 V23Z" fill="#3cb38a"/><circle cx="20" cy="8" r="2.5" fill="#f5a623"/></svg>
<div class="t" style="left:1834.0px;top:1431.0px;line-height:26px;font-size:21.2px;font-weight:400;color:#000;">Return label - Harry Stahl.png</div>
<div class="t" style="left:2694.0px;top:1431.0px;line-height:26px;font-size:21px;font-weight:400;color:#000;">.png</div>
<div class="t" style="left:2895.0px;top:1431.0px;line-height:26px;font-size:21px;font-weight:400;color:#000;letter-spacing:-0.4px">Sa</div>
<div class="t" style="left:2925.0px;top:1431.0px;line-height:26px;font-size:21px;font-weight:400;color:#000;">19. Apr. 25</div>
<div class="t" style="left:3071.7px;top:1431.0px;line-height:26px;font-size:21px;font-weight:400;color:#000;">11:24</div>
<div class="t" style="right:566.0px;top:1431.0px;line-height:26px;font-size:21px;font-weight:400;color:#000;">116 kb</div>
<div style="left:1772.0px;top:1468.5px;width:17.5px;height:17.5px;background:#f0f0f0;border:1px solid #8a8a8a;box-sizing:border-box"></div>
<svg style="left:1803.0px;top:1463.5px" width="24.0" height="26.0" viewBox="0 0 24 26"><path d="M3.5 1.5 H15 L20.5 7 V24.5 H3.5Z" fill="#fff" stroke="#222" stroke-width="1.5" stroke-linejoin="round"/><path d="M15 1.5 V7 H20.5" fill="none" stroke="#222" stroke-width="1.3"/></svg>
<div class="t" style="left:1834.0px;top:1466.0px;line-height:26px;font-size:21.2px;font-weight:400;color:#000;">PhoneJournal.dat</div>
<div class="t" style="left:2694.0px;top:1466.0px;line-height:26px;font-size:21px;font-weight:400;color:#000;">.dat</div>
<div class="t" style="left:2895.0px;top:1466.0px;line-height:26px;font-size:21px;font-weight:400;color:#000;letter-spacing:-0.4px">So</div>
<div class="t" style="left:2925.0px;top:1466.0px;line-height:26px;font-size:21px;font-weight:400;color:#000;">06. Apr. 25</div>
<div class="t" style="left:3071.7px;top:1466.0px;line-height:26px;font-size:21px;font-weight:400;color:#000;">12:12</div>
<div class="t" style="right:566.0px;top:1466.0px;line-height:26px;font-size:21px;font-weight:400;color:#000;">164 kb</div>
<div style="left:1772.0px;top:1503.5px;width:17.5px;height:17.5px;background:#f0f0f0;border:1px solid #8a8a8a;box-sizing:border-box"></div>
<svg style="left:1800.0px;top:1497.5px" width="28.0" height="28.0" viewBox="0 0 28 28"><path d="M3 2 H20 L26 8 V27 H3Z" fill="#e8e8e8" stroke="#222" stroke-width="2"/><path d="M20 2 V8 H26" fill="#fff" stroke="#222" stroke-width="1.2"/><rect x="0" y="4" width="16" height="5" fill="#e53b2c" stroke="#7a1a10" stroke-width="0.8"/><path d="M20 1 L26 7" stroke="#e53b2c" stroke-width="2"/><path d="M6 24 Q11 8 13 20 Q15 12 23 23" stroke="#999" fill="none" stroke-width="1.3"/></svg>
<div class="t" style="left:1834.0px;top:1501.0px;line-height:26px;font-size:21.2px;font-weight:400;color:#000;">Dosen.pdf</div>
<div class="t" style="left:2694.0px;top:1501.0px;line-height:26px;font-size:21px;font-weight:400;color:#000;">.pdf</div>
<div class="t" style="left:2895.0px;top:1501.0px;line-height:26px;font-size:21px;font-weight:400;color:#000;letter-spacing:-0.4px">Fr</div>
<div class="t" style="left:2925.0px;top:1501.0px;line-height:26px;font-size:21px;font-weight:400;color:#000;">04. Apr. 25</div>
<div class="t" style="left:3071.7px;top:1501.0px;line-height:26px;font-size:21px;font-weight:400;color:#000;">09:55</div>
<div class="t" style="right:566.0px;top:1501.0px;line-height:26px;font-size:21px;font-weight:400;color:#000;">154 kb</div>
<div style="left:1799.3px;top:1530.7px;width:1500.0px;height:33.5px;background:#0078d7"></div>
<div style="left:1772.0px;top:1538.5px;width:17.5px;height:17.5px;background:#0a66c2;border:1px solid #0a5bb0;border-radius:3px;box-sizing:border-box"></div>
<svg style="left:1772.0px;top:1538.5px" width="17.5" height="17.5" viewBox="0 0 17.5 17.5"><path d="M4.5 9 L7.5 12 L13 6" stroke="#dff" stroke-width="1.1" fill="none"/></svg>
<svg style="left:1800.0px;top:1532.5px" width="28.0" height="28.0" viewBox="0 0 28 28"><path d="M1 3 V26" stroke="#aaa" stroke-width="1"/><rect x="3" y="2" width="23" height="24" rx="1" fill="#fff" stroke="#666" stroke-width="1.5"/><path d="M5 23 V17 Q10 14 14 18 T24 18 V23Z" fill="#3cb38a"/><circle cx="20" cy="8" r="2.5" fill="#f5a623"/></svg>
<div class="t" style="left:1834.0px;top:1536.0px;line-height:26px;font-size:21.2px;font-weight:400;color:#fff;">Kueche.png</div>
<div class="t" style="left:2694.0px;top:1536.0px;line-height:26px;font-size:21px;font-weight:400;color:#fff;">.png</div>
<div class="t" style="left:2895.0px;top:1536.0px;line-height:26px;font-size:21px;font-weight:400;color:#fff;letter-spacing:-1.3px">Mo</div>
<div class="t" style="left:2925.0px;top:1536.0px;line-height:26px;font-size:21px;font-weight:400;color:#fff;">31. Mrz. 25</div>
<div class="t" style="left:3071.7px;top:1536.0px;line-height:26px;font-size:21px;font-weight:400;color:#fff;">17:44</div>
<div class="t" style="right:566.0px;top:1536.0px;line-height:26px;font-size:21px;font-weight:400;color:#fff;">3,28 MB</div>
<div style="left:1772.0px;top:1573.5px;width:17.5px;height:17.5px;background:#f0f0f0;border:1px solid #8a8a8a;box-sizing:border-box"></div>
<svg style="left:1800.0px;top:1567.5px" width="28.0" height="28.0" viewBox="0 0 28 28"><rect x="3" y="2" width="23" height="24" rx="1" fill="#fff" stroke="#666" stroke-width="1.5"/><rect x="5" y="5" width="19" height="18" fill="#d8e8f8"/><path d="M5 23 V16 L10 11 L15 17 L19 13 L24 18 V23Z" fill="#2a6bc2"/><circle cx="11" cy="8" r="2.5" fill="#2a6bc2"/></svg>
<div class="t" style="left:1834.0px;top:1571.0px;line-height:26px;font-size:21.2px;font-weight:400;color:#000;">Kueche.jpg</div>
<div class="t" style="left:2694.0px;top:1571.0px;line-height:26px;font-size:21px;font-weight:400;color:#000;">.jpg</div>
<div class="t" style="left:2895.0px;top:1571.0px;line-height:26px;font-size:21px;font-weight:400;color:#000;letter-spacing:-1.3px">Mo</div>
<div class="t" style="left:2925.0px;top:1571.0px;line-height:26px;font-size:21px;font-weight:400;color:#000;">31. Mrz. 25</div>
<div class="t" style="left:3071.7px;top:1571.0px;line-height:26px;font-size:21px;font-weight:400;color:#000;">17:44</div>
<div class="t" style="right:566.0px;top:1571.0px;line-height:26px;font-size:21px;font-weight:400;color:#000;">1,58 MB</div>
<div style="left:1772.0px;top:1608.5px;width:17.5px;height:17.5px;background:#f0f0f0;border:1px solid #8a8a8a;box-sizing:border-box"></div>
<svg style="left:1800.0px;top:1602.5px" width="28.0" height="28.0" viewBox="0 0 28 28"><rect x="0" y="0" width="28" height="28" fill="#e3a01b"/><text x="14" y="19" font-family="Liberation Sans" font-size="14" font-weight="700" fill="#fff" text-anchor="middle">PD</text></svg>
<div class="t" style="left:1834.0px;top:1606.0px;line-height:26px;font-size:21.2px;font-weight:400;color:#000;text-decoration:underline;">FILEIOVERSIONING.xdabase</div>
<div class="t" style="left:2694.0px;top:1606.0px;line-height:26px;font-size:21px;font-weight:400;color:#000;text-decoration:underline;">.xdabase</div>
<div class="t" style="left:2895.0px;top:1606.0px;line-height:26px;font-size:21px;font-weight:400;color:#000;text-decoration:underline;letter-spacing:-0.4px">Sa</div>
<div class="t" style="left:2925.0px;top:1606.0px;line-height:26px;font-size:21px;font-weight:400;color:#000;text-decoration:underline;">29. Mrz. 25</div>
<div class="t" style="left:3071.7px;top:1606.0px;line-height:26px;font-size:21px;font-weight:400;color:#000;text-decoration:underline;">16:15</div>
<div class="t" style="right:566.0px;top:1606.0px;line-height:26px;font-size:21px;font-weight:400;color:#000;text-decoration:underline;">70,89 MB</div>
<div style="left:1772.0px;top:1643.5px;width:17.5px;height:17.5px;background:#f0f0f0;border:1px solid #8a8a8a;box-sizing:border-box"></div>
<svg style="left:1800.0px;top:1637.5px" width="28.0" height="28.0" viewBox="0 0 28 28"><path d="M1 3 V26" stroke="#aaa" stroke-width="1"/><rect x="3" y="2" width="23" height="24" rx="1" fill="#fff" stroke="#666" stroke-width="1.5"/><path d="M5 23 V17 Q10 14 14 18 T24 18 V23Z" fill="#3cb38a"/><circle cx="20" cy="8" r="2.5" fill="#f5a623"/></svg>
<div class="t" style="left:1834.0px;top:1641.0px;line-height:26px;font-size:21.2px;font-weight:400;color:#000;">Umsatzsteuer.png</div>
<div class="t" style="left:2694.0px;top:1641.0px;line-height:26px;font-size:21px;font-weight:400;color:#000;">.png</div>
<div class="t" style="left:2895.0px;top:1641.0px;line-height:26px;font-size:21px;font-weight:400;color:#000;letter-spacing:-0.4px">Di</div>
<div class="t" style="left:2925.0px;top:1641.0px;line-height:26px;font-size:21px;font-weight:400;color:#000;">18. Mrz. 25</div>
<div class="t" style="left:3071.7px;top:1641.0px;line-height:26px;font-size:21px;font-weight:400;color:#000;">17:54</div>
<div class="t" style="right:566.0px;top:1641.0px;line-height:26px;font-size:21px;font-weight:400;color:#000;">104 kb</div>
<div style="left:1772.0px;top:1678.5px;width:17.5px;height:17.5px;background:#f0f0f0;border:1px solid #8a8a8a;box-sizing:border-box"></div>
<svg style="left:1803.0px;top:1673.5px" width="24.0" height="26.0" viewBox="0 0 24 26"><path d="M3.5 1.5 H15 L20.5 7 V24.5 H3.5Z" fill="#fff" stroke="#222" stroke-width="1.5" stroke-linejoin="round"/><path d="M15 1.5 V7 H20.5" fill="none" stroke="#222" stroke-width="1.3"/></svg>
<div class="t" style="left:1834.0px;top:1676.0px;line-height:26px;font-size:21.2px;font-weight:400;color:#000;">Einnahmen-Amazon-2024.spreads</div>
<div class="t" style="left:2694.0px;top:1676.0px;line-height:26px;font-size:21px;font-weight:400;color:#000;">.spreads</div>
<div class="t" style="left:2895.0px;top:1676.0px;line-height:26px;font-size:21px;font-weight:400;color:#000;letter-spacing:-0.4px">Di</div>
<div class="t" style="left:2925.0px;top:1676.0px;line-height:26px;font-size:21px;font-weight:400;color:#000;">31.12.2024</div>
<div class="t" style="left:3071.7px;top:1676.0px;line-height:26px;font-size:21px;font-weight:400;color:#000;">23:06</div>
<div class="t" style="right:566.0px;top:1676.0px;line-height:26px;font-size:21px;font-weight:400;color:#000;">0,34 kb</div>
<div style="left:1772.0px;top:1713.5px;width:17.5px;height:17.5px;background:#f0f0f0;border:1px solid #8a8a8a;box-sizing:border-box"></div>
<svg style="left:1800.0px;top:1707.5px" width="28.0" height="28.0" viewBox="0 0 28 28"><path d="M2 1 H13 L18 6 V24 H2Z" fill="#e8eef8" stroke="#8aa" stroke-width="1"/><rect x="10" y="12" width="16" height="15" fill="#fff" stroke="#1e7b34" stroke-width="2"/><path d="M13 15 L23 25 M23 15 L13 25" stroke="#1e7b34" stroke-width="2.5"/></svg>
<div class="t" style="left:1834.0px;top:1711.0px;line-height:26px;font-size:21.2px;font-weight:400;color:#000;">Einnahmen-Amazon-2024.xls</div>
<div class="t" style="left:2694.0px;top:1711.0px;line-height:26px;font-size:21px;font-weight:400;color:#000;">.xls</div>
<div class="t" style="left:2895.0px;top:1711.0px;line-height:26px;font-size:21px;font-weight:400;color:#000;letter-spacing:-0.4px">Di</div>
<div class="t" style="left:2925.0px;top:1711.0px;line-height:26px;font-size:21px;font-weight:400;color:#000;">31.12.2024</div>
<div class="t" style="left:3071.7px;top:1711.0px;line-height:26px;font-size:21px;font-weight:400;color:#000;">23:04</div>
<div class="t" style="right:566.0px;top:1711.0px;line-height:26px;font-size:21px;font-weight:400;color:#000;">14 kb</div>
<div style="left:1772.0px;top:1748.5px;width:17.5px;height:17.5px;background:#f0f0f0;border:1px solid #8a8a8a;box-sizing:border-box"></div>
<svg style="left:1803.0px;top:1743.5px" width="24.0" height="26.0" viewBox="0 0 24 26"><path d="M3.5 1.5 H15 L20.5 7 V24.5 H3.5Z" fill="#fff" stroke="#222" stroke-width="1.5" stroke-linejoin="round"/><path d="M15 1.5 V7 H20.5" fill="none" stroke="#222" stroke-width="1.3"/><rect x="7" y="10.0" width="10" height="1.6" fill="#2a2aa8"/><rect x="7" y="13.3" width="8" height="1.6" fill="#2a2aa8"/><rect x="7" y="16.6" width="10" height="1.6" fill="#2a2aa8"/><rect x="7" y="19.9" width="8" height="1.6" fill="#2a2aa8"/></svg>
<div class="t" style="left:1834.0px;top:1746.0px;line-height:26px;font-size:21.2px;font-weight:400;color:#000;">Einnahmen-Amazon-2024.csv</div>
<div class="t" style="left:2694.0px;top:1746.0px;line-height:26px;font-size:21px;font-weight:400;color:#000;">.csv</div>
<div class="t" style="left:2895.0px;top:1746.0px;line-height:26px;font-size:21px;font-weight:400;color:#000;letter-spacing:-0.4px">Di</div>
<div class="t" style="left:2925.0px;top:1746.0px;line-height:26px;font-size:21px;font-weight:400;color:#000;">31.12.2024</div>
<div class="t" style="left:3071.7px;top:1746.0px;line-height:26px;font-size:21px;font-weight:400;color:#000;">23:03</div>
<div class="t" style="right:566.0px;top:1746.0px;line-height:26px;font-size:21px;font-weight:400;color:#000;">3 kb</div>
<div style="left:1800.0px;top:1778.0px;width:26.0px;height:2.0px;background:#2a4a90"></div>
<div style="left:1759.6px;top:1786.0px;width:1574.0px;height:46.0px;background:#fff;border-left:1px solid #a0a0a0;box-sizing:border-box"></div>
<div style="left:1763.0px;top:1782.0px;width:1568.0px;height:1.5px;background:#b8b8b8"></div>
<div class="t" style="left:1782.0px;top:1791.7px;line-height:26px;font-size:21px;font-weight:400;color:#000;">D:\Kueche.png</div>
<div style="left:0.0px;top:2076.5px;width:3840.0px;height:83.5px;background:#14283a;border-top:1.5px solid #4a5460;box-sizing:border-box"></div>
<svg style="left:1241.0px;top:2098.0px" width="41.0" height="41.0" viewBox="0 0 41 41"><defs><linearGradient id="wl" x1="0" y1="0" x2="1" y2="1"><stop offset="0" stop-color="#6ce0ff"/><stop offset="1" stop-color="#0a8ae8"/></linearGradient></defs><rect x="0" y="0" width="19.5" height="19.5" fill="url(#wl)"/><rect x="21.5" y="0" width="19.5" height="19.5" fill="url(#wl)"/><rect x="0" y="21.5" width="19.5" height="19.5" fill="url(#wl)"/><rect x="21.5" y="21.5" width="19.5" height="19.5" fill="url(#wl)"/></svg>
<div style="left:1308.0px;top:2092.0px;width:381.0px;height:52.0px;background:#f3f3f3;border-radius:26px"></div>
<svg style="left:1324.0px;top:2103.0px" width="30.0" height="30.0" viewBox="0 0 30 30"><circle cx="12" cy="12" r="9" fill="none" stroke="#222" stroke-width="2.5"/><path d="M18.5 18.5 L27 27" stroke="#222" stroke-width="2.8" stroke-linecap="round"/></svg>
<div class="t" style="left:1371.6px;top:2104.5px;line-height:28px;font-size:22.3px;font-weight:400;color:#444;">Suche</div>
<svg style="left:1711.5px;top:2101.5px" width="43.0" height="33.0" viewBox="0 0 43 33"><defs><clipPath id="stc"><rect width="43" height="33" rx="2.5"/></clipPath></defs><g clip-path="url(#stc)"><rect width="43" height="33" fill="#1560c0"/><path d="M0 14 Q6 4 10 8 T17 14 T26 8 T34 14 T43 12 V33 H0Z" fill="#2a9ae8"/><path d="M0 22 L5 20 Q9 10 12 18 T19 22 Q24 12 28 20 T36 22 L43 21 V33 H0Z" fill="#a8dcfc"/></g></svg>
<svg style="left:1788.0px;top:2096.5px" width="44.0" height="44.0" viewBox="0 0 44 44"><defs><linearGradient id="eg1" x1="0" y1="0" x2="1" y2="1"><stop offset="0" stop-color="#36c3e8"/><stop offset=".6" stop-color="#4ad486"/><stop offset="1" stop-color="#58d048"/></linearGradient><linearGradient id="eg2" x1="0" y1="0" x2="0" y2="1"><stop offset="0" stop-color="#1a8ae0"/><stop offset="1" stop-color="#0c4aa8"/></linearGradient></defs><circle cx="22" cy="22" r="21.5" fill="url(#eg1)"/><path d="M1 24 Q3 10 16 10 Q30 11 28 26 Q27 32 38 30 Q40 29 42 26 Q38 43 22 43.5 Q4 43 1 24Z" fill="url(#eg2)"/><circle cx="20" cy="21" r="6" fill="#14283a"/><circle cx="10.5" cy="32" r="10" fill="#d8d2cc" stroke="#14283a" stroke-width="1"/><circle cx="10.5" cy="29" r="3.5" fill="#a09890"/><path d="M3 39 Q10.5 31 18 39" fill="#a09890"/></svg>
<svg style="left:1865.5px;top:2096.0px" width="44.0" height="44.0" viewBox="0 0 44 44"><circle cx="22" cy="22" r="21.5" fill="#e33b2e"/><path d="M22 22 L3.4 11.2 A21.5 21.5 0 0 0 11.2 40.6Z" fill="#1ea055"/><path d="M22 22 L11.2 40.6 A21.5 21.5 0 0 0 40.6 11.2Z" fill="#fbbc04"/><path d="M22 22 L40.6 11.2 A21.5 21.5 0 0 0 3.4 11.2Z" fill="#ea4335"/><path d="M22 12 H40.6 L33 25Z" fill="#fbbc04"/><path d="M13 27 L3.4 11.2 L11 8Z" fill="#1ea055" opacity="0"/><circle cx="22" cy="22" r="10.5" fill="#fff"/><circle cx="22" cy="22" r="8.3" fill="#3b78e7"/></svg>
<svg style="left:1942.5px;top:2099.5px" width="43.0" height="38.0" viewBox="0 0 43 38"><path d="M1 3 Q1 1 3 1 H14 L18 5 H40 Q42 5 42 7 V36 Q42 37 41 37 H2 Q1 37 1 36Z" fill="#e8a80c"/><rect x="1" y="7" width="41" height="30" rx="1.5" fill="#ffd24a"/><path d="M8 37 V26 Q8 23 11 23 H32 Q35 23 35 26 V37Z" fill="#1a80d8"/><rect x="14" y="28" width="15" height="2" fill="#0a60b0"/></svg>
<svg style="left:2026.0px;top:2104.5px" width="33.0" height="27.0" viewBox="0 0 33 27"><g stroke="#111" stroke-width="0.8"><rect x="1" y="1" width="11" height="10" fill="#fff"/><rect x="20" y="1" width="11" height="10" fill="#fff"/><rect x="11" y="15" width="11" height="10" fill="#fff"/></g><g fill="#1a1ad0" font-family="Liberation Mono" font-weight="700" font-size="9"><text x="3.5" y="9.5">F</text><text x="22.5" y="9.5">S</text><text x="13.5" y="23.5">E</text></g><path d="M13 3 V12 H3 M32 3 V12 H22 M23 17 V26 H13" stroke="#cfcfa8" stroke-width="1" fill="none"/></svg>
<svg style="left:2099.5px;top:2099.5px" width="37.0" height="37.0" viewBox="0 0 37 37"><circle cx="18.5" cy="18.5" r="17.8" fill="#0a0a38" stroke="#c8c8e0" stroke-width="1.3"/><circle cx="8.5" cy="12.5" r="1.7" fill="#f0f0ff"/><circle cx="13.7" cy="12.5" r="1.7" fill="#f0f0ff"/><circle cx="18.9" cy="12.5" r="1.7" fill="#f0f0ff"/><circle cx="24.1" cy="12.5" r="1.7" fill="#f0f0ff"/><circle cx="29.3" cy="12.5" r="1.7" fill="#f0f0ff"/><circle cx="8.5" cy="17.7" r="1.7" fill="#f0f0ff"/><circle cx="13.7" cy="17.7" r="1.7" fill="#f0f0ff"/><circle cx="18.9" cy="17.7" r="1.7" fill="#f0f0ff"/><circle cx="24.1" cy="17.7" r="1.7" fill="#f0f0ff"/><circle cx="29.3" cy="17.7" r="1.7" fill="#f0f0ff"/><circle cx="8.5" cy="22.9" r="1.7" fill="#f0f0ff"/><circle cx="13.7" cy="22.9" r="1.7" fill="#f0f0ff"/><circle cx="18.9" cy="22.9" r="1.7" fill="#f0f0ff"/><circle cx="24.1" cy="22.9" r="1.7" fill="#f0f0ff"/><circle cx="29.3" cy="22.9" r="1.7" fill="#f0f0ff"/></svg>
<svg style="left:2174.0px;top:2096.5px" width="42.0" height="43.0" viewBox="0 0 42 43"><rect width="42" height="43" fill="#1a90d8"/><g stroke="#fff" stroke-width="1.6" fill="none"><path d="M12 13 V8 Q12 6 14 6 H28 Q30 6 30 8 V13"/><path d="M7 27 V16 Q7 13 10 13 H32 Q34 13 34 15"/><path d="M12 21 H27 V37 H12Z"/><path d="M15 26 H23 M15 30 H23 M15 34 H23"/><rect x="28" y="20" width="9" height="17" rx="2"/><path d="M31 25 H34 M31 29 H34 M31 33 H34"/></g><circle cx="10" cy="16" r="1" fill="#fff"/></svg>
<svg style="left:2250.5px;top:2096.5px" width="44.0" height="44.0" viewBox="0 0 44 44"><defs><radialGradient id="tb1" cx=".35" cy=".3"><stop offset="0" stop-color="#8ac8ff"/><stop offset="1" stop-color="#1040a0"/></radialGradient><linearGradient id="tr1" x1="0" y1="0" x2="0" y2="1"><stop offset="0" stop-color="#ff9050"/><stop offset="1" stop-color="#d00"/></linearGradient><linearGradient id="tg1" x1="0" y1="0" x2="0" y2="1"><stop offset="0" stop-color="#70e050"/><stop offset="1" stop-color="#10a010"/></linearGradient></defs><rect x="0" y="6" width="19" height="29" fill="url(#tr1)"/><circle cx="29" cy="14" r="14" fill="url(#tb1)"/><path d="M29 17 L44 43 H14Z" fill="url(#tg1)"/></svg>
<div style="left:2267.6px;top:2146.5px;width:10.0px;height:4.0px;background:#9aa0a8;border-radius:2px"></div>
<svg style="left:2328.0px;top:2097.0px" width="42.0" height="42.0" viewBox="0 0 42 42"><rect width="42" height="42" fill="#fff"/><text x="21" y="31" font-family="Liberation Sans" font-size="23" font-weight="700" text-anchor="middle" fill="#000" letter-spacing="-1">WL</text></svg>
<svg style="left:2405.0px;top:2097.0px" width="36.0" height="41.0" viewBox="0 0 36 41"><path d="M18 1 L35 9 V29 L18 37 L1 29 V9Z" fill="#e8eef8" stroke="#c8d0e0" stroke-width="1"/><path d="M18 3 L32 9.5 L18 16 L4 9.5Z" fill="#1a3a80"/><path d="M3 13 L16 19 V33 L3 27Z" fill="#1a3a80"/><path d="M20 19 L33 13 V27 L20 33Z" fill="#2a4a98"/><ellipse cx="18" cy="38" rx="7" ry="3" fill="#d0d8e8"/><path d="M8 9 L28 10 M12 6 L24 13" stroke="#8aa0d0" stroke-width="1"/></svg>
<svg style="left:2481.5px;top:2097.0px" width="43.0" height="41.0" viewBox="0 0 43 41"><rect x="1" y="1" width="28" height="22" fill="#e8f0fc" stroke="#c8d4e8" stroke-width="1"/><rect x="13" y="16" width="29" height="24" fill="#f0f4fc" stroke="#c8d4e8" stroke-width="1"/><path d="M7 12 H20 M20 5 H25" stroke="#5aa8e8" stroke-width="2"/><path d="M20 28 H35 M20 33 H35" stroke="#5aa8e8" stroke-width="2"/><path d="M24 2 Q36 2 38 14 L42 14 L35 21 L30 14 L34 14 Q32 7 24 7Z" fill="#2aa52a"/><path d="M19 39 Q7 39 5 27 L1 27 L8 20 L13 27 L9 27 Q11 34 19 34Z" fill="#2aa52a"/></svg>
<div style="left:2498.0px;top:2146.5px;width:11.0px;height:4.0px;background:#9aa0a8;border-radius:2px"></div>
<div style="left:2545.6px;top:2083.5px;width:69.0px;height:68.5px;background:#223548;border:1px solid #2e4255;border-radius:6px;box-sizing:border-box"></div>
<div style="left:2558.5px;top:2097.0px;width:42.5px;height:42.0px;background:linear-gradient(135deg,#6ae05a,#10a010 60%,#0a8a0a);border:1px solid #0a7a0a;box-sizing:border-box"></div>
<div class="t" style="left:2563.0px;top:2100.5px;line-height:35px;font-size:28px;font-weight:700;color:#fff;font-family:'Liberation Serif'">io</div>
<div style="left:2564.0px;top:2147.0px;width:31.0px;height:4.0px;background:#4cc2ff;border-radius:2px"></div>
<svg style="left:3232.0px;top:2110.0px" width="22.0" height="14.0" viewBox="0 0 22 14"><path d="M2 12 L11 3 L20 12" stroke="#fff" stroke-width="2" fill="none"/></svg>
<svg style="left:3285.0px;top:2104.0px" width="28.0" height="28.0" viewBox="0 0 28 28"><rect x="0.5" y="0.5" width="27" height="27" fill="#1a3aa8" stroke="#3ad03a"/><ellipse cx="14" cy="13" rx="10" ry="7" fill="#ddd" transform="rotate(-35 14 13)"/><path d="M9 20 V27" stroke="#ddd" stroke-width="2"/></svg>
<svg style="left:3341.0px;top:2104.0px" width="28.0" height="28.0" viewBox="0 0 28 28"><path d="M2 10 Q14 0 26 10 L24 14 L18 12 L17 9 Q14 8 11 9 L10 12 L4 14Z" fill="#f0e020" stroke="#6a6a00"/><path d="M6 14 H22 L25 25 H3Z" fill="#f0e020" stroke="#6a6a00"/><rect x="10" y="16" width="8" height="6" fill="#aaa"/></svg>
<div class="t" style="left:3397.0px;top:2094.0px;line-height:48px;font-size:38px;font-weight:700;color:#1a80f0;font-family:'Liberation Serif'">T</div>
<svg style="left:3508.0px;top:2104.0px" width="28.0" height="28.0" viewBox="0 0 28 28"><path d="M7 3 L13 7 L7 11 L1 7Z M21 3 L27 7 L21 11 L15 7Z M14 13 L20 17 L14 21 L8 17Z M22 20 L26 23 L22 26 L18 23Z" fill="#fff"/><rect x="1" y="13" width="13" height="14" rx="2" fill="#e01020"/><text x="7.5" y="25" font-family="Liberation Sans" font-size="11" font-weight="700" fill="#fff" text-anchor="middle">4</text></svg>
<svg style="left:3565.0px;top:2105.0px" width="28.0" height="24.0" viewBox="0 0 28 24"><path d="M2 9 Q14 -2 26 9" stroke="#fff" stroke-width="2.2" fill="none"/><path d="M6 13 Q14 5 22 13" stroke="#fff" stroke-width="2.2" fill="none"/><path d="M10 17 Q14 13 18 17" stroke="#fff" stroke-width="2.2" fill="none"/><circle cx="14" cy="21" r="2" fill="#fff"/></svg>
<svg style="left:3606.0px;top:2105.0px" width="30.0" height="26.0" viewBox="0 0 30 26"><path d="M2 9 H7 L14 3 V23 L7 17 H2Z" stroke="#fff" stroke-width="1.8" fill="none"/><path d="M18 9 Q21 13 18 17 M21 6 Q26 13 21 20" stroke="#fff" stroke-width="1.8" fill="none"/><path d="M24 3 Q31 13 24 23" stroke="#667" stroke-width="1.5" fill="none"/></svg>
<div class="t" style="right:75.5px;top:2090.5px;line-height:26px;font-size:20.8px;font-weight:400;color:#fff;">22:11</div>
<div class="t" style="right:75.5px;top:2119.0px;line-height:25px;font-size:20.3px;font-weight:400;color:#fff;">27.07.2025</div>
<svg style="left:3779.0px;top:2105.0px" width="26.0" height="28.0" viewBox="0 0 26 28"><path d="M13 3 Q5 3 5 12 V18 L2 22 H24 L21 18 V12 Q21 3 13 3Z" fill="#fff"/><circle cx="13" cy="25" r="3" fill="#fff"/><text x="8" y="19" font-family="Liberation Sans" font-size="9" font-weight="700" fill="#14283a">z</text><text x="17" y="9" font-family="Liberation Sans" font-size="9" font-weight="700" fill="#fff">Z</text></svg>
<svg style="left:2232.0px;top:1162.0px" width="22.0" height="32.0" viewBox="0 0 22 32"><path d="M1.5 1.5 V24 L7 19 L11 28 L14.5 26.5 L10.5 17.5 H18Z" fill="#fff" stroke="#000" stroke-width="1.3" stroke-linejoin="round"/></svg></body></html>
